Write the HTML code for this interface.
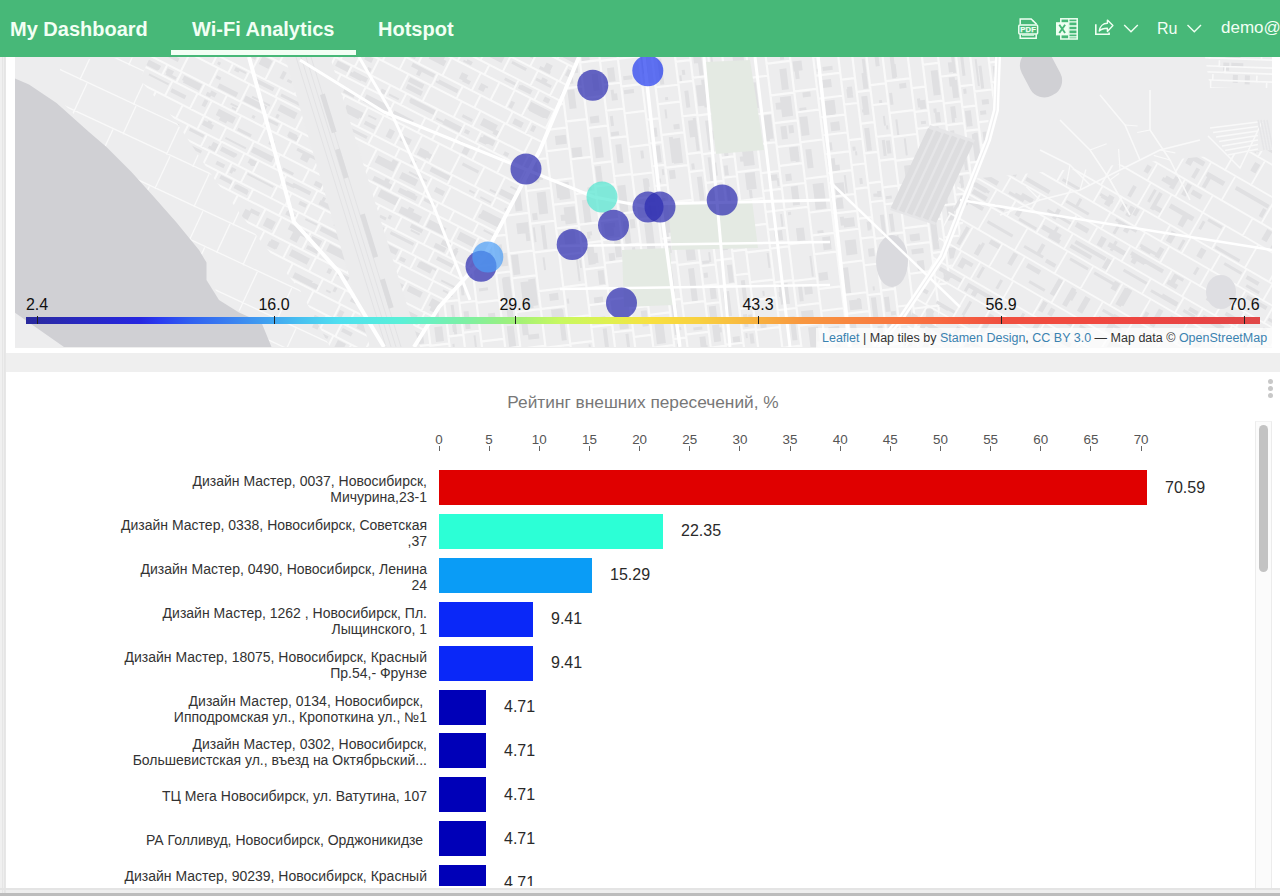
<!DOCTYPE html>
<html><head><meta charset="utf-8">
<style>
*{margin:0;padding:0;box-sizing:border-box}
html,body{width:1280px;height:896px;overflow:hidden;background:#efefef;font-family:"Liberation Sans",sans-serif}
#hdr{position:absolute;left:0;top:0;width:1280px;height:57px;background:#47b878;color:#f2fff4;z-index:5}
.nav{position:absolute;top:15px;font-size:20px;font-weight:bold;white-space:nowrap;line-height:24px}
#uline{position:absolute;left:171px;top:50px;width:185px;height:5px;background:#f2fff4}
.hico{position:absolute}
#mapcard{position:absolute;left:6px;top:50px;width:1274px;height:303px;background:#fff}
#map{position:absolute;left:15px;top:57px;width:1257px;height:290.5px;overflow:hidden;background:#eeeeee}
#chartcard{position:absolute;left:6px;top:372px;width:1274px;height:517px;background:#fff}
#clip{position:absolute;left:0;top:0;width:1280px;height:886px;overflow:hidden}
.title{position:absolute;left:0;width:1286px;text-align:center;top:392.2px;font-size:17.3px;line-height:20px;color:#777}
.lbl{position:absolute;right:853px;font-size:14px;line-height:16px;color:#333;text-align:right;white-space:nowrap}
.bar{position:absolute;left:439px;height:35px}
.val{position:absolute;font-size:16px;color:#2a2a2a;line-height:18px;white-space:nowrap}
.tk{position:absolute;top:432px;font-size:13.4px;line-height:15px;color:#555;width:30px;text-align:center;margin-left:-15px}
.tkl{position:absolute;top:446px;width:1px;height:5px;background:#666}
#scroll{position:absolute;left:1255px;top:421px;width:17px;height:468px;background:#fbfbfb;border-left:1px solid #ececec;border-right:1px solid #ececec;border-top:1px solid #f2f2f2}
#thumb{position:absolute;left:1259px;top:425px;width:9px;height:147px;background:#c3c3c3;border-radius:5px}
.dot{position:absolute;left:1268px;width:5px;height:5px;border-radius:50%;background:#c8c8c8}
#botline{position:absolute;left:0;top:888px;width:1280px;height:2px;background:#e4e4e4}
#botbar{position:absolute;left:0;top:893px;width:1280px;height:3px;background:#bdbdbd}
#cbar{position:absolute;left:26px;top:317px;width:1234px;height:7px;background:linear-gradient(to right,#2a2a9c 0%,#2828c0 4.4%,#2626e0 9.2%,#2a3cf0 10.9%,#3060f0 13.3%,#3a80f0 16.5%,#40a0f0 19.4%,#48c0f0 22.2%,#50e0f0 25.4%,#5af0d8 30.3%,#80f0a0 36%,#a0f078 39.6%,#c8f860 43.3%,#e0f050 47.3%,#f8e040 50.6%,#f8d040 54.6%,#f8b040 59.5%,#f89840 62.7%,#f88040 68.4%,#f86840 74%,#f05040 78.9%,#f04840 87%,#e84444 95.1%,#e04848 100%)}
.cbt{position:absolute;top:316px;width:1px;height:8px;background:#222;margin-left:-0.5px}
.cbl{position:absolute;top:295.7px;width:60px;margin-left:-30px;text-align:center;font-size:16px;line-height:18px;color:#111}
#attr{position:absolute;left:816px;top:327.7px;width:456px;height:20px;background:rgba(255,255,255,0.7);font-size:12.5px;line-height:20px;color:#333;padding-left:6px;white-space:nowrap}
.lk{color:#3a82b0}
#lm{position:absolute;left:0;top:57px;width:6px;height:836px;background:linear-gradient(to right,#f0f0f0 0,#f0f0f0 2px,#e6e6e6 2.5px,#eeeeee 3.5px,#e5e5e5 4.5px,#e8e8e8 6px)}

</style></head><body>
<div id="hdr">
  <div class="nav" style="left:10px;top:17.4px">My Dashboard</div>
  <div class="nav" style="left:192px;top:17.4px">Wi-Fi Analytics</div>
  <div class="nav" style="left:378px;top:17.4px">Hotspot</div>
  <div id="uline"></div>
  <svg class="hico" style="left:1010px;top:10px" width="200" height="40" viewBox="0 0 200 40" fill="none" stroke="#effff2" stroke-width="1.5">
    <!-- PDF -->
    <path d="M10.2 14.5V8.9H21.2L26.2 13.9V14.5M10.2 24.3V28.3H26.2V24.3"/>
    <circle cx="23.4" cy="11.3" r="0.8" fill="#effff2" stroke="none"/>
    <rect x="8.8" y="14.9" width="18.8" height="9" rx="1"/>
    <path d="M12 25.2h12" stroke-width="1"/>
    <text x="18.2" y="22.4" font-family="Liberation Sans" font-size="7.6" font-weight="bold" fill="#effff2" stroke="#effff2" stroke-width="0.25" text-anchor="middle" letter-spacing="0.2">PDF</text>
    <!-- Excel -->
    <rect x="50.8" y="8.8" width="16.4" height="20.2"/>
    <path d="M58.8 8.8V29M58.8 11.8H67M58.8 16H67M58.8 19.8H67M58.8 23.8H67M58.8 26.8H67" stroke-width="1.3"/>
    <rect x="46" y="12.2" width="12.5" height="13.2" fill="#effff2" stroke="none"/>
    <path d="M49.3 14.8l5.8 8.2M55.1 14.8l-5.8 8.2" stroke="#47b878" stroke-width="1.9"/>
    <!-- share -->
    <path d="M85.8 14.2V24.3H99.1V22.4" stroke-width="1.6"/>
    <path d="M89.3 21.1C89.8 16.5 93 13.3 97.4 13.3V10.1L102.9 15.6L97.4 21.4V18.2C93.5 18.2 91 19 89.3 21.1Z" stroke-width="1.4" stroke-linejoin="round"/>
    <!-- chevrons -->
    <path d="M114.2 15L121 21.8L127.8 15" stroke-width="1.4"/>
    <path d="M177.5 15L184.3 21.8L191 15" stroke-width="1.4"/>
  </svg>
  <div class="nav" style="left:1157px;top:18.7px;font-weight:normal;font-size:16px;line-height:20px">Ru</div>
  <div class="nav" style="left:1221px;top:18.4px;font-weight:normal;font-size:17px;line-height:20px">demo@</div>
</div>

<div id="mapcard"></div><div id="map"><svg width="1258" height="290" viewBox="0 0 1258 290" style="position:absolute;left:0;top:0;filter:blur(0.45px)"><rect width="1258" height="290" fill="#ededee"/><defs><clipPath id="u0"><polygon points="135.0,0.0 565.0,0.0 525.0,93.0 469.0,200.0 424.0,250.0 399.0,290.0 315.0,290.0 285.0,233.0 245.0,183.0 200.0,123.0 160.0,63.0 125.0,23.0"/></clipPath><clipPath id="u1"><polygon points="565.0,0.0 985.0,0.0 970.0,83.0 915.0,290.0 399.0,290.0 424.0,250.0 469.0,200.0 525.0,93.0"/></clipPath><clipPath id="u2"><polygon points="945.0,123.0 1257.0,93.0 1257.0,290.0 885.0,290.0"/></clipPath><clipPath id="u3"><polygon points="1190.0,0.0 1257.0,0.0 1257.0,31.0 1195.0,31.0"/></clipPath><clipPath id="u4"><polygon points="45.0,3.0 135.0,0.0 125.0,23.0 160.0,63.0 200.0,123.0 245.0,183.0 285.0,233.0 315.0,290.0 256.0,290.0 246.0,265.0 204.0,243.0 191.0,205.0 184.0,193.0 139.0,140.0 91.0,90.0 45.0,43.0"/></clipPath></defs><g clip-path="url(#u0)"><g transform="rotate(27 345 145)"><path d="M10 -236h8v8h-8zM33 -237h6v5h-6zM63 -230h12v5h-12zM78 -239h29v6h-29zM115 -234h12v2h-12zM135 -232h19v3h-19zM165 -238h7v5h-7zM167 -236h7v4h-7zM178 -236h21v8h-21zM219 -239h4v2h-4zM209 -232h6v3h-6zM257 -235h11v4h-11zM291 -228h6v3h-6zM285 -232h6v2h-6zM313 -237h17v6h-17zM344 -239h15v5h-15zM406 -230h9v3h-9zM442 -235h7v3h-7zM464 -238h7v5h-7zM473 -229h4v3h-4zM483 -237h14v6h-14zM482 -238h18v8h-18zM516 -230h12v3h-12zM537 -232h9v7h-9zM555 -231h6v2h-6zM598 -232h11v5h-11zM591 -238h12v6h-12zM616 -228h7v3h-7zM633 -239h10v3h-10zM638 -231h5v4h-5zM685 -239h8v7h-8zM688 -235h3v5h-3zM703 -234h10v2h-10zM-38 -219h25v3h-25zM-3 -218h9v2h-9zM11 -221h15v2h-15zM17 -218h5v2h-5zM49 -221h17v5h-17zM45 -217h19v2h-19zM78 -218h4v5h-4zM113 -216h19v3h-19zM148 -219h13v5h-13zM169 -220h17v3h-17zM235 -221h8v2h-8zM225 -218h7v3h-7zM256 -218h16v5h-16zM277 -219h13v2h-13zM295 -219h4v4h-4zM317 -220h7v5h-7zM328 -216h6v3h-6zM329 -219h4v5h-4zM345 -221h10v4h-10zM370 -219h8v3h-8zM395 -218h15v3h-15zM438 -217h9v2h-9zM429 -219h21v4h-21zM496 -221h6v3h-6zM514 -217h11v2h-11zM523 -219h5v2h-5zM537 -215h18v2h-18zM559 -221h5v5h-5zM575 -216h10v3h-10zM591 -218h18v2h-18zM596 -220h19v4h-19zM626 -219h12v5h-12zM638 -218h7v4h-7zM658 -221h11v2h-11zM-39 -201h25v4h-25zM10 -202h11v5h-11zM8 -202h7v7h-7zM29 -207h16v2h-16zM61 -204h6v2h-6zM91 -209h6v9h-6zM78 -206h19v6h-19zM134 -206h11v4h-11zM134 -206h11v5h-11zM153 -204h10v7h-10zM184 -207h9v5h-9zM217 -203h11v8h-11zM239 -208h9v8h-9zM268 -201h17v7h-17zM272 -206h13v7h-13zM292 -208h3v9h-3zM309 -199h16v4h-16zM329 -203h13v9h-13zM354 -206h9v7h-9zM348 -209h12v7h-12zM373 -206h8v7h-8zM368 -201h12v4h-12zM393 -200h9v5h-9zM416 -198h11v3h-11zM409 -204h8v8h-8zM434 -206h27v4h-27zM431 -204h26v4h-26zM467 -205h14v2h-14zM495 -201h8v3h-8zM489 -203h18v5h-18zM516 -202h26v5h-26zM548 -208h23v8h-23zM578 -208h19v8h-19zM580 -200h17v3h-17zM601 -203h9v9h-9zM623 -207h16v9h-16zM663 -205h14v6h-14zM652 -209h20v6h-20zM686 -209h5v8h-5zM696 -206h21v7h-21zM738 -208h10v2h-10zM725 -200h17v4h-17zM-38 -189h10v3h-10zM-37 -189h8v10h-8zM-14 -185h17v6h-17zM-18 -179h19v4h-19zM13 -182h11v6h-11zM47 -186h11v5h-11zM28 -187h27v5h-27zM122 -190h7v6h-7zM134 -178h20v6h-20zM191 -187h10v9h-10zM193 -179h8v7h-8zM208 -184h15v3h-15zM232 -188h15v4h-15zM229 -182h23v7h-23zM260 -180h12v3h-12zM258 -184h4v10h-4zM280 -181h12v2h-12zM300 -181h9v3h-9zM319 -185h12v4h-12zM314 -189h24v7h-24zM349 -186h17v10h-17zM344 -184h17v7h-17zM380 -178h14v2h-14zM372 -181h21v8h-21zM402 -189h21v4h-21zM459 -181h19v2h-19zM487 -182h4v10h-4zM484 -186h4v7h-4zM521 -187h4v8h-4zM541 -185h17v8h-17zM551 -183h13v4h-13zM570 -179h25v2h-25zM600 -182h10v10h-10zM618 -187h16v8h-16zM677 -182h9v8h-9zM664 -183h12v6h-12zM693 -178h7v4h-7zM696 -175h17v2h-17zM720 -181h5v7h-5zM-31 -162h17v3h-17zM23 -166h11v5h-11zM18 -165h20v2h-20zM50 -166h15v6h-15zM75 -165h3v5h-3zM89 -166h16v3h-16zM134 -167h19v6h-19zM134 -165h21v3h-21zM175 -163h8v4h-8zM186 -163h25v5h-25zM194 -166h21v6h-21zM225 -165h6v2h-6zM224 -164h3v6h-3zM246 -168h13v4h-13zM241 -163h20v4h-20zM275 -165h4v5h-4zM286 -166h9v5h-9zM303 -164h28v3h-28zM353 -163h13v5h-13zM342 -167h5v4h-5zM381 -165h12v4h-12zM373 -162h23v4h-23zM401 -166h22v2h-22zM430 -163h16v5h-16zM455 -162h5v2h-5zM468 -166h11v3h-11zM469 -165h9v5h-9zM488 -163h22v4h-22zM485 -166h22v6h-22zM524 -162h17v2h-17zM525 -166h9v6h-9zM550 -164h7v6h-7zM576 -167h9v6h-9zM637 -162h7v3h-7zM659 -165h11v5h-11zM660 -164h7v3h-7zM716 -167h3v4h-3zM-38 -154h22v3h-22zM-3 -154h12v8h-12zM28 -153h3v4h-3zM17 -149h12v8h-12zM37 -154h21v7h-21zM72 -149h12v3h-12zM73 -147h9v8h-9zM98 -153h16v3h-16zM97 -146h19v7h-19zM123 -143h13v2h-13zM184 -153h21v3h-21zM191 -148h17v5h-17zM213 -144h11v5h-11zM304 -153h10v8h-10zM330 -150h4v9h-4zM350 -147h13v4h-13zM390 -151h7v7h-7zM372 -147h4v6h-4zM408 -151h7v9h-7zM405 -149h12v2h-12zM455 -154h11v5h-11zM472 -152h31v6h-31zM484 -153h13v9h-13zM511 -152h4v5h-4zM511 -144h14v5h-14zM529 -150h19v3h-19zM532 -152h8v5h-8zM569 -153h5v9h-5zM553 -145h19v2h-19zM594 -150h16v3h-16zM590 -152h27v5h-27zM623 -145h8v4h-8zM679 -146h4v4h-4zM679 -147h27v7h-27zM711 -145h12v4h-12zM734 -151h20v6h-20zM735 -147h11v9h-11zM-39 -132h12v5h-12zM-20 -131h15v5h-15zM-22 -133h14v4h-14zM17 -130h22v3h-22zM55 -132h22v7h-22zM51 -129h21v5h-21zM95 -127h10v3h-10zM93 -127h4v4h-4zM116 -133h7v5h-7zM152 -126h3v3h-3zM170 -134h10v5h-10zM173 -133h13v7h-13zM189 -133h16v5h-16zM226 -134h4v3h-4zM247 -133h17v5h-17zM278 -133h9v5h-9zM301 -131h10v3h-10zM323 -129h18v5h-18zM323 -131h24v3h-24zM359 -132h4v7h-4zM390 -130h11v6h-11zM409 -132h6v4h-6zM410 -131h26v4h-26zM445 -128h9v5h-9zM448 -134h9v4h-9zM464 -132h18v2h-18zM501 -128h9v4h-9zM528 -132h19v7h-19zM559 -126h7v3h-7zM552 -131h17v5h-17zM610 -133h14v6h-14zM624 -125h4v2h-4zM640 -129h4v3h-4zM635 -130h4v4h-4zM648 -131h9v5h-9zM700 -131h10v3h-10zM696 -131h18v3h-18zM726 -130h16v3h-16zM721 -129h25v6h-25zM-39 -116h15v4h-15zM-7 -119h18v4h-18zM0 -117h3v2h-3zM32 -117h8v5h-8zM20 -118h13v4h-13zM47 -118h12v5h-12zM54 -118h4v5h-4zM67 -116h19v4h-19zM101 -118h7v3h-7zM122 -116h19v2h-19zM146 -115h11v2h-11zM146 -119h8v4h-8zM161 -118h9v3h-9zM178 -116h15v4h-15zM187 -116h7v4h-7zM199 -119h13v3h-13zM206 -119h5v2h-5zM239 -116h4v3h-4zM225 -117h18v2h-18zM255 -117h11v4h-11zM256 -118h8v4h-8zM313 -118h28v3h-28zM319 -118h15v4h-15zM351 -117h7v4h-7zM364 -118h24v3h-24zM364 -118h25v2h-25zM400 -116h15v4h-15zM428 -116h10v4h-10zM426 -117h14v5h-14zM447 -116h20v4h-20zM475 -119h10v5h-10zM478 -115h8v2h-8zM502 -119h11v4h-11zM500 -115h18v3h-18zM538 -114h5v2h-5zM554 -116h10v3h-10zM556 -117h10v2h-10zM579 -118h9v4h-9zM634 -115h8v2h-8zM667 -117h8v2h-8zM659 -119h4v5h-4zM702 -118h6v5h-6zM697 -116h11v2h-11zM719 -117h3v3h-3zM-29 -105h14v7h-14zM-35 -107h14v4h-14zM-6 -106h11v4h-11zM27 -106h11v4h-11zM48 -102h14v4h-14zM75 -100h9v2h-9zM98 -107h8v2h-8zM147 -104h18v5h-18zM179 -104h5v8h-5zM185 -98h3v3h-3zM223 -104h10v8h-10zM220 -97h12v2h-12zM243 -104h16v8h-16zM254 -108h10v5h-10zM300 -108h12v6h-12zM313 -103h13v3h-13zM338 -104h9v7h-9zM337 -106h15v2h-15zM356 -108h23v8h-23zM386 -103h4v3h-4zM391 -101h7v6h-7zM409 -105h6v5h-6zM419 -101h4v2h-4zM429 -107h4v8h-4zM427 -103h14v3h-14zM471 -102h16v3h-16zM490 -98h10v2h-10zM495 -105h6v6h-6zM516 -97h15v2h-15zM514 -103h13v8h-13zM543 -107h8v8h-8zM582 -103h11v2h-11zM610 -97h9v2h-9zM630 -106h9v7h-9zM651 -102h7v2h-7zM670 -100h11v5h-11zM679 -100h6v2h-6zM708 -104h12v2h-12zM730 -105h6v5h-6zM725 -101h9v6h-9zM-35 -87h7v9h-7zM-37 -84h13v2h-13zM-18 -87h7v8h-7zM-2 -77h20v3h-20zM21 -82h3v7h-3zM27 -91h13v7h-13zM57 -83h14v4h-14zM91 -79h10v2h-10zM119 -81h4v3h-4zM137 -86h19v5h-19zM162 -89h14v3h-14zM183 -85h24v9h-24zM182 -86h17v4h-17zM247 -90h11v10h-11zM253 -82h4v6h-4zM269 -83h5v3h-5zM287 -91h10v8h-10zM312 -89h11v3h-11zM329 -85h5v10h-5zM353 -87h16v2h-16zM389 -82h5v6h-5zM382 -84h3v8h-3zM434 -90h15v8h-15zM460 -84h13v8h-13zM481 -85h12v10h-12zM504 -85h10v7h-10zM505 -86h28v9h-28zM547 -90h6v2h-6zM550 -86h8v10h-8zM579 -80h14v2h-14zM635 -78h26v2h-26zM633 -80h21v3h-21zM674 -88h14v7h-14zM714 -90h13v4h-13zM-31 -64h9v6h-9zM31 -66h5v8h-5zM61 -70h7v6h-7zM83 -60h20v4h-20zM111 -63h11v2h-11zM139 -60h8v3h-8zM154 -63h13v8h-13zM155 -65h8v3h-8zM177 -67h15v6h-15zM211 -63h4v4h-4zM236 -63h15v5h-15zM232 -63h18v8h-18zM256 -70h12v7h-12zM281 -63h15v8h-15zM281 -59h14v4h-14zM312 -64h10v6h-10zM303 -69h21v2h-21zM333 -68h16v3h-16zM385 -60h10v4h-10zM430 -68h4v7h-4zM448 -64h7v9h-7zM444 -58h12v3h-12zM470 -68h11v7h-11zM492 -69h14v7h-14zM494 -66h15v6h-15zM522 -66h5v6h-5zM532 -68h11v9h-11zM557 -68h11v4h-11zM558 -69h11v4h-11zM576 -70h20v6h-20zM639 -68h18v9h-18zM662 -69h21v7h-21zM665 -60h20v3h-20zM691 -65h4v3h-4zM710 -70h4v3h-4zM-34 -50h16v6h-16zM-2 -48h9v7h-9zM1 -50h7v5h-7zM35 -46h7v4h-7zM64 -51h7v8h-7zM105 -43h8v2h-8zM84 -50h8v2h-8zM149 -45h5v7h-5zM159 -48h3v4h-3zM194 -46h14v4h-14zM194 -47h15v2h-15zM221 -48h11v7h-11zM221 -48h6v5h-6zM241 -49h10v3h-10zM246 -47h6v7h-6zM265 -48h3v3h-3zM272 -46h5v4h-5zM281 -41h11v2h-11zM319 -49h4v5h-4zM346 -50h5v8h-5zM364 -48h13v8h-13zM390 -51h18v8h-18zM417 -50h16v3h-16zM451 -49h6v4h-6zM446 -46h17v3h-17zM475 -49h6v8h-6zM487 -50h7v8h-7zM485 -51h14v7h-14zM520 -44h11v6h-11zM544 -51h5v7h-5zM587 -47h23v6h-23zM596 -48h18v8h-18zM622 -49h17v2h-17zM619 -48h18v7h-18zM647 -49h12v3h-12zM687 -45h3v2h-3zM710 -46h17v2h-17zM-30 -32h8v4h-8zM-14 -31h8v4h-8zM-14 -33h16v5h-16zM15 -32h17v4h-17zM48 -34h8v4h-8zM59 -34h3v4h-3zM70 -31h24v2h-24zM81 -34h11v5h-11zM98 -32h3v3h-3zM98 -34h11v5h-11zM118 -33h15v2h-15zM142 -31h14v2h-14zM141 -33h30v5h-30zM187 -31h9v3h-9zM186 -33h12v3h-12zM211 -32h6v5h-6zM232 -32h13v5h-13zM268 -33h16v5h-16zM278 -33h5v4h-5zM292 -32h9v2h-9zM289 -33h10v5h-10zM306 -30h18v3h-18zM336 -32h8v5h-8zM342 -32h5v2h-5zM359 -32h3v4h-3zM376 -31h6v4h-6zM373 -29h5v2h-5zM418 -32h12v3h-12zM434 -32h5v4h-5zM436 -33h12v5h-12zM462 -33h6v5h-6zM479 -32h21v5h-21zM484 -34h5v3h-5zM510 -34h28v4h-28zM515 -34h25v2h-25zM572 -32h4v2h-4zM574 -33h17v5h-17zM613 -30h15v3h-15zM649 -31h10v2h-10zM664 -33h10v2h-10zM663 -32h10v4h-10zM683 -34h15v3h-15zM693 -33h5v4h-5zM709 -34h17v5h-17zM-32 -16h4v9h-4zM-39 -20h9v8h-9zM-18 -19h16v5h-16zM-15 -14h10v3h-10zM13 -17h3v8h-3zM11 -17h11v3h-11zM77 -20h3v9h-3zM76 -18h16v8h-16zM106 -21h11v8h-11zM116 -18h3v4h-3zM158 -21h19v9h-19zM159 -17h18v9h-18zM188 -23h10v9h-10zM210 -15h5v2h-5zM228 -18h9v6h-9zM253 -17h20v7h-20zM281 -22h6v4h-6zM301 -16h6v6h-6zM322 -14h7v7h-7zM346 -23h9v9h-9zM341 -20h17v6h-17zM377 -17h7v7h-7zM381 -13h8v4h-8zM399 -16h6v7h-6zM399 -16h8v2h-8zM434 -14h4v7h-4zM452 -22h22v8h-22zM454 -15h16v2h-16zM486 -11h13v2h-13zM508 -23h14v5h-14zM557 -14h14v6h-14zM583 -13h5v3h-5zM600 -17h25v5h-25zM611 -16h14v6h-14zM638 -19h12v2h-12zM663 -20h22v9h-22zM716 -17h26v9h-26zM725 -13h19v5h-19zM-35 1h11v5h-11zM-35 5h7v2h-7zM18 3h3v3h-3zM33 1h20v5h-20zM33 -1h21v2h-21zM60 0h13v5h-13zM78 -3h21v6h-21zM97 -2h10v3h-10zM122 -3h8v6h-8zM117 3h8v4h-8zM142 -1h14v2h-14zM162 -1h17v5h-17zM211 -3h12v2h-12zM240 4h15v3h-15zM230 1h23v2h-23zM289 2h6v5h-6zM329 -3h25v4h-25zM337 1h4v5h-4zM358 2h4v2h-4zM360 0h22v4h-22zM445 0h10v6h-10zM464 -2h4v6h-4zM488 2h16v5h-16zM509 1h8v2h-8zM530 -3h6v5h-6zM551 -2h12v2h-12zM551 -2h6v4h-6zM571 -3h5v6h-5zM602 -2h9v3h-9zM603 1h9v2h-9zM643 0h3v5h-3zM636 -2h7v6h-7zM650 1h14v2h-14zM654 -2h7v4h-7zM673 -1h13v5h-13zM692 -1h14v5h-14zM729 -1h10v5h-10zM713 3h21v3h-21zM-31 14h16v7h-16zM26 16h3v4h-3zM25 14h19v7h-19zM59 11h15v6h-15zM84 18h13v4h-13zM104 18h16v7h-16zM135 16h13v5h-13zM136 16h11v5h-11zM155 20h23v3h-23zM189 19h16v5h-16zM221 12h13v2h-13zM219 18h17v2h-17zM241 21h14v2h-14zM248 12h3v5h-3zM270 13h5v6h-5zM291 21h4v4h-4zM284 11h8v5h-8zM333 11h16v5h-16zM334 18h17v5h-17zM397 20h11v3h-11zM432 19h5v5h-5zM417 14h16v8h-16zM522 20h5v5h-5zM546 15h7v5h-7zM571 18h3v2h-3zM604 12h4v7h-4zM618 20h13v5h-13zM648 17h8v7h-8zM665 17h13v4h-13zM686 15h10v5h-10zM711 20h16v3h-16zM-32 30h4v6h-4zM-37 30h20v6h-20zM-11 34h16v3h-16zM-8 34h7v3h-7zM39 30h6v3h-6zM65 29h14v3h-14zM67 30h8v3h-8zM94 31h9v3h-9zM89 34h9v4h-9zM111 32h11v3h-11zM119 31h4v4h-4zM143 29h12v6h-12zM218 34h6v2h-6zM219 32h10v3h-10zM253 35h3v3h-3zM238 29h13v5h-13zM261 29h14v6h-14zM278 33h13v4h-13zM280 31h16v5h-16zM313 34h5v4h-5zM322 35h11v2h-11zM343 29h21v4h-21zM344 29h27v5h-27zM375 35h24v2h-24zM383 32h19v6h-19zM406 32h5v4h-5zM425 29h13v6h-13zM423 32h8v5h-8zM451 34h5v4h-5zM482 32h16v4h-16zM510 33h24v5h-24zM553 34h3v3h-3zM547 35h9v3h-9zM565 29h21v3h-21zM566 30h14v3h-14zM617 34h5v3h-5zM609 32h26v6h-26zM649 31h17v6h-17zM640 29h21v3h-21zM671 32h4v6h-4zM671 29h24v3h-24zM703 29h4v4h-4zM704 31h12v6h-12zM726 30h3v5h-3zM720 32h14v2h-14zM-32 49h12v2h-12zM-12 44h11v8h-11zM24 43h8v8h-8zM51 45h17v2h-17zM50 42h5v5h-5zM72 48h16v5h-16zM79 48h5v5h-5zM109 42h18v2h-18zM136 47h15v6h-15zM133 47h3v5h-3zM176 42h5v4h-5zM181 46h3v4h-3zM191 42h15v5h-15zM215 48h3v5h-3zM247 50h14v5h-14zM280 50h12v5h-12zM302 46h27v8h-27zM334 48h22v5h-22zM413 48h6v7h-6zM406 45h16v2h-16zM484 42h21v7h-21zM509 51h8v3h-8zM562 43h7v6h-7zM579 44h11v5h-11zM573 50h12v4h-12zM597 46h17v7h-17zM617 43h12v7h-12zM618 52h5v3h-5zM652 46h5v8h-5zM668 44h14v6h-14zM669 46h14v4h-14zM687 43h26v7h-26zM691 45h11v3h-11zM-34 60h21v3h-21zM-38 67h4v8h-4zM-8 70h24v5h-24zM-10 69h16v7h-16zM22 61h9v9h-9zM26 67h10v9h-10zM41 62h6v5h-6zM39 69h9v4h-9zM63 60h22v4h-22zM69 60h13v3h-13zM126 68h17v9h-17zM157 59h30v7h-30zM192 59h10v9h-10zM197 59h6v9h-6zM217 63h4v8h-4zM225 68h5v3h-5zM243 64h22v10h-22zM269 62h12v10h-12zM290 66h16v6h-16zM289 64h19v6h-19zM313 70h12v4h-12zM313 63h9v2h-9zM338 66h6v9h-6zM352 66h11v6h-11zM352 67h9v3h-9zM374 69h10v8h-10zM377 70h11v5h-11zM419 63h18v3h-18zM455 74h7v2h-7zM465 69h25v6h-25zM472 62h19v2h-19zM501 67h13v4h-13zM497 70h19v6h-19zM524 59h14v5h-14zM536 60h6v3h-6zM549 63h25v7h-25zM577 61h3v4h-3zM615 64h14v10h-14zM614 60h12v5h-12zM639 64h10v4h-10zM663 62h11v9h-11zM689 68h9v3h-9zM684 70h24v2h-24zM-9 83h6v4h-6zM7 81h7v5h-7zM40 81h3v5h-3zM24 83h25v5h-25zM66 81h6v5h-6zM122 86h4v2h-4zM124 81h17v5h-17zM155 84h3v3h-3zM176 81h9v2h-9zM173 81h5v4h-5zM196 82h21v4h-21zM226 84h23v3h-23zM255 81h8v4h-8zM277 83h17v3h-17zM276 83h16v4h-16zM303 83h19v3h-19zM372 83h5v5h-5zM393 81h21v5h-21zM437 84h6v2h-6zM450 85h12v2h-12zM477 84h3v3h-3zM489 82h12v2h-12zM509 82h9v3h-9zM512 81h6v2h-6zM528 85h5v2h-5zM525 85h8v3h-8zM571 82h11v3h-11zM565 81h20v4h-20zM595 85h12v2h-12zM643 82h6v3h-6zM673 85h3v3h-3zM664 81h10v3h-10zM689 83h10v5h-10zM691 83h10v2h-10zM717 82h11v2h-11zM714 81h11v3h-11zM-27 100h12v2h-12zM-7 96h25v5h-25zM30 102h5v4h-5zM47 100h18v4h-18zM51 103h17v5h-17zM82 95h12v6h-12zM83 98h7v6h-7zM105 99h14v4h-14zM160 97h5v3h-5zM166 103h21v5h-21zM195 102h24v6h-24zM201 99h20v2h-20zM230 94h19v7h-19zM231 104h3v4h-3zM267 105h7v3h-7zM288 104h17v3h-17zM355 92h6v9h-6zM340 95h21v8h-21zM375 95h20v2h-20zM369 99h18v7h-18zM406 97h10v5h-10zM457 101h23v4h-23zM458 96h24v7h-24zM490 98h18v6h-18zM492 98h17v8h-17zM517 103h20v5h-20zM526 93h9v3h-9zM556 93h3v4h-3zM550 97h10v2h-10zM568 95h8v9h-8zM574 95h4v2h-4zM582 98h26v3h-26zM584 94h18v5h-18zM613 93h11v5h-11zM612 94h22v5h-22zM654 106h10v2h-10zM684 99h13v5h-13zM714 102h7v3h-7zM-30 115h6v4h-6zM-16 115h17v3h-17zM21 113h7v2h-7zM42 115h7v2h-7zM38 112h16v5h-16zM89 116h16v4h-16zM92 114h14v5h-14zM114 117h11v3h-11zM113 113h7v5h-7zM131 112h20v5h-20zM133 114h18v5h-18zM159 116h5v4h-5zM162 113h6v5h-6zM185 115h8v2h-8zM188 118h5v2h-5zM210 116h3v3h-3zM226 112h11v3h-11zM251 115h10v5h-10zM250 114h9v5h-9zM293 116h5v4h-5zM321 114h9v3h-9zM320 114h14v2h-14zM357 112h5v5h-5zM346 115h20v5h-20zM382 113h9v4h-9zM374 114h20v5h-20zM401 112h11v3h-11zM406 113h7v2h-7zM468 113h19v2h-19zM497 114h24v3h-24zM509 115h4v5h-4zM529 112h11v4h-11zM581 113h13v5h-13zM612 115h11v5h-11zM622 116h4v4h-4zM649 112h9v2h-9zM640 113h23v5h-23zM673 113h12v4h-12zM671 112h16v5h-16zM704 114h8v5h-8zM704 113h7v4h-7zM724 113h7v4h-7zM-15 131h17v5h-17zM-6 133h5v2h-5zM29 124h3v8h-3zM21 135h16v2h-16zM45 133h8v3h-8zM65 128h6v4h-6zM62 127h8v4h-8zM82 130h8v7h-8zM99 126h22v2h-22zM126 129h16v4h-16zM160 124h4v7h-4zM182 132h8v4h-8zM177 126h19v7h-19zM203 134h15v3h-15zM237 130h5v5h-5zM265 125h22v3h-22zM272 127h8v7h-8zM297 131h21v2h-21zM298 129h13v4h-13zM324 129h15v5h-15zM325 127h4v7h-4zM358 124h20v8h-20zM391 127h6v7h-6zM384 130h23v7h-23zM415 129h19v8h-19zM448 126h18v8h-18zM481 131h15v5h-15zM483 125h3v7h-3zM546 130h5v7h-5zM552 126h22v8h-22zM592 132h13v3h-13zM610 126h5v5h-5zM612 127h11v3h-11zM628 126h5v8h-5zM627 129h3v7h-3zM647 125h17v5h-17zM650 128h13v6h-13zM669 125h13v6h-13zM692 129h3v8h-3zM729 127h15v5h-15zM-32 141h6v5h-6zM-39 143h5v4h-5zM-20 148h11v3h-11zM-18 142h5v4h-5zM7 144h19v5h-19zM12 146h16v5h-16zM48 147h11v5h-11zM69 146h22v5h-22zM71 142h20v7h-20zM173 141h4v7h-4zM169 143h11v5h-11zM196 148h23v2h-23zM225 144h23v6h-23zM261 149h12v3h-12zM296 146h8v5h-8zM296 147h7v3h-7zM308 145h19v7h-19zM377 143h3v4h-3zM369 147h7v3h-7zM401 141h13v4h-13zM403 146h10v2h-10zM431 147h12v5h-12zM436 141h9v5h-9zM451 142h3v4h-3zM450 144h5v7h-5zM496 142h27v2h-27zM509 145h9v7h-9zM532 143h9v5h-9zM550 148h6v2h-6zM587 143h15v3h-15zM626 146h3v6h-3zM624 146h5v2h-5zM661 149h17v3h-17zM671 143h14v2h-14zM700 144h18v6h-18zM730 145h5v3h-5zM734 147h3v2h-3zM-2 158h18v3h-18zM26 160h10v6h-10zM86 159h11v3h-11zM84 156h10v2h-10zM106 159h7v4h-7zM133 158h16v5h-16zM160 156h16v3h-16zM185 163h8v3h-8zM187 158h6v5h-6zM207 158h7v3h-7zM197 158h16v5h-16zM230 156h3v6h-3zM227 156h8v5h-8zM277 158h20v4h-20zM270 160h10v3h-10zM310 157h3v4h-3zM309 161h15v5h-15zM341 158h13v2h-13zM331 159h19v6h-19zM359 159h5v3h-5zM364 157h15v6h-15zM386 157h26v3h-26zM439 158h18v4h-18zM508 161h14v4h-14zM507 157h7v4h-7zM525 157h14v3h-14zM528 156h15v5h-15zM552 156h14v2h-14zM552 157h26v6h-26zM617 159h23v3h-23zM650 160h21v4h-21zM677 161h12v4h-12zM711 160h8v6h-8zM720 157h4v2h-4zM738 158h19v6h-19zM19 170h4v6h-4zM36 174h21v3h-21zM43 170h10v6h-10zM64 170h12v5h-12zM98 174h12v5h-12zM122 171h13v4h-13zM115 171h10v4h-10zM145 173h10v5h-10zM148 173h6v6h-6zM164 171h17v3h-17zM199 173h9v4h-9zM215 172h5v3h-5zM215 175h3v3h-3zM232 170h29v2h-29zM291 171h8v4h-8zM332 172h5v6h-5zM342 172h6v3h-6zM343 176h14v4h-14zM363 178h19v2h-19zM388 170h13v6h-13zM406 175h6v4h-6zM426 170h18v2h-18zM425 171h15v6h-15zM453 177h15v2h-15zM474 173h15v4h-15zM476 174h9v6h-9zM498 175h16v5h-16zM500 174h19v2h-19zM566 173h7v5h-7zM583 176h25v4h-25zM595 171h14v3h-14zM612 171h9v3h-9zM622 174h12v4h-12zM682 172h9v5h-9zM677 173h13v2h-13zM698 174h13v5h-13zM705 173h6v4h-6zM715 175h10v2h-10zM-11 185h8v2h-8zM-13 184h9v3h-9zM7 186h5v3h-5zM2 187h12v2h-12zM20 186h16v4h-16zM47 189h24v3h-24zM48 186h22v2h-22zM81 188h13v2h-13zM78 188h16v4h-16zM143 187h7v4h-7zM143 186h4v5h-4zM209 184h13v4h-13zM215 184h4v3h-4zM227 185h13v3h-13zM226 186h15v4h-15zM285 184h3v5h-3zM284 186h10v4h-10zM304 184h13v2h-13zM322 184h26v5h-26zM354 184h4v5h-4zM369 184h9v2h-9zM459 185h6v2h-6zM469 188h5v4h-5zM471 190h23v2h-23zM541 187h10v5h-10zM596 184h17v2h-17zM617 185h13v4h-13zM616 189h13v3h-13zM635 187h11v5h-11zM636 185h14v2h-14zM680 186h8v3h-8zM673 187h8v5h-8zM739 187h4v5h-4zM734 188h6v2h-6zM-28 206h3v6h-3zM-15 201h4v9h-4zM-20 197h3v9h-3zM-5 203h3v7h-3zM29 202h10v5h-10zM65 202h6v9h-6zM76 204h25v7h-25zM81 199h18v2h-18zM120 203h9v8h-9zM105 202h25v7h-25zM141 204h21v5h-21zM167 200h28v7h-28zM251 200h10v4h-10zM246 203h7v9h-7zM269 201h10v9h-10zM299 202h8v8h-8zM293 196h19v6h-19zM318 207h12v4h-12zM318 197h11v7h-11zM337 196h25v8h-25zM375 201h12v9h-12zM392 201h27v9h-27zM402 199h20v6h-20zM427 197h15v6h-15zM456 205h20v5h-20zM453 198h21v8h-21zM492 204h16v8h-16zM485 200h20v8h-20zM512 204h25v3h-25zM544 204h23v3h-23zM547 200h12v6h-12zM579 208h23v2h-23zM587 202h8v8h-8zM610 197h27v2h-27zM678 197h14v6h-14zM686 203h11v4h-11zM701 203h12v6h-12zM714 196h5v3h-5zM731 199h11v9h-11zM732 204h5v7h-5zM-38 218h16v7h-16zM4 220h6v7h-6zM-1 219h5v2h-5zM31 222h3v3h-3zM16 221h14v3h-14zM42 223h9v4h-9zM43 221h18v2h-18zM69 217h26v2h-26zM104 222h9v4h-9zM122 217h11v2h-11zM122 224h9v3h-9zM151 220h17v2h-17zM181 222h18v4h-18zM187 222h5v6h-5zM203 222h15v4h-15zM213 220h5v7h-5zM227 224h3v3h-3zM231 220h3v4h-3zM283 218h9v7h-9zM282 221h9v5h-9zM306 218h20v7h-20zM347 218h4v5h-4zM358 217h12v4h-12zM388 217h8v6h-8zM405 223h13v4h-13zM404 219h12v7h-12zM425 220h23v4h-23zM479 216h31v2h-31zM562 219h7v6h-7zM557 218h12v7h-12zM574 217h12v7h-12zM643 219h4v4h-4zM640 221h7v5h-7zM656 218h21v7h-21zM682 220h17v4h-17zM681 221h14v7h-14zM722 224h13v4h-13zM723 216h12v4h-12zM-3 233h6v4h-6zM13 240h10v2h-10zM16 232h5v6h-5zM53 236h6v5h-6zM39 236h21v6h-21zM66 232h3v7h-3zM65 238h8v3h-8zM85 233h3v6h-3zM84 239h15v4h-15zM127 240h4v2h-4zM135 237h7v6h-7zM161 234h15v4h-15zM186 237h19v3h-19zM181 235h29v5h-29zM225 240h8v2h-8zM272 233h7v7h-7zM253 235h13v7h-13zM287 238h9v3h-9zM319 237h20v6h-20zM327 238h19v5h-19zM355 238h5v2h-5zM361 232h3v5h-3zM400 232h6v7h-6zM381 234h14v4h-14zM418 233h24v3h-24zM449 235h13v6h-13zM451 236h11v3h-11zM472 235h16v7h-16zM471 238h8v5h-8zM510 232h18v5h-18zM500 235h28v7h-28zM539 239h19v2h-19zM564 233h21v3h-21zM581 237h3v4h-3zM589 237h7v5h-7zM593 235h6v7h-6zM618 238h16v2h-16zM638 239h19v2h-19zM681 232h10v6h-10zM687 236h3v4h-3zM712 235h14v5h-14zM-34 252h6v5h-6zM-7 254h6v4h-6zM-12 247h24v5h-24zM25 250h11v2h-11zM70 248h27v6h-27zM108 248h25v4h-25zM106 250h24v7h-24zM181 251h12v7h-12zM200 250h18v6h-18zM224 255h29v3h-29zM224 248h20v5h-20zM259 247h8v5h-8zM260 253h9v4h-9zM293 249h4v7h-4zM302 249h13v5h-13zM312 255h10v3h-10zM326 253h8v6h-8zM376 250h5v7h-5zM399 256h12v3h-12zM398 249h14v7h-14zM428 249h5v2h-5zM456 254h14v3h-14zM463 248h8v4h-8zM478 251h14v5h-14zM500 256h23v3h-23zM505 251h15v7h-15zM533 255h8v2h-8zM578 251h9v2h-9zM570 252h13v5h-13zM601 248h9v7h-9zM627 247h5v7h-5zM623 249h9v6h-9zM666 248h22v4h-22zM694 249h3v3h-3zM729 255h13v4h-13zM735 251h7v3h-7zM-18 268h20v3h-20zM-8 266h14v2h-14zM9 264h11v6h-11zM92 263h13v5h-13zM114 263h7v7h-7zM120 268h4v2h-4zM129 269h18v3h-18zM155 266h4v6h-4zM161 268h4v6h-4zM178 267h5v6h-5zM173 267h14v3h-14zM222 268h10v5h-10zM223 263h9v3h-9zM243 269h11v3h-11zM265 263h18v5h-18zM263 270h16v3h-16zM291 263h4v7h-4zM356 266h8v4h-8zM387 265h11v4h-11zM422 264h3v6h-3zM422 264h4v4h-4zM465 267h10v6h-10zM470 268h21v2h-21zM499 268h17v4h-17zM527 270h10v4h-10zM544 267h10v6h-10zM577 272h10v2h-10zM592 265h11v4h-11zM594 268h6v6h-6zM607 265h10v7h-10zM613 268h3v5h-3zM649 267h3v7h-3zM652 268h8v6h-8zM683 264h13v5h-13zM701 263h29v3h-29zM-38 285h12v4h-12zM-15 282h8v2h-8zM6 285h7v3h-7zM35 279h3v8h-3zM33 278h10v8h-10zM48 283h8v7h-8zM70 283h17v2h-17zM104 287h7v5h-7zM94 284h16v3h-16zM122 280h4v8h-4zM136 282h14v3h-14zM143 283h4v3h-4zM165 278h8v8h-8zM186 284h23v5h-23zM189 280h20v5h-20zM213 278h10v8h-10zM214 280h3v8h-3zM242 278h9v3h-9zM264 285h20v6h-20zM328 279h10v8h-10zM350 289h11v2h-11zM346 282h11v8h-11zM368 279h10v3h-10zM388 278h9v8h-9zM405 286h13v5h-13zM405 282h12v7h-12zM429 285h6v5h-6zM436 278h5v2h-5zM468 285h9v7h-9zM458 285h18v4h-18zM488 288h17v2h-17zM486 279h21v5h-21zM522 282h14v2h-14zM545 279h27v5h-27zM580 280h12v8h-12zM601 278h7v5h-7zM644 279h14v7h-14zM680 280h7v8h-7zM674 280h8v6h-8zM701 279h13v3h-13zM694 278h22v7h-22zM722 282h13v8h-13zM719 281h19v6h-19zM-34 298h11v4h-11zM-37 296h17v4h-17zM-13 300h12v5h-12zM-16 301h3v5h-3zM11 297h4v4h-4zM29 300h20v5h-20zM64 300h7v6h-7zM60 297h9v4h-9zM102 298h16v2h-16zM131 299h10v6h-10zM158 297h4v3h-4zM160 298h7v6h-7zM175 300h15v4h-15zM181 296h5v6h-5zM206 303h13v3h-13zM203 301h16v3h-16zM272 296h18v5h-18zM264 299h24v6h-24zM294 301h18v3h-18zM319 298h15v6h-15zM318 299h21v4h-21zM347 299h16v4h-16zM345 303h16v2h-16zM417 296h16v5h-16zM405 301h27v5h-27zM442 301h3v5h-3zM454 303h20v3h-20zM493 296h20v6h-20zM484 299h30v5h-30zM530 303h13v3h-13zM559 301h19v4h-19zM570 297h3v6h-3zM585 296h5v6h-5zM603 301h17v3h-17zM646 296h7v6h-7zM637 301h7v4h-7zM678 299h16v6h-16zM679 301h13v4h-13zM728 302h6v2h-6zM723 296h7v5h-7zM-18 311h6v7h-6zM13 312h4v2h-4zM-3 313h25v6h-25zM34 312h27v8h-27zM69 318h21v4h-21zM68 317h18v6h-18zM103 310h6v3h-6zM117 314h9v8h-9zM146 321h9v2h-9zM151 318h3v3h-3zM159 313h8v3h-8zM162 310h7v2h-7zM175 312h13v4h-13zM177 310h6v5h-6zM198 314h7v7h-7zM197 314h9v6h-9zM217 318h20v2h-20zM245 316h11v6h-11zM273 313h16v3h-16zM267 318h25v2h-25zM295 310h10v4h-10zM295 314h14v3h-14zM318 314h20v7h-20zM347 316h5v7h-5zM343 311h11v4h-11zM357 312h16v2h-16zM417 315h15v2h-15zM415 312h9v8h-9zM439 313h10v6h-10zM464 318h16v5h-16zM466 314h24v5h-24zM516 310h5v2h-5zM538 312h22v8h-22zM534 313h21v4h-21zM574 313h15v7h-15zM601 310h5v6h-5zM620 317h27v2h-27zM634 315h10v8h-10zM659 316h17v7h-17zM657 311h6v7h-6zM684 316h11v7h-11zM705 314h5v5h-5zM725 317h19v4h-19zM726 317h17v6h-17zM-35 327h15v5h-15zM0 330h8v5h-8zM3 331h7v4h-7zM19 327h20v4h-20zM25 329h24v2h-24zM66 327h12v3h-12zM84 331h31v3h-31zM97 329h4v3h-4zM124 329h21v5h-21zM156 328h6v4h-6zM178 330h3v4h-3zM172 330h4v4h-4zM196 332h11v3h-11zM220 329h4v2h-4zM245 327h4v5h-4zM235 333h6v2h-6zM267 327h7v4h-7zM254 333h10v2h-10zM284 328h24v4h-24zM314 329h17v2h-17zM317 331h9v2h-9zM351 328h11v4h-11zM347 328h7v5h-7zM373 331h7v3h-7zM369 331h3v4h-3zM408 331h22v2h-22zM508 328h17v4h-17zM514 329h13v5h-13zM541 327h4v3h-4zM604 333h3v2h-3zM616 333h10v2h-10zM616 328h5v4h-5zM638 327h6v5h-6zM654 327h24v3h-24zM664 330h13v4h-13zM683 328h23v2h-23zM723 331h10v3h-10zM726 330h5v5h-5zM-38 343h15v5h-15zM-39 346h17v2h-17zM-10 344h14v4h-14zM21 339h6v6h-6zM37 341h21v7h-21zM40 345h21v5h-21zM71 343h7v2h-7zM73 343h10v5h-10zM95 342h18v4h-18zM119 339h18v6h-18zM149 341h7v4h-7zM155 340h4v6h-4zM171 344h13v6h-13zM213 339h3v7h-3zM231 344h9v5h-9zM260 340h12v4h-12zM280 345h22v3h-22zM279 341h14v7h-14zM312 339h10v3h-10zM306 339h12v4h-12zM330 346h13v4h-13zM336 343h5v2h-5zM376 343h11v5h-11zM395 341h11v7h-11zM406 341h14v4h-14zM499 339h16v6h-16zM528 344h19v3h-19zM588 340h28v3h-28zM589 342h3v4h-3zM638 347h7v2h-7zM671 344h3v2h-3zM655 340h8v7h-8zM710 339h10v7h-10zM719 343h12v6h-12zM-37 359h13v3h-13zM-38 364h15v2h-15zM-10 360h11v7h-11zM-12 356h15v8h-15zM31 354h13v5h-13zM31 364h14v3h-14zM56 363h5v4h-5zM71 358h6v3h-6zM82 356h20v8h-20zM97 361h7v2h-7zM108 356h3v4h-3zM132 356h20v5h-20zM159 355h20v8h-20zM194 354h3v8h-3zM209 355h4v8h-4zM232 356h8v3h-8zM249 359h17v2h-17zM312 356h9v6h-9zM309 358h4v3h-4zM334 362h14v5h-14zM328 362h16v5h-16zM355 357h19v8h-19zM365 356h6v7h-6zM380 359h12v6h-12zM388 356h7v7h-7zM402 361h11v6h-11zM404 359h10v6h-10zM425 357h6v6h-6zM488 365h12v2h-12zM494 356h3v4h-3zM511 356h13v5h-13zM523 359h6v4h-6zM535 359h12v3h-12zM561 359h18v5h-18zM649 358h8v8h-8zM658 354h3v2h-3zM676 359h9v5h-9zM698 354h4v5h-4zM705 363h7v4h-7zM720 357h19v3h-19zM719 355h4v7h-4zM-31 373h17v3h-17zM-29 374h7v6h-7zM-7 371h26v4h-26zM63 371h11v6h-11zM84 372h20v6h-20zM112 371h11v3h-11zM116 374h11v6h-11zM134 375h15v4h-15zM158 373h7v3h-7zM157 372h8v3h-8zM202 377h9v3h-9zM239 371h7v5h-7zM235 377h15v3h-15zM278 372h6v5h-6zM277 371h7v5h-7zM331 373h9v5h-9zM457 374h4v4h-4zM445 371h20v6h-20zM474 371h15v2h-15zM476 374h14v5h-14zM508 375h11v3h-11zM499 374h8v2h-8zM533 371h15v4h-15zM524 371h16v3h-16zM564 375h9v3h-9zM566 374h10v5h-10zM585 371h23v3h-23zM587 373h28v6h-28zM635 375h4v3h-4zM654 374h5v2h-5zM676 378h27v2h-27zM676 374h27v3h-27zM710 372h22v6h-22zM713 378h11v2h-11zM-32 394h7v2h-7zM-17 391h19v7h-19zM-16 385h16v3h-16zM13 386h17v7h-17zM14 393h25v4h-25zM54 392h3v3h-3zM69 388h16v7h-16zM75 390h8v3h-8zM95 385h26v3h-26zM139 388h8v4h-8zM161 385h6v3h-6zM180 386h14v8h-14zM184 390h5v8h-5zM204 392h3v6h-3zM262 389h22v9h-22zM273 384h19v6h-19zM297 386h12v8h-12zM300 394h8v3h-8zM323 393h14v4h-14zM340 397h4v2h-4zM352 385h6v9h-6zM367 396h22v3h-22zM392 389h25v7h-25zM393 394h10v2h-10zM422 390h23v5h-23zM434 394h12v5h-12zM451 384h12v6h-12zM455 394h7v2h-7zM477 384h16v6h-16zM505 388h26v9h-26zM576 384h4v2h-4zM571 385h9v9h-9zM587 391h27v5h-27zM602 386h7v3h-7zM626 392h12v3h-12zM628 395h10v3h-10zM645 385h13v7h-13zM642 394h12v3h-12zM668 385h23v7h-23zM-31 404h11v4h-11zM-36 406h23v7h-23zM-1 411h9v4h-9zM-6 409h3v3h-3zM15 403h8v5h-8zM20 405h6v5h-6zM42 403h16v6h-16zM49 404h8v5h-8zM64 404h7v3h-7zM63 404h18v6h-18zM103 406h7v7h-7zM90 406h19v7h-19zM129 405h7v7h-7zM123 413h17v2h-17zM143 409h10v2h-10zM144 408h13v4h-13zM167 403h8v5h-8zM165 405h9v6h-9zM182 404h11v7h-11zM188 404h23v7h-23zM218 408h13v5h-13zM234 403h23v6h-23zM241 412h19v2h-19zM271 403h8v7h-8zM294 410h5v2h-5zM285 410h9v3h-9zM315 405h15v5h-15zM342 413h21v2h-21zM373 408h15v4h-15zM383 410h14v3h-14zM414 408h11v7h-11zM411 408h7v4h-7zM432 409h9v5h-9zM430 404h9v7h-9zM446 408h12v2h-12zM450 407h4v3h-4zM485 405h21v3h-21zM493 404h10v2h-10zM511 412h29v3h-29zM522 406h18v4h-18zM544 403h13v3h-13zM569 405h7v7h-7zM568 405h17v2h-17zM619 406h13v5h-13zM628 405h5v6h-5zM648 407h18v3h-18zM670 408h15v4h-15zM674 406h10v3h-10zM693 408h20v5h-20zM701 406h23v6h-23zM733 406h14v6h-14zM-39 423h12v4h-12zM-14 421h7v3h-7zM11 421h18v4h-18zM39 420h4v6h-4zM48 420h4v5h-4zM64 427h16v2h-16zM59 420h10v2h-10zM85 422h21v3h-21zM95 419h6v5h-6zM126 419h15v3h-15zM181 424h9v4h-9zM194 421h24v6h-24zM204 426h9v3h-9zM233 425h9v3h-9zM257 425h10v4h-10zM251 423h15v6h-15zM281 423h8v3h-8zM317 423h3v6h-3zM303 425h12v3h-12zM337 420h23v6h-23zM389 424h12v5h-12zM385 422h16v4h-16zM432 421h8v4h-8zM450 421h14v4h-14zM450 423h12v6h-12zM473 420h27v4h-27zM510 423h3v6h-3zM515 420h4v6h-4zM558 423h10v2h-10zM558 424h9v2h-9zM578 419h4v4h-4zM592 426h19v3h-19zM627 423h8v4h-8zM620 425h15v4h-15zM646 421h8v5h-8zM643 421h16v5h-16zM687 423h6v6h-6zM703 426h4v3h-4zM715 422h16v5h-16zM-39 438h25v6h-25zM-4 435h11v6h-11zM45 444h19v3h-19zM45 438h25v8h-25zM78 433h9v6h-9zM94 442h19v4h-19zM118 433h17v5h-17zM122 442h4v2h-4zM140 436h25v6h-25zM147 433h15v4h-15zM181 436h10v7h-10zM174 442h22v4h-22zM207 440h25v7h-25zM210 435h7v4h-7zM274 434h3v5h-3zM270 441h23v2h-23zM303 434h5v7h-5zM301 433h12v3h-12zM320 437h6v2h-6zM336 440h15v2h-15zM336 433h14v4h-14zM437 434h19v8h-19zM465 438h12v8h-12zM466 444h3v2h-3zM483 437h6v4h-6zM484 436h5v5h-5zM507 438h16v5h-16zM530 433h26v4h-26zM572 434h22v8h-22zM604 438h21v7h-21zM635 441h19v2h-19zM639 437h15v7h-15zM662 439h19v7h-19zM678 433h3v7h-3zM687 434h9v4h-9zM703 433h11v5h-11zM725 435h17v3h-17zM722 437h17v8h-17zM-36 451h7v2h-7zM-14 452h5v5h-5zM-17 453h10v4h-10zM1 453h10v3h-10zM37 454h10v4h-10zM56 451h3v4h-3zM83 453h13v2h-13zM89 451h13v3h-13zM109 455h15v2h-15zM112 453h12v3h-12zM132 455h8v2h-8zM131 453h4v4h-4zM171 455h4v2h-4zM160 451h13v3h-13zM181 452h6v2h-6zM205 453h8v3h-8zM243 452h3v4h-3zM233 452h8v4h-8zM250 454h16v4h-16zM291 451h14v3h-14zM310 451h16v3h-16zM313 451h12v5h-12zM360 451h19v5h-19zM387 453h12v5h-12zM398 454h12v2h-12zM434 451h4v4h-4zM430 451h9v4h-9zM452 455h6v3h-6zM492 453h10v2h-10zM521 454h7v2h-7zM533 454h7v2h-7zM547 454h19v2h-19zM549 451h17v5h-17zM606 451h10v5h-10zM634 452h13v4h-13zM661 453h22v5h-22zM654 454h4v4h-4zM691 453h15v3h-15zM693 451h3v5h-3zM713 451h3v3h-3zM711 453h7v5h-7zM744 456h9v2h-9zM-39 469h17v4h-17zM-39 465h20v7h-20zM-10 468h4v5h-4zM-6 467h17v6h-17zM20 468h8v4h-8zM24 469h4v5h-4zM34 463h17v4h-17zM64 465h10v5h-10zM89 467h14v6h-14zM119 469h6v2h-6zM115 465h6v4h-6zM133 470h4v3h-4zM140 471h4v2h-4zM153 466h8v7h-8zM149 462h17v6h-17zM181 465h13v7h-13zM195 466h10v5h-10zM264 464h3v5h-3zM278 466h13v6h-13zM305 463h27v7h-27zM341 462h17v6h-17zM339 463h17v2h-17zM365 462h23v2h-23zM369 466h4v2h-4zM413 462h6v3h-6zM427 467h15v7h-15zM459 463h6v4h-6zM477 466h15v7h-15zM478 464h21v4h-21zM520 469h5v2h-5zM575 469h19v3h-19zM584 465h3v4h-3zM599 469h27v5h-27zM617 466h9v2h-9zM636 462h10v6h-10zM633 469h10v2h-10zM664 464h16v3h-16zM688 465h14v7h-14zM691 470h6v2h-6zM710 464h23v4h-23zM706 467h22v4h-22zM-39 481h5v5h-5zM0 480h20v2h-20zM56 481h13v2h-13zM56 478h13v2h-13zM95 481h29v4h-29zM132 483h18v3h-18zM133 482h18v3h-18zM167 478h13v5h-13zM158 482h25v4h-25zM191 479h25v5h-25zM225 480h20v3h-20zM249 481h19v2h-19zM280 479h25v3h-25zM275 481h17v3h-17zM309 478h7v5h-7zM320 480h4v5h-4zM340 481h17v5h-17zM338 481h7v5h-7zM366 480h19v5h-19zM398 483h5v2h-5zM412 479h19v2h-19zM438 479h15v3h-15zM437 482h17v3h-17zM461 478h25v5h-25zM509 479h5v2h-5zM523 483h11v3h-11zM545 483h14v3h-14zM545 480h10v5h-10zM590 478h11v3h-11zM593 483h10v2h-10zM611 480h16v2h-16zM643 479h4v5h-4zM662 482h28v2h-28zM671 483h16v3h-16zM702 480h9v4h-9zM724 482h13v3h-13zM733 478h3v4h-3zM-15 491h9v2h-9zM-17 490h8v4h-8zM-3 490h3v3h-3zM14 491h7v5h-7zM32 491h13v4h-13zM37 490h5v3h-5zM61 496h16v2h-16zM64 491h10v3h-10zM92 490h17v5h-17zM105 495h4v3h-4zM129 492h3v4h-3zM142 492h4v4h-4zM144 494h8v4h-8zM156 491h27v2h-27zM195 492h12v3h-12zM220 491h20v3h-20zM233 491h3v3h-3zM251 492h3v4h-3zM271 491h12v5h-12zM331 492h14v4h-14zM356 492h22v5h-22zM357 490h8v3h-8zM388 490h10v4h-10zM446 492h4v4h-4zM444 494h5v4h-5zM461 492h8v3h-8zM460 490h7v4h-7zM474 493h6v4h-6zM527 492h18v4h-18zM529 492h7v2h-7zM550 490h7v5h-7zM564 493h20v5h-20zM566 490h12v2h-12zM596 492h21v5h-21zM596 490h15v5h-15zM627 494h4v3h-4zM620 493h8v3h-8zM638 492h7v5h-7zM637 490h3v5h-3zM659 490h10v4h-10zM681 494h13v3h-13zM682 492h13v3h-13zM-34 508h9v2h-9zM-36 514h3v3h-3zM-7 514h5v6h-5zM-13 506h9v9h-9zM51 505h5v3h-5zM32 503h20v3h-20zM61 511h18v3h-18zM89 516h12v2h-12zM88 503h11v3h-11zM106 506h12v7h-12zM130 503h4v7h-4zM169 504h10v7h-10zM188 503h7v10h-7zM216 510h17v6h-17zM238 506h11v5h-11zM237 506h8v10h-8zM278 513h26v3h-26zM330 510h4v10h-4zM353 513h6v5h-6zM365 509h7v10h-7zM369 504h12v8h-12zM387 510h11v10h-11zM388 509h11v3h-11zM414 516h5v3h-5zM426 507h11v5h-11zM443 508h7v3h-7zM452 507h5v10h-5zM462 507h27v7h-27zM496 509h12v2h-12zM496 514h13v6h-13zM521 507h11v2h-11zM550 504h19v8h-19zM580 516h11v4h-11zM616 515h4v2h-4zM641 504h19v8h-19zM678 508h4v6h-4zM676 502h9v6h-9zM698 502h5v9h-5zM697 509h6v7h-6zM730 509h8v2h-8zM723 516h14v4h-14zM-30 529h5v5h-5zM-13 527h26v8h-26zM-9 532h10v4h-10zM18 527h7v7h-7zM37 527h13v6h-13zM40 532h10v4h-10zM58 525h15v8h-15zM60 527h14v8h-14zM79 528h22v4h-22zM112 526h8v4h-8zM108 526h11v3h-11zM136 533h20v3h-20zM202 527h9v8h-9zM215 533h13v2h-13zM241 528h8v5h-8zM238 524h20v3h-20zM268 531h22v5h-22zM302 525h7v2h-7zM322 525h19v5h-19zM353 530h9v4h-9zM347 527h8v6h-8zM378 533h6v2h-6zM402 529h11v8h-11zM516 526h3v8h-3zM531 527h23v7h-23zM538 527h14v5h-14zM567 525h24v5h-24zM628 525h18v8h-18zM658 524h11v3h-11zM656 528h10v4h-10zM693 530h12v5h-12zM719 528h7v5h-7z" fill="#e0e0e2"/><path d="M-8 -240v18M22 -240v18M58 -240v18M76 -240v18M112 -240v18M129 -240v18M159 -240v18M175 -240v18M207 -240v18M226 -240v18M254 -240v18M282 -240v18M308 -240v18M339 -240v18M368 -240v18M392 -240v18M426 -240v18M462 -240v18M478 -240v18M501 -240v18M529 -240v18M552 -240v18M587 -240v18M611 -240v18M631 -240v18M647 -240v18M681 -240v18M699 -240v18M716 -240v18M736 -240v18M-40 -223h770M-11 -222v12M7 -222v12M41 -222v12M67 -222v12M85 -222v12M109 -222v12M136 -222v12M166 -222v12M188 -222v12M222 -222v12M244 -222v12M275 -222v12M301 -222v12M326 -222v12M342 -222v12M360 -222v12M391 -222v12M424 -222v12M452 -222v12M488 -222v12M507 -222v12M532 -222v12M565 -222v12M586 -222v12M618 -222v12M650 -222v12M672 -222v12M705 -222v12M737 -222v12M-40 -211h770M-7 -210v19M23 -210v19M55 -210v19M71 -210v19M98 -210v19M130 -210v19M146 -210v19M179 -210v19M214 -210v19M237 -210v19M266 -210v19M288 -210v19M306 -210v19M327 -210v19M346 -210v19M365 -210v19M387 -210v19M403 -210v19M429 -210v19M462 -210v19M487 -210v19M512 -210v19M546 -210v19M574 -210v19M598 -210v19M615 -210v19M646 -210v19M678 -210v19M694 -210v19M720 -210v19M749 -210v19M-40 -192h770M-22 -191v22M5 -191v22M25 -191v22M60 -191v22M92 -191v22M114 -191v22M131 -191v22M166 -191v22M184 -191v22M205 -191v22M225 -191v22M255 -191v22M276 -191v22M310 -191v22M341 -191v22M367 -191v22M399 -191v22M426 -191v22M456 -191v22M481 -191v22M497 -191v22M516 -191v22M534 -191v22M565 -191v22M598 -191v22M614 -191v22M641 -191v22M662 -191v22M690 -191v22M715 -191v22M732 -191v22M-40 -170h770M-6 -169v14M15 -169v14M40 -169v14M68 -169v14M85 -169v14M108 -169v14M132 -169v14M164 -169v14M184 -169v14M216 -169v14M232 -169v14M263 -169v14M281 -169v14M300 -169v14M334 -169v14M370 -169v14M398 -169v14M426 -169v14M447 -169v14M465 -169v14M483 -169v14M518 -169v14M544 -169v14M563 -169v14M586 -169v14M620 -169v14M656 -169v14M682 -169v14M703 -169v14M729 -169v14M-40 -156h770M-14 -155v20M14 -155v20M35 -155v20M67 -155v20M87 -155v20M117 -155v20M146 -155v20M181 -155v20M209 -155v20M226 -155v20M254 -155v20M272 -155v20M299 -155v20M328 -155v20M347 -155v20M370 -155v20M400 -155v20M426 -155v20M453 -155v20M469 -155v20M505 -155v20M526 -155v20M551 -155v20M587 -155v20M621 -155v20M645 -155v20M675 -155v20M709 -155v20M726 -155v20M755 -155v20M-40 -136h770M-24 -135v15M-4 -135v15M15 -135v15M49 -135v15M78 -135v15M110 -135v15M137 -135v15M167 -135v15M187 -135v15M212 -135v15M239 -135v15M265 -135v15M293 -135v15M314 -135v15M349 -135v15M382 -135v15M406 -135v15M442 -135v15M461 -135v15M486 -135v15M518 -135v15M549 -135v15M575 -135v15M607 -135v15M630 -135v15M646 -135v15M664 -135v15M692 -135v15M717 -135v15M749 -135v15M-40 -121h770M-13 -120v11M18 -120v11M45 -120v11M63 -120v11M91 -120v11M118 -120v11M142 -120v11M158 -120v11M174 -120v11M195 -120v11M218 -120v11M248 -120v11M276 -120v11M310 -120v11M346 -120v11M362 -120v11M398 -120v11M423 -120v11M444 -120v11M472 -120v11M493 -120v11M527 -120v11M551 -120v11M569 -120v11M602 -120v11M627 -120v11M657 -120v11M676 -120v11M694 -120v11M710 -120v11M739 -120v11M-40 -110h770M-14 -109v17M22 -109v17M44 -109v17M71 -109v17M87 -109v17M109 -109v17M143 -109v17M172 -109v17M190 -109v17M218 -109v17M235 -109v17M265 -109v17M297 -109v17M329 -109v17M353 -109v17M384 -109v17M403 -109v17M425 -109v17M448 -109v17M465 -109v17M488 -109v17M504 -109v17M537 -109v17M572 -109v17M606 -109v17M641 -109v17M666 -109v17M693 -109v17M722 -109v17M740 -109v17M-40 -93h770M-23 -92v21M-7 -92v21M19 -92v21M41 -92v21M77 -92v21M103 -92v21M132 -92v21M160 -92v21M180 -92v21M216 -92v21M243 -92v21M259 -92v21M278 -92v21M303 -92v21M325 -92v21M344 -92v21M379 -92v21M398 -92v21M423 -92v21M456 -92v21M478 -92v21M500 -92v21M536 -92v21M572 -92v21M600 -92v21M631 -92v21M663 -92v21M697 -92v21M732 -92v21M-40 -72h770M-14 -71v19M22 -71v19M50 -71v19M76 -71v19M107 -71v19M123 -71v19M152 -71v19M172 -71v19M205 -71v19M224 -71v19M253 -71v19M272 -71v19M299 -71v19M327 -71v19M351 -71v19M380 -71v19M410 -71v19M435 -71v19M468 -71v19M488 -71v19M510 -71v19M529 -71v19M554 -71v19M570 -71v19M603 -71v19M632 -71v19M659 -71v19M686 -71v19M704 -71v19M729 -71v19M-40 -53h770M-7 -52v17M25 -52v17M56 -52v17M79 -52v17M114 -52v17M139 -52v17M155 -52v17M189 -52v17M217 -52v17M234 -52v17M254 -52v17M278 -52v17M300 -52v17M332 -52v17M359 -52v17M388 -52v17M413 -52v17M444 -52v17M466 -52v17M483 -52v17M510 -52v17M535 -52v17M567 -52v17M585 -52v17M617 -52v17M644 -52v17M678 -52v17M706 -52v17M737 -52v17M-40 -36h770M-20 -35v11M11 -35v11M42 -35v11M65 -35v11M96 -35v11M114 -35v11M138 -35v11M174 -35v11M200 -35v11M224 -35v11M247 -35v11M265 -35v11M286 -35v11M303 -35v11M330 -35v11M349 -35v11M368 -35v11M398 -35v11M431 -35v11M454 -35v11M477 -35v11M506 -35v11M541 -35v11M570 -35v11M601 -35v11M632 -35v11M661 -35v11M677 -35v11M702 -35v11M729 -35v11M-40 -25h770M-25 -24v20M0 -24v20M26 -24v20M49 -24v20M74 -24v20M96 -24v20M123 -24v20M155 -24v20M179 -24v20M199 -24v20M224 -24v20M245 -24v20M279 -24v20M299 -24v20M317 -24v20M334 -24v20M361 -24v20M394 -24v20M415 -24v20M432 -24v20M450 -24v20M477 -24v20M501 -24v20M526 -24v20M549 -24v20M574 -24v20M595 -24v20M627 -24v20M659 -24v20M687 -24v20M714 -24v20M747 -24v20M-40 -5h770M-23 -4v14M4 -4v14M22 -4v14M58 -4v14M76 -4v14M112 -4v14M135 -4v14M158 -4v14M180 -4v14M204 -4v14M225 -4v14M259 -4v14M283 -4v14M301 -4v14M320 -4v14M356 -4v14M384 -4v14M404 -4v14M440 -4v14M461 -4v14M483 -4v14M505 -4v14M526 -4v14M547 -4v14M564 -4v14M594 -4v14M615 -4v14M632 -4v14M648 -4v14M669 -4v14M688 -4v14M707 -4v14M741 -4v14M-40 9h770M-7 10v18M19 10v18M47 10v18M80 10v18M99 10v18M131 10v18M152 10v18M182 10v18M217 10v18M239 10v18M263 10v18M279 10v18M297 10v18M330 10v18M355 10v18M390 10v18M411 10v18M438 10v18M469 10v18M500 10v18M518 10v18M535 10v18M564 10v18M591 10v18M611 10v18M645 10v18M662 10v18M680 10v18M702 10v18M731 10v18M-40 27h770M-15 28v13M6 28v13M35 28v13M58 28v13M87 28v13M105 28v13M129 28v13M163 28v13M183 28v13M215 28v13M233 28v13M257 28v13M276 28v13M299 28v13M319 28v13M337 28v13M372 28v13M403 28v13M421 28v13M441 28v13M474 28v13M508 28v13M538 28v13M558 28v13M588 28v13M606 28v13M637 28v13M667 28v13M699 28v13M717 28v13M738 28v13M-40 40h770M-15 41v17M12 41v17M47 41v17M70 41v17M95 41v17M130 41v17M155 41v17M189 41v17M210 41v17M237 41v17M270 41v17M298 41v17M330 41v17M365 41v17M381 41v17M402 41v17M426 41v17M454 41v17M478 41v17M507 41v17M524 41v17M552 41v17M571 41v17M592 41v17M615 41v17M642 41v17M665 41v17M684 41v17M716 41v17M735 41v17M-40 57h770M-12 58v22M19 58v22M37 58v22M56 58v22M91 58v22M124 58v22M154 58v22M189 58v22M205 58v22M238 58v22M266 58v22M283 58v22M309 58v22M327 58v22M350 58v22M370 58v22M389 58v22M413 58v22M440 58v22M463 58v22M493 58v22M519 58v22M544 58v22M575 58v22M599 58v22M630 58v22M660 58v22M682 58v22M715 58v22M733 58v22M-40 79h770M-19 80v11M4 80v11M21 80v11M55 80v11M86 80v11M119 80v11M151 80v11M169 80v11M187 80v11M222 80v11M250 80v11M271 80v11M301 80v11M326 80v11M356 80v11M385 80v11M415 80v11M445 80v11M464 80v11M485 80v11M504 80v11M521 80v11M539 80v11M561 80v11M593 80v11M617 80v11M652 80v11M682 80v11M710 80v11M729 80v11M-40 90h770M-11 91v20M19 91v20M41 91v20M76 91v20M95 91v20M126 91v20M158 91v20M193 91v20M224 91v20M255 91v20M276 91v20M306 91v20M336 91v20M363 91v20M398 91v20M419 91v20M454 91v20M484 91v20M513 91v20M547 91v20M563 91v20M579 91v20M610 91v20M641 91v20M667 91v20M701 91v20M723 91v20M742 91v20M-40 110h770M-23 111v12M3 111v12M35 111v12M56 111v12M87 111v12M111 111v12M127 111v12M153 111v12M178 111v12M194 111v12M224 111v12M240 111v12M262 111v12M284 111v12M317 111v12M337 111v12M367 111v12M399 111v12M415 111v12M433 111v12M460 111v12M492 111v12M523 111v12M541 111v12M576 111v12M603 111v12M635 111v12M664 111v12M699 111v12M718 111v12M739 111v12M-40 122h770M-19 123v17M12 123v17M38 123v17M55 123v17M75 123v17M92 123v17M123 123v17M151 123v17M167 123v17M200 123v17M227 123v17M256 123v17M289 123v17M322 123v17M354 123v17M379 123v17M413 123v17M444 123v17M467 123v17M499 123v17M523 123v17M543 123v17M575 123v17M607 123v17M624 123v17M645 123v17M667 123v17M685 123v17M706 123v17M724 123v17M758 123v17M-40 139h770M-23 140v15M5 140v15M39 140v15M65 140v15M92 140v15M113 140v15M143 140v15M167 140v15M192 140v15M223 140v15M252 140v15M285 140v15M305 140v15M329 140v15M364 140v15M389 140v15M421 140v15M446 140v15M471 140v15M492 140v15M524 140v15M545 140v15M580 140v15M609 140v15M642 140v15M659 140v15M694 140v15M722 140v15M739 140v15M-40 154h770M-12 155v14M24 155v14M58 155v14M78 155v14M100 155v14M125 155v14M157 155v14M178 155v14M194 155v14M220 155v14M236 155v14M267 155v14M302 155v14M325 155v14M356 155v14M380 155v14M415 155v14M433 155v14M458 155v14M483 155v14M504 155v14M523 155v14M548 155v14M580 155v14M611 155v14M643 155v14M673 155v14M690 155v14M708 155v14M725 155v14M761 155v14M-40 168h770M-6 169v14M14 169v14M34 169v14M61 169v14M80 169v14M112 169v14M142 169v14M158 169v14M188 169v14M213 169v14M230 169v14M264 169v14M280 169v14M301 169v14M317 169v14M339 169v14M358 169v14M385 169v14M404 169v14M420 169v14M445 169v14M472 169v14M492 169v14M520 169v14M553 169v14M580 169v14M610 169v14M644 169v14M674 169v14M692 169v14M712 169v14M730 169v14M-40 182h770M-18 183v12M-1 183v12M17 183v12M43 183v12M76 183v12M97 183v12M132 183v12M151 183v12M187 183v12M205 183v12M223 183v12M244 183v12M279 183v12M295 183v12M319 183v12M351 183v12M367 183v12M394 183v12M410 183v12M446 183v12M466 183v12M496 183v12M530 183v12M560 183v12M591 183v12M614 183v12M633 183v12M652 183v12M668 183v12M691 183v12M727 183v12M746 183v12M-40 194h770M-24 195v20M-7 195v20M16 195v20M44 195v20M73 195v20M103 195v20M133 195v20M165 195v20M199 195v20M233 195v20M264 195v20M282 195v20M315 195v20M332 195v20M366 195v20M390 195v20M423 195v20M449 195v20M479 195v20M510 195v20M541 195v20M573 195v20M603 195v20M639 195v20M675 195v20M698 195v20M726 195v20M744 195v20M-40 214h770M-20 215v16M14 215v16M40 215v16M64 215v16M96 215v16M118 215v16M139 215v16M173 215v16M200 215v16M222 215v16M241 215v16M273 215v16M302 215v16M331 215v16M356 215v16M384 215v16M401 215v16M419 215v16M453 215v16M477 215v16M513 215v16M548 215v16M570 215v16M602 215v16M634 215v16M650 215v16M679 215v16M710 215v16M738 215v16M-40 230h770M-10 231v15M7 231v15M31 231v15M62 231v15M80 231v15M100 231v15M116 231v15M132 231v15M156 231v15M179 231v15M213 231v15M246 231v15M281 231v15M313 231v15M347 231v15M372 231v15M408 231v15M443 231v15M467 231v15M497 231v15M532 231v15M561 231v15M587 231v15M614 231v15M635 231v15M671 231v15M707 231v15M735 231v15M-40 245h770M-14 246v16M21 246v16M46 246v16M68 246v16M103 246v16M136 246v16M171 246v16M195 246v16M221 246v16M256 246v16M274 246v16M300 246v16M323 246v16M344 246v16M374 246v16M390 246v16M422 246v16M454 246v16M473 246v16M493 246v16M525 246v16M547 246v16M563 246v16M588 246v16M619 246v16M639 246v16M661 246v16M691 246v16M721 246v16M746 246v16M-40 261h770M-20 262v15M7 262v15M23 262v15M57 262v15M90 262v15M109 262v15M127 262v15M152 262v15M169 262v15M190 262v15M220 262v15M236 262v15M261 262v15M289 262v15M311 262v15M343 262v15M367 262v15M384 262v15M417 262v15M436 262v15M462 262v15M495 262v15M518 262v15M538 262v15M565 262v15M589 262v15M605 262v15M626 262v15M642 262v15M661 262v15M697 262v15M733 262v15M-40 276h770M-22 277v18M1 277v18M28 277v18M44 277v18M63 277v18M91 277v18M113 277v18M130 277v18M153 277v18M182 277v18M210 277v18M228 277v18M255 277v18M286 277v18M319 277v18M340 277v18M363 277v18M382 277v18M402 277v18M426 277v18M447 277v18M483 277v18M512 277v18M543 277v18M575 277v18M594 277v18M619 277v18M638 277v18M659 277v18M689 277v18M717 277v18M744 277v18M-40 294h770M-19 295v14M8 295v14M26 295v14M55 295v14M75 295v14M100 295v14M123 295v14M156 295v14M173 295v14M193 295v14M227 295v14M261 295v14M291 295v14M316 295v14M342 295v14M370 295v14M402 295v14M435 295v14M452 295v14M480 295v14M516 295v14M546 295v14M579 295v14M595 295v14M626 295v14M657 295v14M676 295v14M698 295v14M719 295v14M735 295v14M-40 308h770M-5 309v17M31 309v17M65 309v17M91 309v17M115 309v17M132 309v17M156 309v17M173 309v17M191 309v17M207 309v17M240 309v17M257 309v17M293 309v17M312 309v17M339 309v17M355 309v17M376 309v17M394 309v17M412 309v17M433 309v17M462 309v17M496 309v17M531 309v17M563 309v17M597 309v17M618 309v17M654 309v17M679 309v17M698 309v17M718 309v17M746 309v17M-40 325h770M-14 326v12M14 326v12M50 326v12M81 326v12M117 326v12M150 326v12M167 326v12M189 326v12M213 326v12M231 326v12M250 326v12M281 326v12M310 326v12M333 326v12M367 326v12M383 326v12M405 326v12M435 326v12M469 326v12M505 326v12M530 326v12M555 326v12M579 326v12M614 326v12M630 326v12M648 326v12M681 326v12M717 326v12M746 326v12M-40 337h770M-14 338v15M9 338v15M35 338v15M65 338v15M92 338v15M117 338v15M145 338v15M161 338v15M194 338v15M222 338v15M254 338v15M277 338v15M304 338v15M325 338v15M345 338v15M367 338v15M389 338v15M422 338v15M446 338v15M469 338v15M493 338v15M524 338v15M552 338v15M584 338v15M619 338v15M649 338v15M675 338v15M703 338v15M733 338v15M-40 352h770M-17 353v17M5 353v17M27 353v17M49 353v17M79 353v17M105 353v17M128 353v17M156 353v17M182 353v17M198 353v17M230 353v17M247 353v17M269 353v17M301 353v17M326 353v17M351 353v17M375 353v17M397 353v17M418 353v17M438 353v17M461 353v17M483 353v17M505 353v17M531 353v17M551 353v17M585 353v17M603 353v17M638 353v17M665 353v17M695 353v17M715 353v17M741 353v17M-40 369h770M-12 370v13M24 370v13M60 370v13M80 370v13M108 370v13M128 370v13M150 370v13M166 370v13M197 370v13M232 370v13M261 370v13M286 370v13M308 370v13M324 370v13M342 370v13M378 370v13M408 370v13M443 370v13M472 370v13M492 370v13M521 370v13M554 370v13M583 370v13M616 370v13M652 370v13M674 370v13M706 370v13M735 370v13M-40 382h770M-21 383v19M7 383v19M43 383v19M63 383v19M89 383v19M122 383v19M149 383v19M169 383v19M195 383v19M231 383v19M260 383v19M294 383v19M312 383v19M347 383v19M363 383v19M390 383v19M420 383v19M448 383v19M471 383v19M496 383v19M532 383v19M567 383v19M585 383v19M617 383v19M640 383v19M659 383v19M692 383v19M712 383v19M735 383v19M-40 401h770M-10 402v16M9 402v16M31 402v16M60 402v16M87 402v16M118 402v16M141 402v16M160 402v16M177 402v16M212 402v16M232 402v16M264 402v16M281 402v16M311 402v16M335 402v16M368 402v16M403 402v16M426 402v16M442 402v16M459 402v16M482 402v16M508 402v16M542 402v16M561 402v16M589 402v16M614 402v16M636 402v16M668 402v16M691 402v16M725 402v16M760 402v16M-40 417h770M-22 418v14M6 418v14M32 418v14M55 418v14M82 418v14M118 418v14M145 418v14M163 418v14M192 418v14M225 418v14M249 418v14M273 418v14M296 418v14M330 418v14M362 418v14M379 418v14M403 418v14M424 418v14M447 418v14M470 418v14M506 418v14M523 418v14M553 418v14M572 418v14M588 418v14M617 418v14M637 418v14M672 418v14M694 418v14M710 418v14M732 418v14M-40 431h770M-9 432v18M18 432v18M42 432v18M74 432v18M90 432v18M114 432v18M136 432v18M168 432v18M202 432v18M236 432v18M264 432v18M298 432v18M315 432v18M333 432v18M353 432v18M382 432v18M405 432v18M431 432v18M459 432v18M481 432v18M502 432v18M525 432v18M561 432v18M597 432v18M631 432v18M656 432v18M682 432v18M700 432v18M719 432v18M747 432v18M-40 449h770M-25 450v11M-6 450v11M29 450v11M50 450v11M79 450v11M105 450v11M128 450v11M158 450v11M179 450v11M200 450v11M228 450v11M248 450v11M279 450v11M306 450v11M329 450v11M357 450v11M383 450v11M414 450v11M441 450v11M460 450v11M490 450v11M517 450v11M542 450v11M567 450v11M596 450v11M622 450v11M652 450v11M687 450v11M707 450v11M723 450v11M758 450v11M-40 460h770M-16 461v16M14 461v16M31 461v16M59 461v16M84 461v16M104 461v16M128 461v16M146 461v16M172 461v16M207 461v16M240 461v16M269 461v16M301 461v16M336 461v16M362 461v16M391 461v16M423 461v16M447 461v16M467 461v16M502 461v16M538 461v16M566 461v16M595 461v16M630 461v16M649 461v16M685 461v16M704 461v16M735 461v16M-40 476h770M-5 477v12M21 477v12M50 477v12M75 477v12M91 477v12M125 477v12M153 477v12M184 477v12M219 477v12M247 477v12M273 477v12M306 477v12M325 477v12M359 477v12M391 477v12M407 477v12M433 477v12M458 477v12M490 477v12M519 477v12M536 477v12M566 477v12M584 477v12M607 477v12M632 477v12M660 477v12M693 477v12M715 477v12M739 477v12M-40 488h770M-21 489v12M-5 489v12M12 489v12M29 489v12M58 489v12M81 489v12M113 489v12M135 489v12M154 489v12M186 489v12M214 489v12M246 489v12M262 489v12M290 489v12M322 489v12M354 489v12M382 489v12M399 489v12M435 489v12M451 489v12M470 489v12M497 489v12M520 489v12M546 489v12M562 489v12M591 489v12M618 489v12M634 489v12M656 489v12M678 489v12M700 489v12M729 489v12M-40 500h770M-23 501v22M-1 501v22M28 501v22M59 501v22M85 501v22M103 501v22M127 501v22M157 501v22M183 501v22M206 501v22M234 501v22M250 501v22M274 501v22M305 501v22M339 501v22M363 501v22M384 501v22M404 501v22M424 501v22M441 501v22M458 501v22M492 501v22M512 501v22M535 501v22M571 501v22M605 501v22M635 501v22M664 501v22M694 501v22M712 501v22M740 501v22M-40 522h770M-19 523v17M14 523v17M35 523v17M55 523v17M75 523v17M105 523v17M132 523v17M157 523v17M179 523v17M212 523v17M231 523v17M261 523v17M295 523v17M311 523v17M343 523v17M363 523v17M398 523v17M425 523v17M457 523v17M483 523v17M512 523v17M528 523v17M559 523v17M595 523v17M620 523v17M649 523v17M670 523v17M691 523v17M709 523v17M743 523v17M-40 539h770" stroke="#f9f9f9" stroke-width="2.0" fill="none"/></g></g><g clip-path="url(#u1)"><g transform="rotate(83 692 145)"><path d="M235 -309h8v6h-8zM290 -312h4v4h-4zM300 -309h25v6h-25zM317 -309h5v5h-5zM334 -308h9v2h-9zM330 -311h11v2h-11zM350 -306h9v2h-9zM371 -311h23v2h-23zM416 -309h3v3h-3zM428 -310h15v6h-15zM457 -309h7v2h-7zM449 -312h6v6h-6zM501 -309h9v4h-9zM492 -310h7v2h-7zM522 -310h7v6h-7zM544 -312h21v6h-21zM605 -312h15v5h-15zM607 -312h5v5h-5zM641 -309h6v4h-6zM637 -307h22v4h-22zM672 -309h5v5h-5zM667 -307h17v4h-17zM741 -310h6v4h-6zM784 -310h3v5h-3zM833 -312h9v2h-9zM855 -312h15v5h-15zM921 -309h4v3h-4zM939 -312h16v3h-16zM983 -311h4v4h-4zM999 -309h4v6h-4zM1020 -311h20v5h-20zM1023 -311h11v6h-11zM1060 -306h3v2h-3zM1050 -312h19v5h-19zM1116 -307h6v2h-6zM1135 -309h5v5h-5zM249 -299h5v2h-5zM288 -296h19v4h-19zM323 -298h11v5h-11zM408 -293h7v2h-7zM408 -298h4v3h-4zM429 -298h12v5h-12zM457 -297h4v3h-4zM486 -299h18v3h-18zM488 -297h13v2h-13zM521 -294h13v4h-13zM546 -296h21v4h-21zM567 -295h5v6h-5zM623 -296h22v6h-22zM661 -299h27v6h-27zM658 -299h21v3h-21zM696 -296h18v2h-18zM736 -299h6v4h-6zM790 -291h32v2h-32zM827 -298h11v4h-11zM886 -294h9v4h-9zM883 -299h16v5h-16zM908 -295h6v4h-6zM947 -291h9v2h-9zM981 -296h14v4h-14zM1019 -297h13v3h-13zM1046 -298h9v6h-9zM1062 -296h10v4h-10zM1061 -293h8v2h-8zM1088 -299h15v6h-15zM1090 -294h10v4h-10zM1118 -299h8v2h-8zM1138 -299h29v4h-29zM241 -284h4v6h-4zM256 -284h25v3h-25zM297 -281h20v5h-20zM337 -284h18v5h-18zM339 -281h9v2h-9zM362 -280h14v4h-14zM457 -278h16v2h-16zM480 -280h14v3h-14zM481 -279h6v4h-6zM526 -285h10v4h-10zM525 -284h12v6h-12zM549 -279h9v4h-9zM553 -285h5v4h-5zM591 -285h4v3h-4zM641 -282h5v5h-5zM628 -285h19v2h-19zM657 -283h11v3h-11zM655 -277h13v2h-13zM671 -280h18v4h-18zM678 -280h12v3h-12zM744 -283h19v4h-19zM733 -279h28v2h-28zM771 -281h33v6h-33zM772 -285h33v2h-33zM851 -278h8v3h-8zM861 -283h15v5h-15zM891 -284h9v2h-9zM918 -281h31v5h-31zM934 -282h10v3h-10zM957 -285h5v3h-5zM972 -281h30v6h-30zM993 -282h3v2h-3zM1008 -283h22v3h-22zM1040 -283h10v5h-10zM1060 -284h3v5h-3zM1091 -280h8v5h-8zM1094 -281h15v6h-15zM1117 -285h4v6h-4zM1126 -278h4v3h-4zM241 -271h14v5h-14zM236 -265h17v4h-17zM273 -268h6v6h-6zM275 -268h6v5h-6zM294 -266h11v4h-11zM314 -269h14v6h-14zM338 -270h21v4h-21zM344 -271h8v6h-8zM371 -271h22v4h-22zM415 -271h9v6h-9zM407 -269h15v4h-15zM436 -270h14v5h-14zM453 -269h29v6h-29zM506 -268h5v6h-5zM507 -271h7v6h-7zM522 -270h12v4h-12zM518 -268h5v5h-5zM544 -269h7v2h-7zM544 -267h22v3h-22zM572 -268h14v6h-14zM574 -270h12v5h-12zM599 -271h14v5h-14zM619 -271h3v5h-3zM652 -271h14v4h-14zM636 -268h21v4h-21zM679 -270h10v3h-10zM700 -266h14v2h-14zM705 -271h8v6h-8zM731 -267h8v6h-8zM724 -266h6v5h-6zM764 -270h5v5h-5zM760 -271h24v5h-24zM790 -266h31v3h-31zM787 -269h27v6h-27zM826 -271h14v3h-14zM827 -267h19v5h-19zM887 -270h12v4h-12zM879 -265h14v4h-14zM913 -270h15v3h-15zM947 -264h6v2h-6zM961 -263h16v2h-16zM982 -266h24v2h-24zM1023 -265h26v2h-26zM1018 -268h28v6h-28zM1052 -265h19v4h-19zM1092 -271h10v2h-10zM1114 -269h9v5h-9zM1113 -267h7v2h-7zM1136 -270h22v5h-22zM237 -253h10v7h-10zM237 -250h12v2h-12zM253 -252h6v6h-6zM273 -251h4v3h-4zM277 -250h12v3h-12zM296 -252h7v3h-7zM298 -252h8v3h-8zM332 -254h10v6h-10zM327 -248h17v2h-17zM354 -256h8v6h-8zM350 -257h8v4h-8zM380 -250h12v4h-12zM373 -248h16v3h-16zM422 -253h4v7h-4zM442 -253h7v2h-7zM443 -257h17v6h-17zM509 -257h31v2h-31zM552 -256h8v7h-8zM549 -251h7v4h-7zM567 -254h27v6h-27zM603 -257h4v5h-4zM603 -250h6v2h-6zM620 -254h19v4h-19zM697 -254h10v4h-10zM692 -253h21v5h-21zM734 -255h17v6h-17zM722 -255h14v4h-14zM758 -252h15v3h-15zM785 -250h24v3h-24zM818 -252h17v7h-17zM825 -256h4v7h-4zM890 -253h5v6h-5zM890 -255h6v6h-6zM911 -255h6v5h-6zM963 -251h3v4h-3zM1005 -249h16v2h-16zM1028 -248h10v3h-10zM1043 -254h28v5h-28zM1045 -249h13v3h-13zM1075 -248h19v3h-19zM1110 -254h20v6h-20zM235 -237h5v3h-5zM236 -241h4v7h-4zM264 -239h12v2h-12zM299 -239h14v5h-14zM331 -237h20v6h-20zM369 -234h10v2h-10zM384 -236h3v5h-3zM388 -238h7v7h-7zM409 -236h15v2h-15zM410 -235h13v4h-13zM435 -238h13v7h-13zM469 -241h6v4h-6zM497 -235h6v6h-6zM481 -233h18v2h-18zM507 -233h30v4h-30zM549 -237h13v4h-13zM547 -241h7v7h-7zM585 -240h21v5h-21zM611 -236h11v7h-11zM642 -236h20v7h-20zM644 -232h12v3h-12zM680 -236h11v7h-11zM668 -238h21v5h-21zM702 -232h23v2h-23zM697 -239h21v3h-21zM743 -240h14v7h-14zM735 -238h21v6h-21zM791 -240h3v6h-3zM792 -241h11v2h-11zM822 -241h12v5h-12zM854 -235h3v4h-3zM845 -240h11v7h-11zM865 -240h20v4h-20zM862 -240h20v5h-20zM909 -241h3v7h-3zM893 -237h16v4h-16zM916 -240h26v4h-26zM958 -238h4v2h-4zM1006 -238h8v7h-8zM992 -240h16v4h-16zM1026 -239h24v4h-24zM1025 -238h28v7h-28zM1073 -237h4v5h-4zM1097 -240h4v7h-4zM1100 -232h3v2h-3zM1129 -241h8v4h-8zM1148 -239h21v6h-21zM1141 -234h29v3h-29zM254 -223h22v4h-22zM284 -216h23v6h-23zM331 -225h6v6h-6zM317 -215h18v6h-18zM340 -211h8v2h-8zM349 -224h11v11h-11zM365 -224h10v9h-10zM372 -219h20v5h-20zM395 -219h20v5h-20zM409 -225h5v10h-5zM437 -220h4v6h-4zM431 -219h24v5h-24zM503 -219h17v4h-17zM506 -221h9v11h-9zM526 -218h20v11h-20zM529 -221h7v4h-7zM552 -217h10v9h-10zM613 -215h7v8h-7zM645 -221h5v11h-5zM658 -222h24v8h-24zM734 -219h10v8h-10zM730 -222h14v6h-14zM758 -218h22v3h-22zM764 -224h12v5h-12zM784 -217h4v10h-4zM813 -215h4v9h-4zM808 -224h12v7h-12zM827 -220h14v2h-14zM870 -209h11v4h-11zM870 -224h10v3h-10zM895 -218h3v3h-3zM937 -217h14v8h-14zM931 -222h24v10h-24zM962 -217h7v4h-7zM983 -216h19v7h-19zM1015 -215h11v5h-11zM1035 -223h6v7h-6zM1033 -225h10v11h-10zM1052 -213h26v8h-26zM1056 -216h16v10h-16zM1088 -224h27v10h-27zM1123 -213h12v8h-12zM1125 -214h4v7h-4zM1143 -219h12v4h-12zM1155 -222h5v9h-5zM257 -195h21v2h-21zM301 -198h21v5h-21zM332 -198h19v2h-19zM328 -201h29v6h-29zM365 -201h10v6h-10zM362 -194h33v2h-33zM411 -197h5v3h-5zM422 -199h14v6h-14zM465 -195h17v2h-17zM490 -199h19v2h-19zM486 -198h20v2h-20zM520 -197h17v3h-17zM550 -201h13v4h-13zM596 -196h22v2h-22zM597 -199h13v4h-13zM622 -195h5v2h-5zM653 -195h12v2h-12zM657 -200h12v3h-12zM674 -199h16v5h-16zM672 -199h15v6h-15zM697 -199h7v6h-7zM780 -200h20v4h-20zM808 -195h13v3h-13zM812 -195h12v3h-12zM838 -200h15v4h-15zM854 -196h5v3h-5zM880 -199h18v2h-18zM866 -196h29v4h-29zM916 -198h15v4h-15zM942 -195h6v3h-6zM946 -194h11v2h-11zM981 -200h13v6h-13zM1002 -198h24v3h-24zM1002 -201h26v5h-26zM1088 -199h12v3h-12zM1088 -197h11v2h-11zM1105 -200h12v5h-12zM1126 -200h16v5h-16zM1124 -200h26v4h-26zM269 -183h16v9h-16zM302 -176h14v3h-14zM302 -188h27v5h-27zM343 -184h25v3h-25zM352 -184h10v8h-10zM375 -179h20v7h-20zM374 -186h4v6h-4zM408 -182h16v7h-16zM405 -181h19v3h-19zM446 -182h18v9h-18zM453 -183h10v7h-10zM469 -184h16v2h-16zM502 -175h28v2h-28zM505 -176h27v3h-27zM555 -180h18v8h-18zM544 -177h28v3h-28zM588 -187h14v3h-14zM643 -182h5v3h-5zM678 -183h22v7h-22zM712 -186h9v9h-9zM716 -185h10v4h-10zM751 -182h12v7h-12zM748 -187h19v5h-19zM779 -186h13v4h-13zM779 -180h12v5h-12zM817 -185h16v7h-16zM811 -180h14v7h-14zM845 -177h14v5h-14zM851 -185h8v8h-8zM874 -174h3v2h-3zM933 -182h22v8h-22zM985 -188h18v8h-18zM985 -179h23v4h-23zM1021 -181h7v3h-7zM1042 -178h24v4h-24zM1039 -188h24v4h-24zM1073 -188h17v8h-17zM1140 -179h13v2h-13zM240 -165h12v7h-12zM290 -159h11v5h-11zM288 -161h19v7h-19zM322 -168h19v5h-19zM314 -166h29v6h-29zM351 -163h14v6h-14zM352 -164h7v7h-7zM375 -168h11v8h-11zM383 -166h3v7h-3zM391 -166h16v8h-16zM425 -168h12v8h-12zM445 -165h26v7h-26zM478 -164h22v7h-22zM518 -161h7v6h-7zM504 -163h16v8h-16zM534 -164h31v4h-31zM537 -168h4v7h-4zM583 -160h3v2h-3zM592 -162h11v7h-11zM617 -166h8v7h-8zM644 -162h13v3h-13zM638 -164h12v5h-12zM666 -158h15v2h-15zM691 -167h20v4h-20zM750 -167h5v5h-5zM722 -168h22v4h-22zM780 -166h9v8h-9zM808 -166h4v6h-4zM798 -162h13v5h-13zM819 -161h19v2h-19zM852 -161h11v2h-11zM868 -161h3v2h-3zM868 -161h4v4h-4zM896 -166h12v5h-12zM928 -167h4v8h-4zM936 -158h16v4h-16zM959 -163h8v3h-8zM996 -167h4v7h-4zM976 -165h8v4h-8zM1015 -165h10v6h-10zM1005 -163h8v5h-8zM1060 -161h9v3h-9zM1084 -167h6v3h-6zM1106 -161h13v6h-13zM242 -144h3v8h-3zM253 -142h9v6h-9zM254 -145h12v5h-12zM277 -143h12v6h-12zM301 -144h22v7h-22zM328 -146h14v6h-14zM335 -150h13v6h-13zM369 -146h10v3h-10zM359 -138h25v2h-25zM389 -144h10v6h-10zM424 -149h13v7h-13zM416 -145h33v2h-33zM458 -148h20v4h-20zM495 -145h16v2h-16zM502 -145h10v6h-10zM522 -142h17v3h-17zM555 -149h19v4h-19zM551 -148h9v8h-9zM590 -144h23v3h-23zM583 -140h27v2h-27zM635 -143h4v6h-4zM624 -147h5v7h-5zM656 -141h11v4h-11zM694 -148h6v7h-6zM677 -147h9v5h-9zM711 -149h4v6h-4zM787 -145h9v4h-9zM817 -145h16v4h-16zM826 -149h14v7h-14zM909 -145h4v8h-4zM922 -148h7v3h-7zM963 -150h6v5h-6zM965 -146h17v8h-17zM990 -150h9v8h-9zM1060 -145h3v3h-3zM1074 -144h12v8h-12zM1096 -143h24v4h-24zM1096 -143h18v7h-18zM1128 -141h18v4h-18zM243 -128h14v2h-14zM245 -131h9v3h-9zM274 -128h10v3h-10zM265 -131h21v4h-21zM294 -125h29v3h-29zM333 -126h28v2h-28zM369 -130h27v4h-27zM387 -132h5v2h-5zM402 -129h14v6h-14zM421 -131h3v4h-3zM423 -128h12v5h-12zM441 -130h14v6h-14zM439 -131h17v5h-17zM478 -129h6v5h-6zM465 -129h6v2h-6zM501 -130h14v4h-14zM529 -131h17v6h-17zM552 -126h15v3h-15zM553 -131h13v5h-13zM577 -127h21v3h-21zM611 -126h5v3h-5zM635 -128h10v3h-10zM633 -128h16v6h-16zM657 -130h27v4h-27zM656 -132h27v4h-27zM745 -131h12v6h-12zM775 -130h15v6h-15zM769 -131h10v3h-10zM800 -129h24v6h-24zM841 -130h6v2h-6zM878 -125h4v2h-4zM890 -131h25v6h-25zM933 -128h9v6h-9zM950 -128h23v5h-23zM955 -132h7v3h-7zM984 -131h25v5h-25zM988 -127h20v5h-20zM1017 -129h8v6h-8zM1019 -132h3v6h-3zM1036 -129h3v4h-3zM1032 -129h16v6h-16zM1056 -130h10v6h-10zM1066 -126h6v3h-6zM1095 -126h3v2h-3zM1102 -127h19v5h-19zM1136 -128h6v5h-6zM1145 -130h3v4h-3zM243 -109h15v2h-15zM273 -110h13v3h-13zM318 -112h8v3h-8zM337 -113h12v5h-12zM336 -112h10v6h-10zM360 -113h13v4h-13zM357 -113h9v5h-9zM385 -117h27v6h-27zM422 -115h6v6h-6zM445 -118h17v8h-17zM468 -116h6v6h-6zM471 -117h12v4h-12zM490 -112h6v4h-6zM511 -113h7v7h-7zM511 -111h10v4h-10zM549 -106h3v2h-3zM556 -113h3v3h-3zM574 -118h20v3h-20zM583 -117h10v6h-10zM598 -116h9v6h-9zM601 -118h18v6h-18zM627 -113h12v5h-12zM629 -111h14v3h-14zM651 -109h3v4h-3zM659 -111h3v6h-3zM675 -118h17v3h-17zM679 -113h3v2h-3zM697 -112h12v3h-12zM720 -115h7v3h-7zM746 -113h33v5h-33zM788 -113h14v2h-14zM813 -111h6v3h-6zM813 -113h17v5h-17zM836 -112h4v4h-4zM836 -116h15v6h-15zM857 -117h18v8h-18zM884 -112h28v3h-28zM888 -114h18v8h-18zM928 -118h14v6h-14zM948 -113h16v7h-16zM979 -108h10v4h-10zM996 -117h7v4h-7zM994 -113h4v2h-4zM1015 -114h20v8h-20zM1044 -115h6v4h-6zM1043 -108h10v3h-10zM1063 -114h17v4h-17zM1062 -110h3v5h-3zM1086 -114h14v8h-14zM1087 -114h29v6h-29zM1123 -112h8v6h-8zM1125 -115h18v8h-18zM1154 -113h3v4h-3zM240 -96h4v6h-4zM242 -95h9v5h-9zM263 -95h10v5h-10zM267 -98h9v6h-9zM298 -90h5v2h-5zM286 -99h23v2h-23zM317 -92h23v3h-23zM325 -90h12v2h-12zM354 -96h4v4h-4zM377 -100h14v3h-14zM380 -99h7v7h-7zM396 -95h14v7h-14zM399 -99h21v5h-21zM470 -91h14v3h-14zM463 -100h18v2h-18zM489 -99h4v6h-4zM508 -94h13v5h-13zM560 -99h15v2h-15zM549 -97h24v5h-24zM589 -100h25v7h-25zM627 -94h4v3h-4zM631 -97h10v5h-10zM645 -94h3v6h-3zM645 -93h8v2h-8zM712 -94h11v6h-11zM726 -99h14v7h-14zM767 -96h11v7h-11zM769 -98h13v3h-13zM790 -96h7v7h-7zM790 -97h3v7h-3zM806 -99h23v5h-23zM842 -95h5v7h-5zM887 -93h22v2h-22zM928 -95h4v2h-4zM961 -98h10v6h-10zM983 -100h19v6h-19zM978 -100h11v5h-11zM1015 -93h5v3h-5zM1027 -96h13v6h-13zM1064 -99h14v3h-14zM1079 -99h4v3h-4zM1089 -100h6v3h-6zM1143 -97h11v2h-11zM1150 -98h6v2h-6zM236 -78h26v4h-26zM289 -78h14v2h-14zM269 -84h21v6h-21zM307 -83h16v6h-16zM347 -82h4v5h-4zM347 -84h5v6h-5zM362 -83h11v6h-11zM398 -83h9v3h-9zM400 -77h15v2h-15zM420 -83h15v2h-15zM425 -81h13v5h-13zM442 -77h3v2h-3zM444 -81h25v6h-25zM477 -78h31v3h-31zM476 -80h4v5h-4zM538 -81h31v2h-31zM541 -80h20v5h-20zM617 -84h9v6h-9zM615 -79h9v3h-9zM638 -82h3v5h-3zM689 -81h12v4h-12zM740 -80h27v6h-27zM788 -83h13v2h-13zM839 -80h11v4h-11zM861 -84h16v4h-16zM859 -84h3v4h-3zM887 -83h3v6h-3zM903 -78h17v2h-17zM926 -77h22v2h-22zM928 -81h9v5h-9zM958 -83h3v4h-3zM953 -80h8v5h-8zM986 -79h3v4h-3zM1004 -84h11v2h-11zM1002 -82h13v2h-13zM1041 -80h11v3h-11zM1071 -82h6v6h-6zM1084 -83h13v6h-13zM1081 -77h28v2h-28zM1141 -81h11v6h-11zM1149 -84h5v2h-5zM239 -59h12v6h-12zM257 -68h23v6h-23zM333 -63h13v8h-13zM359 -64h15v3h-15zM359 -61h8v2h-8zM386 -57h24v6h-24zM383 -65h28v7h-28zM415 -69h15v5h-15zM444 -60h5v7h-5zM489 -68h8v9h-8zM477 -57h22v4h-22zM518 -66h9v6h-9zM535 -61h23v11h-23zM566 -58h26v4h-26zM578 -59h13v4h-13zM606 -52h12v3h-12zM598 -67h5v7h-5zM633 -54h16v2h-16zM653 -60h17v2h-17zM680 -63h16v8h-16zM704 -62h18v9h-18zM749 -62h7v9h-7zM749 -59h6v7h-6zM764 -64h5v12h-5zM776 -63h10v7h-10zM825 -66h9v7h-9zM833 -64h7v12h-7zM844 -61h13v5h-13zM879 -66h4v5h-4zM905 -66h11v12h-11zM932 -65h4v6h-4zM928 -69h22v4h-22zM976 -68h4v2h-4zM1012 -67h4v10h-4zM1003 -67h9v6h-9zM1055 -66h7v6h-7zM1078 -69h8v6h-8zM1100 -70h26v2h-26zM1098 -68h27v9h-27zM272 -40h5v5h-5zM300 -42h8v2h-8zM330 -43h29v3h-29zM330 -45h15v6h-15zM388 -37h13v4h-13zM389 -38h4v3h-4zM404 -44h17v2h-17zM438 -44h19v7h-19zM438 -41h4v3h-4zM465 -45h13v6h-13zM488 -43h19v7h-19zM510 -43h21v7h-21zM546 -41h10v6h-10zM548 -40h8v6h-8zM568 -43h10v4h-10zM612 -41h3v3h-3zM628 -42h10v2h-10zM638 -44h4v2h-4zM653 -44h13v4h-13zM652 -39h16v3h-16zM708 -39h3v6h-3zM726 -38h18v4h-18zM748 -41h30v2h-30zM762 -44h6v5h-6zM823 -44h12v7h-12zM857 -41h3v7h-3zM875 -38h31v2h-31zM880 -44h19v6h-19zM949 -41h19v3h-19zM947 -41h8v5h-8zM1023 -44h9v6h-9zM1046 -44h8v7h-8zM1064 -45h21v6h-21zM1071 -39h13v4h-13zM1088 -37h12v2h-12zM1111 -40h18v2h-18zM1114 -45h3v2h-3zM1141 -42h16v3h-16zM1145 -41h10v2h-10zM237 -24h9v2h-9zM263 -24h17v5h-17zM255 -26h29v3h-29zM293 -25h5v3h-5zM292 -25h13v6h-13zM311 -27h12v2h-12zM309 -24h25v5h-25zM349 -28h3v5h-3zM342 -29h13v6h-13zM382 -29h9v6h-9zM379 -27h3v6h-3zM396 -27h3v6h-3zM424 -21h8v2h-8zM435 -29h3v5h-3zM460 -29h3v4h-3zM474 -28h3v2h-3zM512 -25h23v5h-23zM512 -27h26v2h-26zM583 -29h16v5h-16zM569 -29h17v3h-17zM606 -27h19v6h-19zM619 -24h3v4h-3zM638 -25h23v5h-23zM643 -25h14v4h-14zM702 -29h6v4h-6zM704 -27h3v6h-3zM726 -29h21v4h-21zM755 -23h5v2h-5zM777 -28h17v5h-17zM808 -24h15v5h-15zM823 -29h4v5h-4zM833 -24h7v5h-7zM864 -28h22v5h-22zM863 -26h7v2h-7zM921 -26h24v5h-24zM940 -22h5v2h-5zM969 -25h15v5h-15zM973 -27h25v2h-25zM1004 -27h15v4h-15zM1005 -28h14v6h-14zM1036 -29h8v5h-8zM1034 -23h6v4h-6zM1061 -25h11v6h-11zM1138 -26h13v2h-13zM242 -13h17v6h-17zM245 -9h14v3h-14zM268 -15h20v2h-20zM324 -11h13v2h-13zM359 -12h5v5h-5zM387 -11h19v5h-19zM424 -11h11v6h-11zM418 -14h17v4h-17zM446 -12h8v6h-8zM473 -12h20v2h-20zM475 -14h13v2h-13zM501 -11h7v5h-7zM529 -11h14v3h-14zM548 -15h7v6h-7zM597 -13h9v6h-9zM595 -13h8v5h-8zM660 -10h4v2h-4zM655 -9h4v3h-4zM687 -12h6v3h-6zM731 -14h9v3h-9zM731 -15h8v3h-8zM758 -15h8v6h-8zM796 -11h4v2h-4zM807 -11h22v5h-22zM836 -14h8v5h-8zM874 -15h6v6h-6zM879 -13h3v6h-3zM896 -15h5v6h-5zM925 -8h13v3h-13zM926 -15h28v3h-28zM964 -9h21v2h-21zM997 -15h18v3h-18zM994 -15h14v6h-14zM1023 -15h5v3h-5zM1020 -12h31v4h-31zM1066 -11h10v4h-10zM1060 -13h20v4h-20zM1090 -13h18v5h-18zM1115 -15h5v3h-5zM261 10h6v8h-6zM261 4h9v8h-9zM277 2h12v6h-12zM287 2h13v11h-13zM310 11h13v7h-13zM311 0h11v8h-11zM329 0h6v12h-6zM328 0h18v7h-18zM365 11h14v4h-14zM392 11h15v6h-15zM396 1h10v3h-10zM412 6h4v9h-4zM435 9h10v9h-10zM436 2h19v2h-19zM472 6h5v3h-5zM524 12h7v6h-7zM525 3h8v9h-8zM573 18h3v2h-3zM572 4h4v10h-4zM585 7h8v9h-8zM606 6h14v12h-14zM609 7h12v9h-12zM628 4h9v9h-9zM648 14h8v6h-8zM671 9h6v9h-6zM664 13h9v7h-9zM682 4h18v2h-18zM689 7h12v9h-12zM705 12h10v6h-10zM704 10h11v6h-11zM723 11h9v4h-9zM725 1h9v11h-9zM747 2h15v11h-15zM774 13h26v6h-26zM806 5h7v3h-7zM807 4h10v12h-10zM826 7h5v5h-5zM830 12h22v6h-22zM875 14h5v2h-5zM864 3h31v4h-31zM906 10h7v4h-7zM898 8h26v9h-26zM943 7h6v9h-6zM938 4h7v11h-7zM959 13h16v7h-16zM973 -1h14v11h-14zM1003 7h14v5h-14zM1047 1h12v11h-12zM1053 9h7v10h-7zM1134 -1h11v11h-11zM1119 0h26v9h-26zM235 24h23v6h-23zM267 31h33v6h-33zM307 35h21v2h-21zM308 31h5v4h-5zM337 36h16v2h-16zM371 29h10v11h-10zM374 35h3v7h-3zM424 31h23v4h-23zM451 31h7v5h-7zM501 29h6v3h-6zM513 30h20v8h-20zM541 28h13v7h-13zM541 29h8v9h-8zM570 38h11v4h-11zM563 34h10v9h-10zM595 29h5v8h-5zM610 35h3v7h-3zM619 35h19v8h-19zM652 35h19v6h-19zM687 27h26v11h-26zM734 33h3v6h-3zM741 27h13v8h-13zM776 34h8v9h-8zM831 29h6v11h-6zM849 30h12v5h-12zM869 31h15v8h-15zM869 26h15v4h-15zM893 40h28v2h-28zM949 27h9v7h-9zM942 29h15v6h-15zM966 24h14v2h-14zM1002 30h8v7h-8zM1021 29h8v8h-8zM1059 27h21v8h-21zM1053 27h7v9h-7zM1087 37h11v5h-11zM1105 35h16v6h-16zM1133 30h17v10h-17zM244 60h12v6h-12zM242 48h3v4h-3zM261 50h4v5h-4zM267 50h4v8h-4zM282 64h17v3h-17zM312 55h11v7h-11zM312 55h11v9h-11zM331 55h19v11h-19zM338 49h16v9h-16zM363 49h29v8h-29zM408 47h6v3h-6zM418 48h14v8h-14zM417 49h3v6h-3zM454 49h11v7h-11zM476 59h11v6h-11zM530 55h10v3h-10zM534 51h26v4h-26zM569 50h21v7h-21zM597 49h20v11h-20zM602 59h7v6h-7zM626 50h8v5h-8zM626 57h13v6h-13zM654 48h9v4h-9zM648 48h14v9h-14zM674 58h7v6h-7zM696 54h5v2h-5zM687 53h19v7h-19zM712 63h3v3h-3zM729 52h13v8h-13zM758 48h21v2h-21zM788 51h8v8h-8zM787 61h15v4h-15zM812 58h10v7h-10zM812 53h9v5h-9zM829 50h15v7h-15zM829 53h22v7h-22zM867 49h18v9h-18zM896 56h4v5h-4zM892 64h20v3h-20zM953 48h8v3h-8zM981 54h9v5h-9zM1005 52h8v6h-8zM1038 49h11v5h-11zM1053 56h12v9h-12zM1053 49h26v7h-26zM1106 51h17v10h-17zM1108 52h7v5h-7zM235 81h9v5h-9zM241 78h17v4h-17zM264 73h20v4h-20zM290 78h12v8h-12zM329 76h11v2h-11zM346 73h9v7h-9zM404 80h5v2h-5zM425 72h8v4h-8zM421 76h29v9h-29zM464 76h4v9h-4zM487 74h14v3h-14zM487 78h10v6h-10zM522 77h18v9h-18zM519 74h20v3h-20zM579 82h26v4h-26zM613 71h24v9h-24zM627 75h12v6h-12zM673 72h6v7h-6zM677 71h8v2h-8zM713 72h13v2h-13zM729 74h10v8h-10zM782 75h21v9h-21zM790 77h5v8h-5zM816 72h24v5h-24zM853 72h12v7h-12zM853 80h15v6h-15zM877 72h16v8h-16zM887 71h13v8h-13zM992 76h20v6h-20zM1022 76h10v7h-10zM1056 80h26v4h-26zM1052 81h33v3h-33zM1105 77h7v2h-7zM1133 76h16v7h-16zM236 91h8v8h-8zM263 91h8v2h-8zM262 92h19v5h-19zM297 96h4v6h-4zM289 92h13v8h-13zM326 106h17v3h-17zM405 101h7v6h-7zM428 99h12v7h-12zM424 106h19v2h-19zM452 96h5v3h-5zM470 96h31v2h-31zM476 101h23v3h-23zM507 95h7v11h-7zM534 94h16v2h-16zM542 91h17v11h-17zM568 94h15v7h-15zM568 99h14v11h-14zM603 97h4v7h-4zM620 99h11v2h-11zM624 90h3v3h-3zM644 93h17v11h-17zM651 97h5v10h-5zM674 99h20v3h-20zM668 94h17v10h-17zM707 106h6v3h-6zM729 104h12v6h-12zM750 90h15v2h-15zM787 99h5v2h-5zM814 101h10v6h-10zM852 92h8v11h-8zM855 92h5v9h-5zM881 92h10v11h-10zM910 96h5v5h-5zM902 97h8v5h-8zM927 101h27v6h-27zM964 100h14v9h-14zM965 99h8v11h-8zM991 102h6v6h-6zM998 90h3v3h-3zM1006 102h24v5h-24zM1008 93h10v6h-10zM1050 94h6v11h-6zM1039 93h11v10h-11zM1061 94h13v4h-13zM1101 99h20v8h-20zM1094 107h17v2h-17zM245 114h25v2h-25zM310 115h12v4h-12zM363 119h3v4h-3zM368 120h5v2h-5zM386 118h24v5h-24zM384 119h24v2h-24zM420 117h20v6h-20zM424 114h7v6h-7zM451 120h7v3h-7zM451 116h17v5h-17zM476 116h15v6h-15zM515 117h18v2h-18zM545 122h17v2h-17zM578 116h16v4h-16zM589 115h4v2h-4zM607 119h7v5h-7zM604 117h6v3h-6zM627 118h22v4h-22zM658 120h10v4h-10zM677 121h24v3h-24zM713 117h4v5h-4zM710 120h27v4h-27zM774 117h21v4h-21zM808 119h13v4h-13zM809 114h3v4h-3zM827 121h5v2h-5zM828 115h10v4h-10zM850 117h9v5h-9zM848 121h15v3h-15zM873 120h13v2h-13zM903 118h20v2h-20zM939 114h16v5h-16zM980 118h11v2h-11zM975 117h12v6h-12zM1029 119h4v5h-4zM1028 120h5v4h-5zM1061 119h3v3h-3zM1057 116h7v2h-7zM1079 115h8v6h-8zM1102 119h3v2h-3zM1091 119h9v3h-9zM1128 114h6v5h-6zM1111 117h30v4h-30zM1148 118h18v3h-18zM1150 118h12v5h-12zM237 135h12v6h-12zM271 128h13v4h-13zM282 130h4v3h-4zM300 132h11v5h-11zM322 132h10v7h-10zM352 132h5v3h-5zM343 135h13v3h-13zM395 131h5v4h-5zM427 129h27v6h-27zM427 129h22v3h-22zM459 134h20v8h-20zM458 129h14v8h-14zM500 129h20v2h-20zM542 137h11v4h-11zM546 133h20v4h-20zM570 133h28v3h-28zM575 134h21v8h-21zM611 133h30v4h-30zM622 129h9v2h-9zM648 136h24v3h-24zM654 131h13v4h-13zM681 136h12v6h-12zM734 130h8v6h-8zM736 129h5v4h-5zM757 128h18v5h-18zM783 134h25v6h-25zM829 129h6v7h-6zM843 135h16v4h-16zM881 128h20v2h-20zM911 128h19v8h-19zM912 132h24v8h-24zM951 130h24v5h-24zM984 134h26v8h-26zM1018 130h17v3h-17zM1042 134h3v6h-3zM1112 132h5v4h-5zM1110 128h7v8h-7zM1155 133h3v6h-3zM244 149h7v6h-7zM236 147h10v6h-10zM256 155h8v2h-8zM261 148h14v6h-14zM304 152h6v4h-6zM297 148h11v3h-11zM329 147h4v7h-4zM320 148h10v2h-10zM349 150h12v3h-12zM397 151h3v4h-3zM409 146h9v7h-9zM407 151h12v5h-12zM431 148h8v2h-8zM465 149h14v4h-14zM487 154h21v3h-21zM527 155h17v2h-17zM558 151h5v3h-5zM563 155h6v2h-6zM579 150h17v3h-17zM579 150h17v4h-17zM609 148h17v6h-17zM607 146h33v3h-33zM652 153h6v3h-6zM666 147h24v5h-24zM670 147h19v4h-19zM750 150h3v7h-3zM742 148h10v2h-10zM762 153h5v4h-5zM778 147h11v6h-11zM796 149h14v7h-14zM818 146h5v5h-5zM815 148h17v7h-17zM842 153h10v3h-10zM864 149h9v7h-9zM910 147h4v6h-4zM928 152h6v5h-6zM948 148h6v3h-6zM985 150h30v5h-30zM1032 151h5v6h-5zM1048 147h5v6h-5zM1042 148h10v3h-10zM1062 148h16v3h-16zM1073 148h4v3h-4zM1084 150h15v5h-15zM1108 150h6v4h-6zM1123 148h21v6h-21zM1127 148h12v2h-12zM1156 149h17v7h-17zM1160 149h7v6h-7zM239 172h11v8h-11zM243 168h8v7h-8zM254 171h7v8h-7zM290 173h16v5h-16zM288 167h20v10h-20zM321 173h10v5h-10zM325 162h10v10h-10zM347 162h15v8h-15zM356 171h9v4h-9zM384 161h5v3h-5zM383 167h11v2h-11zM411 166h4v11h-4zM466 163h15v9h-15zM494 176h14v2h-14zM500 167h12v6h-12zM544 173h26v4h-26zM583 171h3v3h-3zM611 163h5v6h-5zM595 174h9v2h-9zM625 164h25v9h-25zM623 171h26v4h-26zM656 173h9v6h-9zM716 165h7v10h-7zM724 163h4v5h-4zM731 163h17v9h-17zM756 166h33v6h-33zM815 165h3v9h-3zM825 163h29v6h-29zM834 162h9v3h-9zM871 171h22v8h-22zM905 165h5v10h-5zM899 168h13v9h-13zM919 169h14v8h-14zM919 165h19v5h-19zM968 170h5v9h-5zM1003 163h15v5h-15zM1042 165h9v10h-9zM1039 162h18v8h-18zM1065 172h10v8h-10zM1067 170h7v7h-7zM1086 168h15v8h-15zM1121 163h5v5h-5zM1147 165h7v8h-7zM1146 169h5v4h-5zM235 187h7v2h-7zM252 185h3v5h-3zM284 187h11v3h-11zM308 186h3v3h-3zM298 185h5v6h-5zM357 189h8v4h-8zM366 184h3v5h-3zM415 185h15v4h-15zM439 186h5v4h-5zM436 189h5v2h-5zM467 188h14v4h-14zM537 188h14v4h-14zM540 188h17v5h-17zM612 186h9v5h-9zM616 186h3v3h-3zM630 185h17v6h-17zM663 188h4v3h-4zM654 184h6v2h-6zM672 191h8v2h-8zM683 186h3v4h-3zM689 184h29v6h-29zM692 187h30v5h-30zM726 186h12v5h-12zM754 188h23v2h-23zM790 188h30v5h-30zM813 186h3v5h-3zM829 188h9v4h-9zM842 187h10v6h-10zM857 189h16v2h-16zM873 184h5v4h-5zM895 184h8v2h-8zM925 184h5v3h-5zM949 184h3v3h-3zM958 186h4v5h-4zM970 186h18v4h-18zM997 186h5v6h-5zM994 185h11v4h-11zM1010 186h26v6h-26zM1046 187h3v5h-3zM1081 185h24v2h-24zM1076 186h8v6h-8zM1117 184h7v4h-7zM1113 187h6v3h-6zM1129 184h20v6h-20zM246 197h5v4h-5zM256 203h11v5h-11zM261 201h13v7h-13zM326 197h15v3h-15zM318 198h19v9h-19zM347 201h16v10h-16zM348 205h16v2h-16zM381 202h7v7h-7zM383 204h13v7h-13zM405 200h10v2h-10zM446 199h18v10h-18zM473 205h3v5h-3zM487 204h18v10h-18zM526 206h12v6h-12zM517 204h14v9h-14zM557 204h4v9h-4zM571 204h4v10h-4zM633 202h8v3h-8zM661 201h14v5h-14zM662 200h8v6h-8zM684 201h14v2h-14zM709 206h17v4h-17zM706 202h29v8h-29zM778 200h4v7h-4zM807 203h20v9h-20zM834 199h19v3h-19zM865 207h25v5h-25zM871 202h20v2h-20zM907 205h16v4h-16zM944 199h13v6h-13zM933 210h17v2h-17zM971 206h6v2h-6zM969 205h8v9h-8zM1011 197h7v4h-7zM1100 201h14v6h-14zM1099 206h24v8h-24zM1129 206h25v5h-25zM1149 204h4v6h-4zM266 223h22v3h-22zM296 225h26v3h-26zM335 219h10v7h-10zM332 218h13v8h-13zM352 228h15v2h-15zM356 224h15v4h-15zM469 226h12v6h-12zM502 222h7v6h-7zM527 221h5v8h-5zM547 221h14v7h-14zM573 221h7v6h-7zM569 224h7v3h-7zM595 228h10v3h-10zM611 224h4v8h-4zM624 223h19v6h-19zM665 224h27v8h-27zM700 219h9v5h-9zM701 225h23v6h-23zM728 222h30v3h-30zM764 220h22v5h-22zM774 220h12v7h-12zM792 218h16v6h-16zM846 222h15v7h-15zM846 223h23v8h-23zM874 218h18v8h-18zM877 229h14v2h-14zM905 222h4v7h-4zM946 230h29v2h-29zM986 224h12v8h-12zM1023 225h4v3h-4zM1010 226h16v2h-16zM1032 219h11v4h-11zM1036 218h5v4h-5zM1054 219h21v7h-21zM1078 218h12v8h-12zM1107 220h5v6h-5zM1121 226h13v5h-13zM1137 218h6v7h-6zM1152 225h12v7h-12zM1150 218h5v5h-5zM245 242h10v4h-10zM263 248h25v2h-25zM303 238h15v6h-15zM299 240h20v2h-20zM329 243h8v2h-8zM327 239h9v3h-9zM349 246h15v5h-15zM348 238h18v7h-18zM372 241h10v5h-10zM393 237h15v6h-15zM390 237h12v5h-12zM416 244h14v4h-14zM413 240h15v3h-15zM437 237h13v6h-13zM437 240h7v4h-7zM455 242h26v9h-26zM468 243h13v3h-13zM484 243h29v5h-29zM486 244h11v4h-11zM527 240h7v7h-7zM522 244h15v8h-15zM551 238h17v6h-17zM593 242h7v9h-7zM614 242h21v8h-21zM643 246h17v6h-17zM651 246h6v3h-6zM701 239h5v5h-5zM701 241h13v9h-13zM731 243h8v6h-8zM719 236h17v6h-17zM801 238h7v9h-7zM813 239h31v3h-31zM885 245h17v2h-17zM908 240h4v2h-4zM921 240h11v8h-11zM944 237h15v5h-15zM952 243h4v9h-4zM971 236h4v6h-4zM986 244h9v6h-9zM991 240h7v3h-7zM1008 248h16v3h-16zM1038 244h3v6h-3zM1040 241h9v3h-9zM1073 236h18v2h-18zM1096 248h24v3h-24zM1133 241h21v9h-21zM1132 244h13v8h-13zM237 261h16v10h-16zM238 259h8v10h-8zM268 264h3v7h-3zM298 265h8v7h-8zM295 258h11v5h-11zM315 261h6v7h-6zM315 264h11v4h-11zM342 263h4v8h-4zM363 266h19v7h-19zM406 257h3v7h-3zM434 261h16v7h-16zM488 266h6v3h-6zM501 266h27v7h-27zM505 259h25v3h-25zM533 263h25v5h-25zM537 257h11v8h-11zM564 263h19v7h-19zM622 263h10v10h-10zM663 258h3v4h-3zM675 262h23v7h-23zM709 265h5v3h-5zM707 263h4v5h-4zM720 263h20v7h-20zM729 260h10v3h-10zM747 256h14v6h-14zM773 260h6v9h-6zM793 260h7v6h-7zM805 260h25v4h-25zM836 260h6v2h-6zM835 261h11v9h-11zM869 268h3v2h-3zM892 258h18v9h-18zM925 266h11v6h-11zM915 262h12v6h-12zM949 262h13v10h-13zM1049 267h10v4h-10zM1077 267h25v4h-25zM1155 268h8v5h-8zM237 283h27v4h-27zM238 277h28v9h-28zM274 289h17v6h-17zM274 285h3v4h-3zM303 287h3v5h-3zM300 281h21v8h-21zM337 283h15v9h-15zM394 284h16v5h-16zM415 277h20v11h-20zM467 292h11v3h-11zM495 285h6v8h-6zM512 286h3v5h-3zM512 281h26v10h-26zM548 285h25v4h-25zM553 279h21v11h-21zM583 294h13v2h-13zM608 277h9v11h-9zM654 291h16v2h-16zM655 280h17v11h-17zM687 286h6v6h-6zM680 277h17v11h-17zM704 280h13v11h-13zM734 277h8v2h-8zM732 280h23v2h-23zM771 294h5v2h-5zM819 278h7v2h-7zM849 281h11v5h-11zM880 287h12v5h-12zM879 290h9v5h-9zM900 281h18v4h-18zM931 279h19v9h-19zM968 277h20v8h-20zM978 279h13v4h-13zM998 291h17v3h-17zM1025 284h6v6h-6zM1044 281h6v10h-6zM1038 279h5v9h-5zM1076 277h10v10h-10zM1096 279h32v5h-32zM1109 286h8v8h-8zM243 306h6v7h-6zM243 305h15v9h-15zM281 317h19v3h-19zM311 300h12v10h-12zM353 306h13v11h-13zM382 300h19v9h-19zM412 309h19v4h-19zM439 303h15v10h-15zM445 309h28v6h-28zM479 303h13v9h-13zM482 316h6v4h-6zM499 306h32v9h-32zM509 310h9v6h-9zM542 307h6v12h-6zM537 308h12v12h-12zM568 302h17v8h-17zM608 304h13v6h-13zM646 305h4v7h-4zM631 309h21v4h-21zM682 315h7v5h-7zM662 304h22v9h-22zM695 309h24v4h-24zM696 319h15v2h-15zM727 313h13v2h-13zM764 304h7v9h-7zM781 301h31v5h-31zM780 302h11v11h-11zM827 311h23v9h-23zM837 303h4v6h-4zM856 306h3v8h-3zM889 301h16v11h-16zM946 302h23v7h-23zM975 308h30v6h-30zM1021 305h10v5h-10zM1045 302h15v12h-15zM1099 318h12v3h-12zM1135 309h16v12h-16zM1131 308h24v7h-24zM238 343h9v3h-9zM296 328h21v9h-21zM289 334h14v6h-14zM332 332h19v2h-19zM343 331h3v8h-3zM364 331h19v12h-19zM374 333h15v12h-15zM399 326h17v9h-17zM393 332h26v10h-26zM440 343h13v3h-13zM464 330h13v5h-13zM465 334h11v11h-11zM482 326h22v7h-22zM491 334h10v9h-10zM594 335h17v8h-17zM599 328h13v7h-13zM624 328h22v2h-22zM651 329h27v7h-27zM653 330h21v3h-21zM693 325h16v4h-16zM690 325h11v12h-11zM721 339h20v7h-20zM728 342h12v2h-12zM749 330h27v10h-27zM747 325h27v7h-27zM784 338h18v6h-18zM802 328h5v11h-5zM841 325h9v12h-9zM847 330h6v9h-6zM866 325h6v10h-6zM866 334h9v2h-9zM903 329h3v3h-3zM891 332h6v8h-6zM915 329h5v4h-5zM948 340h4v5h-4zM995 325h12v7h-12zM1034 333h3v2h-3zM1024 332h9v8h-9zM1048 326h19v3h-19zM1048 325h19v10h-19zM1076 333h11v12h-11zM1077 332h12v9h-12zM1099 325h10v11h-10zM1107 332h8v8h-8zM1126 331h16v12h-16zM1130 333h5v12h-5zM1169 325h3v3h-3zM254 352h4v6h-4zM254 353h17v2h-17zM288 357h5v2h-5zM291 351h9v6h-9zM323 353h9v4h-9zM344 353h10v2h-10zM343 351h6v3h-6zM368 355h16v4h-16zM371 352h15v2h-15zM395 351h13v5h-13zM389 354h18v2h-18zM449 355h8v6h-8zM473 358h19v3h-19zM508 351h22v5h-22zM536 352h3v6h-3zM546 356h6v4h-6zM564 351h9v7h-9zM589 354h4v2h-4zM587 350h8v6h-8zM619 356h4v2h-4zM606 357h18v4h-18zM640 358h5v2h-5zM630 355h15v5h-15zM662 351h15v5h-15zM661 352h15v5h-15zM686 355h12v5h-12zM709 354h21v3h-21zM718 350h13v7h-13zM742 350h22v7h-22zM743 352h19v6h-19zM769 351h14v6h-14zM776 355h5v2h-5zM791 352h21v7h-21zM795 355h13v4h-13zM819 353h7v3h-7zM836 352h16v6h-16zM889 351h4v5h-4zM902 355h10v4h-10zM900 355h18v4h-18zM923 355h24v4h-24zM930 350h6v5h-6zM954 350h3v2h-3zM960 350h5v2h-5zM972 354h18v2h-18zM984 357h13v2h-13zM1032 351h6v5h-6zM1013 355h29v4h-29zM1076 354h32v2h-32zM1085 350h20v4h-20zM1115 353h13v5h-13zM1146 355h15v6h-15zM236 373h5v3h-5zM235 374h21v3h-21zM264 372h13v2h-13zM265 371h9v8h-9zM283 375h18v6h-18zM283 370h20v2h-20zM317 370h10v7h-10zM314 368h14v4h-14zM337 367h4v4h-4zM389 370h4v9h-4zM401 379h12v3h-12zM425 380h3v3h-3zM452 369h6v8h-6zM474 373h5v4h-5zM467 365h6v4h-6zM483 371h13v10h-13zM515 369h11v7h-11zM531 371h3v9h-3zM539 376h15v8h-15zM588 370h15v11h-15zM615 372h15v8h-15zM642 367h11v10h-11zM665 374h22v8h-22zM667 377h28v4h-28zM750 373h3v9h-3zM776 369h6v7h-6zM812 366h6v7h-6zM840 370h5v5h-5zM832 373h8v11h-8zM859 371h8v11h-8zM870 372h5v3h-5zM882 366h20v8h-20zM884 371h21v6h-21zM914 366h28v3h-28zM948 373h15v5h-15zM977 377h9v7h-9zM1021 378h5v4h-5zM1015 368h20v8h-20zM1042 365h19v9h-19zM1051 374h13v9h-13zM1075 374h16v2h-16zM1115 372h5v7h-5zM1147 374h8v5h-8zM1131 380h20v2h-20zM239 395h31v6h-31zM342 395h12v6h-12zM361 392h9v8h-9zM402 393h9v8h-9zM477 389h30v8h-30zM521 388h3v6h-3zM552 388h11v5h-11zM549 395h10v2h-10zM587 392h5v4h-5zM606 394h19v6h-19zM611 393h5v3h-5zM634 398h30v2h-30zM655 393h5v5h-5zM700 389h24v7h-24zM703 394h20v4h-20zM745 397h10v3h-10zM771 395h18v5h-18zM796 391h13v2h-13zM815 388h21v8h-21zM813 393h21v6h-21zM853 395h6v4h-6zM875 395h25v3h-25zM949 392h8v5h-8zM970 396h8v3h-8zM966 390h18v8h-18zM990 392h18v2h-18zM996 394h12v6h-12zM1053 389h12v2h-12zM1074 392h21v3h-21zM1073 393h14v4h-14zM1108 391h12v3h-12zM1113 393h13v8h-13zM1137 395h20v2h-20zM240 410h3v5h-3zM272 406h19v2h-19zM262 410h6v5h-6zM317 406h7v3h-7zM314 407h14v4h-14zM336 405h9v4h-9zM337 408h8v5h-8zM354 409h16v6h-16zM355 408h8v7h-8zM386 405h22v5h-22zM414 406h20v7h-20zM452 410h9v2h-9zM443 411h13v4h-13zM482 406h19v2h-19zM490 408h3v7h-3zM511 411h17v5h-17zM550 405h6v3h-6zM564 412h25v4h-25zM596 409h13v7h-13zM616 413h10v3h-10zM619 407h4v7h-4zM634 413h13v3h-13zM652 407h13v3h-13zM653 406h5v7h-5zM677 407h14v2h-14zM678 412h9v3h-9zM694 409h8v5h-8zM720 406h9v6h-9zM748 409h4v3h-4zM743 409h12v7h-12zM763 409h30v3h-30zM783 409h7v4h-7zM802 413h11v2h-11zM828 406h11v6h-11zM854 406h4v6h-4zM882 406h16v7h-16zM905 406h15v5h-15zM953 409h13v7h-13zM954 407h15v2h-15zM981 410h12v5h-12zM984 410h10v3h-10zM1014 405h5v5h-5zM1038 409h10v6h-10zM1056 407h5v7h-5zM1132 409h15v7h-15zM1126 406h20v5h-20zM235 423h15v9h-15zM236 420h10v3h-10zM308 423h11v6h-11zM325 428h28v7h-28zM341 425h6v2h-6zM358 427h17v3h-17zM380 423h15v5h-15zM406 430h3v5h-3zM426 427h29v8h-29zM464 422h5v3h-5zM489 427h11v5h-11zM488 426h4v5h-4zM517 431h3v4h-3zM518 423h8v6h-8zM537 426h25v6h-25zM531 427h7v3h-7zM609 422h31v7h-31zM644 427h4v5h-4zM671 420h4v2h-4zM666 428h10v4h-10zM683 425h7v7h-7zM759 425h17v5h-17zM783 423h15v8h-15zM830 425h22v7h-22zM856 422h14v9h-14zM858 428h9v5h-9zM937 422h9v7h-9zM973 424h10v5h-10zM974 425h18v7h-18zM1020 425h6v5h-6zM1018 428h14v2h-14zM1077 423h25v7h-25zM1088 427h16v8h-16zM1127 427h8v3h-8zM275 451h24v3h-24zM274 444h16v5h-16zM320 442h16v7h-16zM311 447h28v3h-28zM348 448h24v9h-24zM381 441h18v10h-18zM416 439h20v9h-20zM411 447h25v9h-25zM439 439h23v3h-23zM442 447h14v7h-14zM474 440h18v5h-18zM502 439h22v5h-22zM515 445h13v9h-13zM536 441h23v7h-23zM570 448h7v6h-7zM572 452h16v5h-16zM650 448h6v9h-6zM662 444h14v9h-14zM697 449h23v3h-23zM732 448h9v6h-9zM756 445h3v9h-3zM746 449h11v6h-11zM768 440h6v10h-6zM792 447h4v5h-4zM786 443h12v9h-12zM802 448h8v9h-8zM809 442h4v10h-4zM827 443h13v8h-13zM827 449h10v7h-10zM843 453h10v3h-10zM897 439h12v10h-12zM898 441h5v7h-5zM915 450h14v4h-14zM917 439h18v5h-18zM956 442h10v2h-10zM948 447h17v10h-17zM971 455h18v2h-18zM983 441h17v8h-17zM1014 450h8v2h-8zM1027 447h23v3h-23zM1031 443h16v10h-16zM1062 443h21v3h-21zM1123 451h10v6h-10zM1121 448h11v9h-11zM1143 447h7v6h-7zM239 472h3v2h-3zM277 468h7v8h-7zM301 469h10v4h-10zM301 463h6v7h-6zM325 464h3v5h-3zM315 469h13v6h-13zM355 463h6v8h-6zM343 465h12v7h-12zM377 462h9v2h-9zM402 465h17v7h-17zM430 465h11v5h-11zM452 464h31v9h-31zM459 465h14v8h-14zM498 468h18v7h-18zM533 466h14v4h-14zM542 463h4v4h-4zM562 464h5v9h-5zM564 466h9v8h-9zM576 468h20v5h-20zM645 464h21v4h-21zM672 466h13v9h-13zM691 465h25v8h-25zM694 467h18v9h-18zM729 467h26v9h-26zM764 464h12v5h-12zM766 462h12v6h-12zM789 473h25v2h-25zM826 468h22v8h-22zM861 469h19v7h-19zM859 463h13v9h-13zM889 463h17v2h-17zM918 462h14v9h-14zM917 465h7v5h-7zM955 463h8v5h-8zM936 472h30v4h-30zM982 466h17v7h-17zM975 466h25v5h-25zM1013 462h3v9h-3zM1047 461h9v5h-9zM1071 466h9v7h-9zM1084 464h25v9h-25zM1090 466h13v7h-13zM1119 465h16v3h-16zM1139 472h11v2h-11zM244 484h4v6h-4zM241 482h7v6h-7zM302 484h13v5h-13zM300 482h3v5h-3zM324 484h17v5h-17zM323 482h18v3h-18zM352 482h8v7h-8zM348 481h12v6h-12zM409 484h15v6h-15zM411 483h16v7h-16zM432 485h3v2h-3zM430 481h18v3h-18zM458 489h16v2h-16zM485 486h6v3h-6zM485 484h12v5h-12zM514 485h10v6h-10zM518 485h12v6h-12zM543 482h10v4h-10zM541 481h13v4h-13zM565 481h9v7h-9zM599 484h8v6h-8zM589 485h14v6h-14zM615 480h11v7h-11zM633 485h5v6h-5zM635 484h12v5h-12zM665 484h23v6h-23zM672 483h16v5h-16zM698 485h3v3h-3zM692 480h28v3h-28zM729 485h15v4h-15zM729 483h13v4h-13zM777 482h9v7h-9zM816 485h12v6h-12zM854 482h10v4h-10zM846 483h19v5h-19zM869 480h13v3h-13zM902 482h3v5h-3zM895 485h9v3h-9zM920 481h10v7h-10zM933 484h24v2h-24zM947 482h13v3h-13zM973 487h12v3h-12zM972 481h8v5h-8zM1030 481h13v6h-13zM1048 483h9v3h-9zM1091 484h29v3h-29zM1104 483h12v5h-12zM1125 488h14v2h-14zM1149 482h11v6h-11zM1156 484h12v6h-12zM237 509h12v4h-12zM238 501h20v4h-20zM269 510h9v3h-9zM268 509h13v4h-13zM286 497h9v9h-9zM293 503h11v11h-11zM313 499h7v11h-7zM311 505h3v4h-3zM351 508h4v4h-4zM337 501h19v5h-19zM362 504h22v10h-22zM365 497h19v7h-19zM393 496h9v7h-9zM395 496h8v11h-8zM421 506h8v4h-8zM422 506h6v5h-6zM449 503h7v10h-7zM445 495h3v5h-3zM477 510h14v4h-14zM474 502h23v6h-23zM501 502h22v5h-22zM576 505h7v6h-7zM569 513h9v2h-9zM591 503h18v9h-18zM625 507h7v4h-7zM643 499h16v9h-16zM647 502h6v9h-6zM665 497h15v5h-15zM690 500h11v4h-11zM728 501h29v10h-29zM779 508h5v3h-5zM802 513h7v2h-7zM827 498h24v9h-24zM864 500h9v5h-9zM861 505h7v10h-7zM891 503h8v4h-8zM884 501h17v8h-17zM915 502h5v6h-5zM914 503h3v8h-3zM937 496h6v3h-6zM935 508h8v6h-8zM956 502h4v11h-4zM961 501h15v5h-15zM983 498h15v10h-15zM1002 499h21v3h-21zM1037 499h12v8h-12zM1091 501h10v7h-10zM1162 496h4v11h-4zM260 523h4v3h-4zM280 525h26v3h-26zM318 521h22v6h-22zM343 519h3v8h-3zM363 521h4v4h-4zM390 521h5v2h-5zM377 521h7v7h-7zM453 519h11v7h-11zM515 521h5v3h-5zM511 522h17v4h-17zM542 522h10v8h-10zM560 519h9v3h-9zM560 522h14v7h-14zM586 519h9v5h-9zM581 523h12v7h-12zM607 521h11v2h-11zM607 527h27v2h-27zM656 519h4v3h-4zM644 528h6v4h-6zM705 524h30v5h-30zM707 519h28v4h-28zM752 529h6v3h-6zM746 526h19v5h-19zM784 520h10v5h-10zM800 523h13v7h-13zM826 529h34v3h-34zM868 526h29v2h-29zM865 523h26v6h-26zM902 524h14v8h-14zM908 525h13v6h-13zM955 519h5v4h-5zM946 520h19v4h-19zM971 522h15v4h-15zM981 520h8v4h-8zM1069 520h17v5h-17zM1106 523h3v7h-3zM1096 521h23v4h-23zM1139 520h3v2h-3zM1128 526h16v3h-16zM1156 524h6v8h-6zM241 539h7v9h-7zM243 542h10v4h-10zM264 540h7v6h-7zM266 539h10v4h-10zM371 537h9v8h-9zM394 539h3v3h-3zM437 538h21v8h-21zM507 543h3v8h-3zM535 544h3v5h-3zM525 545h16v6h-16zM555 540h15v6h-15zM605 543h7v5h-7zM608 540h5v4h-5zM619 536h14v6h-14zM619 536h3v2h-3zM656 543h4v8h-4zM640 540h5v3h-5zM699 541h8v4h-8zM712 539h8v8h-8zM745 541h11v4h-11zM756 542h3v3h-3zM768 542h25v9h-25zM775 538h24v5h-24zM812 542h4v9h-4zM808 537h20v9h-20zM839 542h15v7h-15zM861 541h28v7h-28zM863 541h28v6h-28zM900 546h7v5h-7zM940 542h11v4h-11zM943 541h5v9h-5zM977 539h19v7h-19zM1010 542h26v2h-26zM1012 538h18v6h-18zM1041 542h9v9h-9zM1040 541h4v8h-4zM1086 539h6v4h-6zM1110 540h22v9h-22zM1123 542h13v8h-13zM1158 537h5v8h-5zM1142 544h19v2h-19zM239 561h17v6h-17zM236 563h20v10h-20zM307 566h10v6h-10zM298 560h5v4h-5zM326 566h6v9h-6zM363 560h9v6h-9zM399 557h19v7h-19zM399 556h10v11h-10zM426 562h29v9h-29zM478 557h5v10h-5zM504 560h3v10h-3zM502 564h18v4h-18zM533 561h24v3h-24zM572 571h5v2h-5zM564 560h4v9h-4zM601 565h26v2h-26zM633 569h13v4h-13zM630 563h3v5h-3zM653 565h29v4h-29zM706 557h20v8h-20zM730 564h7v10h-7zM737 557h4v3h-4zM790 563h13v6h-13zM818 568h28v6h-28zM841 560h3v10h-3zM851 559h12v6h-12zM851 565h17v5h-17zM877 566h24v8h-24zM873 562h26v7h-26zM909 566h23v4h-23zM942 567h6v7h-6zM936 568h12v2h-12zM995 556h13v5h-13zM988 565h6v6h-6zM1020 564h14v5h-14zM1042 561h3v5h-3zM1093 556h9v11h-9zM1092 561h10v7h-10zM1119 564h4v10h-4zM1123 557h4v4h-4zM269 583h11v2h-11zM290 588h17v9h-17zM289 595h12v3h-12zM327 585h9v4h-9zM328 581h7v11h-7zM376 579h25v2h-25zM382 589h18v6h-18zM431 595h15v3h-15zM431 591h19v5h-19zM476 584h5v11h-5zM509 588h7v4h-7zM543 582h3v10h-3zM557 581h25v7h-25zM569 585h13v3h-13zM623 584h19v2h-19zM652 585h7v11h-7zM663 579h6v7h-6zM679 582h13v10h-13zM677 585h15v4h-15zM706 585h12v11h-12zM711 586h6v10h-6zM735 587h25v5h-25zM779 584h3v11h-3zM769 588h9v10h-9zM792 584h8v8h-8zM846 593h9v4h-9zM852 584h3v10h-3zM892 583h4v9h-4zM912 581h17v11h-17zM918 579h7v2h-7zM940 584h27v10h-27zM943 586h17v11h-17zM977 585h20v11h-20zM1020 580h3v5h-3zM1015 586h5v7h-5zM1042 589h6v6h-6zM1125 584h3v7h-3zM1141 582h24v3h-24zM1154 589h13v7h-13zM235 602h30v9h-30zM273 612h32v11h-32zM312 602h5v9h-5zM340 604h6v5h-6zM354 610h20v10h-20zM358 614h21v3h-21zM383 603h14v10h-14zM414 611h8v5h-8zM427 602h4v2h-4zM439 614h5v5h-5zM461 612h17v10h-17zM462 608h16v6h-16zM517 608h25v8h-25zM512 610h12v5h-12zM557 602h5v12h-5zM562 604h3v3h-3zM577 608h20v2h-20zM582 606h19v3h-19zM620 611h8v4h-8zM642 605h5v8h-5zM632 612h24v3h-24zM669 602h6v12h-6zM663 610h13v11h-13zM691 602h9v12h-9zM699 617h16v5h-16zM726 606h13v7h-13zM730 621h3v2h-3zM761 608h10v12h-10zM782 602h8v9h-8zM819 605h5v9h-5zM813 617h14v3h-14zM837 603h21v12h-21zM835 606h11v7h-11zM872 605h4v5h-4zM887 611h9v12h-9zM903 610h13v5h-13zM960 610h8v9h-8zM960 607h3v5h-3zM985 604h3v2h-3zM983 616h5v5h-5zM1011 611h11v6h-11zM1027 605h15v7h-15zM1063 603h5v9h-5zM1053 606h15v11h-15zM1091 617h13v2h-13zM1084 616h32v4h-32zM1141 617h5v5h-5z" fill="#e0e0e2"/><path d="M250 -313v13M279 -313v13M297 -313v13M328 -313v13M345 -313v13M367 -313v13M402 -313v13M421 -313v13M446 -313v13M466 -313v13M488 -313v13M518 -313v13M541 -313v13M571 -313v13M603 -313v13M632 -313v13M663 -313v13M687 -313v13M710 -313v13M734 -313v13M761 -313v13M782 -313v13M813 -313v13M847 -313v13M879 -313v13M904 -313v13M936 -313v13M970 -313v13M988 -313v13M1012 -313v13M1043 -313v13M1072 -313v13M1101 -313v13M1129 -313v13M1164 -313v13M234 -301h916M258 -300v14M282 -300v14M319 -300v14M340 -300v14M369 -300v14M405 -300v14M425 -300v14M452 -300v14M484 -300v14M507 -300v14M542 -300v14M578 -300v14M595 -300v14M619 -300v14M652 -300v14M691 -300v14M721 -300v14M756 -300v14M787 -300v14M824 -300v14M842 -300v14M880 -300v14M902 -300v14M921 -300v14M945 -300v14M962 -300v14M998 -300v14M1017 -300v14M1037 -300v14M1058 -300v14M1084 -300v14M1104 -300v14M1135 -300v14M1174 -300v14M234 -287h916M254 -286v14M290 -286v14M326 -286v14M357 -286v14M385 -286v14M421 -286v14M455 -286v14M478 -286v14M502 -286v14M523 -286v14M540 -286v14M560 -286v14M596 -286v14M624 -286v14M650 -286v14M669 -286v14M695 -286v14M729 -286v14M768 -286v14M806 -286v14M844 -286v14M877 -286v14M914 -286v14M950 -286v14M970 -286v14M1006 -286v14M1037 -286v14M1054 -286v14M1081 -286v14M1114 -286v14M1135 -286v14M1162 -286v14M234 -273h916M268 -272v14M288 -272v14M310 -272v14M334 -272v14M361 -272v14M399 -272v14M430 -272v14M451 -272v14M490 -272v14M516 -272v14M538 -272v14M570 -272v14M591 -272v14M617 -272v14M634 -272v14M669 -272v14M697 -272v14M716 -272v14M752 -272v14M785 -272v14M822 -272v14M847 -272v14M875 -272v14M911 -272v14M937 -272v14M959 -272v14M980 -272v14M1016 -272v14M1050 -272v14M1076 -272v14M1105 -272v14M1126 -272v14M1160 -272v14M234 -259h916M250 -258v16M270 -258v16M290 -258v16M315 -258v16M347 -258v16M366 -258v16M404 -258v16M440 -258v16M464 -258v16M502 -258v16M541 -258v16M563 -258v16M598 -258v16M616 -258v16M649 -258v16M679 -258v16M718 -258v16M756 -258v16M779 -258v16M812 -258v16M844 -258v16M881 -258v16M899 -258v16M924 -258v16M960 -258v16M993 -258v16M1023 -258v16M1040 -258v16M1073 -258v16M1107 -258v16M1141 -258v16M1160 -258v16M234 -243h916M255 -242v16M291 -242v16M329 -242v16M358 -242v16M382 -242v16M402 -242v16M425 -242v16M452 -242v16M478 -242v16M504 -242v16M542 -242v16M568 -242v16M607 -242v16M629 -242v16M666 -242v16M695 -242v16M732 -242v16M758 -242v16M787 -242v16M808 -242v16M839 -242v16M859 -242v16M888 -242v16M913 -242v16M950 -242v16M967 -242v16M988 -242v16M1022 -242v16M1059 -242v16M1082 -242v16M1119 -242v16M1139 -242v16M1173 -242v16M234 -227h916M250 -226v24M277 -226v24M312 -226v24M338 -226v24M361 -226v24M393 -226v24M429 -226v24M460 -226v24M497 -226v24M521 -226v24M547 -226v24M572 -226v24M598 -226v24M636 -226v24M654 -226v24M684 -226v24M722 -226v24M746 -226v24M782 -226v24M800 -226v24M821 -226v24M844 -226v24M868 -226v24M885 -226v24M921 -226v24M959 -226v24M978 -226v24M1011 -226v24M1029 -226v24M1049 -226v24M1084 -226v24M1118 -226v24M1140 -226v24M1167 -226v24M234 -203h916M253 -202v13M287 -202v13M323 -202v13M359 -202v13M398 -202v13M417 -202v13M446 -202v13M484 -202v13M512 -202v13M538 -202v13M575 -202v13M593 -202v13M620 -202v13M640 -202v13M670 -202v13M692 -202v13M709 -202v13M739 -202v13M777 -202v13M804 -202v13M830 -202v13M864 -202v13M902 -202v13M937 -202v13M967 -202v13M995 -202v13M1033 -202v13M1059 -202v13M1085 -202v13M1102 -202v13M1120 -202v13M1155 -202v13M234 -190h916M259 -189v20M298 -189v20M332 -189v20M369 -189v20M399 -189v20M432 -189v20M466 -189v20M498 -189v20M537 -189v20M575 -189v20M605 -189v20M632 -189v20M657 -189v20M674 -189v20M710 -189v20M727 -189v20M745 -189v20M777 -189v20M797 -189v20M836 -189v20M864 -189v20M889 -189v20M928 -189v20M961 -189v20M983 -189v20M1012 -189v20M1035 -189v20M1067 -189v20M1106 -189v20M1131 -189v20M1154 -189v20M234 -170h916M256 -169v18M286 -169v18M310 -169v18M349 -169v18M369 -169v18M389 -169v18M421 -169v18M440 -169v18M474 -169v18M502 -169v18M531 -169v18M567 -169v18M588 -169v18M608 -169v18M634 -169v18M662 -169v18M684 -169v18M720 -169v18M757 -169v18M792 -169v18M815 -169v18M848 -169v18M866 -169v18M886 -169v18M923 -169v18M957 -169v18M974 -169v18M1003 -169v18M1029 -169v18M1047 -169v18M1080 -169v18M1101 -169v18M1122 -169v18M1155 -169v18M234 -152h916M251 -151v18M271 -151v18M296 -151v18M326 -151v18M351 -151v18M387 -151v18M412 -151v18M451 -151v18M481 -151v18M519 -151v18M544 -151v18M576 -151v18M615 -151v18M646 -151v18M669 -151v18M705 -151v18M728 -151v18M749 -151v18M780 -151v18M815 -151v18M841 -151v18M861 -151v18M900 -151v18M918 -151v18M935 -151v18M957 -151v18M985 -151v18M1011 -151v18M1040 -151v18M1072 -151v18M1092 -151v18M1121 -151v18M1152 -151v18M234 -134h916M261 -133v14M291 -133v14M329 -133v14M362 -133v14M398 -133v14M417 -133v14M437 -133v14M463 -133v14M488 -133v14M521 -133v14M550 -133v14M570 -133v14M608 -133v14M629 -133v14M653 -133v14M685 -133v14M704 -133v14M743 -133v14M761 -133v14M796 -133v14M829 -133v14M856 -133v14M887 -133v14M919 -133v14M944 -133v14M975 -133v14M1010 -133v14M1029 -133v14M1051 -133v14M1074 -133v14M1099 -133v14M1123 -133v14M1153 -133v14M234 -120h916M265 -119v18M288 -119v18M316 -119v18M334 -119v18M353 -119v18M381 -119v18M413 -119v18M435 -119v18M466 -119v18M486 -119v18M505 -119v18M523 -119v18M547 -119v18M570 -119v18M596 -119v18M623 -119v18M645 -119v18M669 -119v18M695 -119v18M715 -119v18M744 -119v18M783 -119v18M807 -119v18M833 -119v18M854 -119v18M877 -119v18M916 -119v18M943 -119v18M974 -119v18M991 -119v18M1010 -119v18M1040 -119v18M1057 -119v18M1084 -119v18M1121 -119v18M1144 -119v18M1161 -119v18M234 -102h916M252 -101v16M279 -101v16M314 -101v16M347 -101v16M375 -101v16M394 -101v16M428 -101v16M459 -101v16M487 -101v16M504 -101v16M525 -101v16M547 -101v16M582 -101v16M620 -101v16M643 -101v16M663 -101v16M689 -101v16M724 -101v16M756 -101v16M785 -101v16M802 -101v16M830 -101v16M850 -101v16M882 -101v16M913 -101v16M936 -101v16M975 -101v16M1004 -101v16M1022 -101v16M1050 -101v16M1086 -101v16M1105 -101v16M1139 -101v16M1161 -101v16M234 -86h916M266 -85v14M305 -85v14M342 -85v14M359 -85v14M395 -85v14M418 -85v14M440 -85v14M472 -85v14M509 -85v14M535 -85v14M571 -85v14M604 -85v14M628 -85v14M645 -85v14M678 -85v14M713 -85v14M737 -85v14M770 -85v14M802 -85v14M836 -85v14M853 -85v14M878 -85v14M898 -85v14M921 -85v14M951 -85v14M974 -85v14M998 -85v14M1030 -85v14M1055 -85v14M1078 -85v14M1111 -85v14M1135 -85v14M1156 -85v14M234 -72h916M255 -71v25M286 -71v25M325 -71v25M351 -71v25M379 -71v25M412 -71v25M435 -71v25M474 -71v25M506 -71v25M529 -71v25M563 -71v25M594 -71v25M626 -71v25M650 -71v25M674 -71v25M699 -71v25M724 -71v25M742 -71v25M759 -71v25M788 -71v25M823 -71v25M842 -71v25M875 -71v25M902 -71v25M924 -71v25M955 -71v25M972 -71v25M993 -71v25M1020 -71v25M1048 -71v25M1075 -71v25M1092 -71v25M1128 -71v25M1155 -71v25M234 -47h916M269 -46v16M287 -46v16M325 -46v16M364 -46v16M384 -46v16M402 -46v16M429 -46v16M462 -46v16M480 -46v16M508 -46v16M543 -46v16M561 -46v16M596 -46v16M616 -46v16M648 -46v16M672 -46v16M699 -46v16M716 -46v16M746 -46v16M781 -46v16M819 -46v16M837 -46v16M873 -46v16M912 -46v16M937 -46v16M973 -46v16M990 -46v16M1020 -46v16M1057 -46v16M1086 -46v16M1104 -46v16M1138 -46v16M1162 -46v16M234 -31h916M251 -30v14M285 -30v14M306 -30v14M336 -30v14M357 -30v14M393 -30v14M419 -30v14M457 -30v14M480 -30v14M509 -30v14M545 -30v14M562 -30v14M601 -30v14M633 -30v14M663 -30v14M693 -30v14M712 -30v14M749 -30v14M775 -30v14M801 -30v14M830 -30v14M856 -30v14M889 -30v14M916 -30v14M946 -30v14M963 -30v14M1000 -30v14M1022 -30v14M1053 -30v14M1083 -30v14M1106 -30v14M1134 -30v14M1152 -30v14M234 -17h916M261 -16v14M292 -16v14M320 -16v14M338 -16v14M376 -16v14M407 -16v14M442 -16v14M470 -16v14M497 -16v14M526 -16v14M557 -16v14M587 -16v14M612 -16v14M648 -16v14M673 -16v14M697 -16v14M727 -16v14M747 -16v14M774 -16v14M804 -16v14M832 -16v14M855 -16v14M888 -16v14M918 -16v14M955 -16v14M992 -16v14M1017 -16v14M1056 -16v14M1084 -16v14M1109 -16v14M1128 -16v14M1153 -16v14M234 -3h916M256 -2v25M275 -2v25M303 -2v25M326 -2v25M358 -2v25M381 -2v25M409 -2v25M427 -2v25M456 -2v25M489 -2v25M519 -2v25M538 -2v25M561 -2v25M580 -2v25M603 -2v25M622 -2v25M640 -2v25M659 -2v25M678 -2v25M702 -2v25M719 -2v25M737 -2v25M769 -2v25M801 -2v25M820 -2v25M859 -2v25M896 -2v25M933 -2v25M951 -2v25M989 -2v25M1018 -2v25M1041 -2v25M1066 -2v25M1088 -2v25M1112 -2v25M1149 -2v25M234 22h916M263 23v23M301 23v23M334 23v23M367 23v23M388 23v23M421 23v23M449 23v23M480 23v23M511 23v23M538 23v23M556 23v23M593 23v23M614 23v23M644 23v23M681 23v23M715 23v23M738 23v23M757 23v23M792 23v23M814 23v23M846 23v23M864 23v23M891 23v23M926 23v23M962 23v23M990 23v23M1018 23v23M1048 23v23M1081 23v23M1102 23v23M1124 23v23M1153 23v23M234 45h916M259 46v24M277 46v24M304 46v24M329 46v24M358 46v24M397 46v24M415 46v24M443 46v24M466 46v24M490 46v24M508 46v24M527 46v24M562 46v24M594 46v24M622 46v24M646 46v24M665 46v24M685 46v24M709 46v24M744 46v24M781 46v24M806 46v24M826 46v24M854 46v24M889 46v24M915 46v24M946 46v24M971 46v24M998 46v24M1031 46v24M1050 46v24M1082 46v24M1104 46v24M1139 46v24M1162 46v24M234 69h916M259 70v19M285 70v19M310 70v19M344 70v19M364 70v19M394 70v19M413 70v19M451 70v19M474 70v19M510 70v19M544 70v19M574 70v19M611 70v19M641 70v19M670 70v19M688 70v19M709 70v19M727 70v19M746 70v19M780 70v19M808 70v19M846 70v19M875 70v19M912 70v19M951 70v19M985 70v19M1014 70v19M1033 70v19M1050 70v19M1089 70v19M1121 70v19M1156 70v19M234 88h916M250 89v24M282 89v24M321 89v24M354 89v24M391 89v24M421 89v24M447 89v24M467 89v24M505 89v24M527 89v24M566 89v24M588 89v24M614 89v24M636 89v24M666 89v24M695 89v24M721 89v24M747 89v24M777 89v24M795 89v24M825 89v24M849 89v24M873 89v24M899 89v24M924 89v24M959 89v24M982 89v24M1002 89v24M1034 89v24M1057 89v24M1092 89v24M1128 89v24M1149 89v24M234 112h916M272 113v14M308 113v14M328 113v14M352 113v14M376 113v14M413 113v14M447 113v14M473 113v14M502 113v14M541 113v14M576 113v14M600 113v14M621 113v14M650 113v14M670 113v14M708 113v14M744 113v14M768 113v14M802 113v14M824 113v14M843 113v14M864 113v14M898 113v14M936 113v14M958 113v14M995 113v14M1023 113v14M1040 113v14M1065 113v14M1089 113v14M1106 113v14M1145 113v14M1168 113v14M234 126h916M265 127v18M292 127v18M314 127v18M341 127v18M370 127v18M392 127v18M419 127v18M456 127v18M482 127v18M521 127v18M539 127v18M567 127v18M605 127v18M644 127v18M673 127v18M697 127v18M732 127v18M751 127v18M777 127v18M811 127v18M836 127v18M870 127v18M905 127v18M944 127v18M979 127v18M1012 127v18M1040 127v18M1071 127v18M1108 127v18M1126 127v18M1162 127v18M234 144h916M253 145v15M291 145v15M315 145v15M347 145v15M386 145v15M404 145v15M425 145v15M450 145v15M485 145v15M515 145v15M549 145v15M570 145v15M604 145v15M642 145v15M660 145v15M698 145v15M728 145v15M755 145v15M775 145v15M793 145v15M812 145v15M837 145v15M856 145v15M892 145v15M921 145v15M940 145v15M962 145v15M983 145v15M1018 145v15M1040 145v15M1058 145v15M1079 145v15M1104 145v15M1121 145v15M1147 145v15M1174 145v15M234 159h916M252 160v23M282 160v23M311 160v23M337 160v23M376 160v23M395 160v23M419 160v23M456 160v23M491 160v23M516 160v23M541 160v23M572 160v23M589 160v23M620 160v23M653 160v23M688 160v23M706 160v23M729 160v23M751 160v23M790 160v23M821 160v23M858 160v23M896 160v23M915 160v23M945 160v23M966 160v23M987 160v23M1022 160v23M1059 160v23M1078 160v23M1113 160v23M1144 160v23M1170 160v23M234 182h916M260 183v13M296 183v13M315 183v13M354 183v13M385 183v13M412 183v13M434 183v13M458 183v13M496 183v13M532 183v13M568 183v13M603 183v13M627 183v13M650 183v13M670 183v13M687 183v13M723 183v13M748 183v13M785 183v13M824 183v13M855 183v13M882 183v13M919 183v13M944 183v13M967 183v13M990 183v13M1007 183v13M1041 183v13M1067 183v13M1106 183v13M1127 183v13M1152 183v13M234 195h916M253 196v21M275 196v21M293 196v21M316 196v21M342 196v21M379 196v21M399 196v21M416 196v21M441 196v21M466 196v21M485 196v21M514 196v21M539 196v21M567 196v21M594 196v21M628 196v21M656 196v21M680 196v21M701 196v21M736 196v21M763 196v21M797 196v21M830 196v21M863 196v21M893 196v21M924 196v21M958 196v21M985 196v21M1024 196v21M1052 196v21M1089 196v21M1124 196v21M1159 196v21M234 216h916M264 217v18M291 217v18M327 217v18M350 217v18M376 217v18M415 217v18M434 217v18M463 217v18M482 217v18M516 217v18M539 217v18M563 217v18M589 217v18M617 217v18M655 217v18M693 217v18M725 217v18M761 217v18M788 217v18M817 217v18M843 217v18M872 217v18M895 217v18M914 217v18M944 217v18M979 217v18M1000 217v18M1028 217v18M1045 217v18M1076 217v18M1096 217v18M1117 217v18M1144 217v18M1165 217v18M234 234h916M260 235v20M293 235v20M321 235v20M345 235v20M368 235v20M386 235v20M411 235v20M432 235v20M451 235v20M482 235v20M516 235v20M538 235v20M574 235v20M604 235v20M640 235v20M663 235v20M698 235v20M717 235v20M740 235v20M777 235v20M810 235v20M846 235v20M871 235v20M906 235v20M935 235v20M960 235v20M981 235v20M1000 235v20M1028 235v20M1053 235v20M1092 235v20M1130 235v20M1159 235v20M234 254h916M257 255v21M292 255v21M310 255v21M327 255v21M357 255v21M395 255v21M431 255v21M452 255v21M470 255v21M498 255v21M531 255v21M562 255v21M595 255v21M633 255v21M668 255v21M699 255v21M718 255v21M744 255v21M763 255v21M780 255v21M802 255v21M832 255v21M859 255v21M876 255v21M912 255v21M945 255v21M971 255v21M998 255v21M1033 255v21M1069 255v21M1103 255v21M1140 255v21M1165 255v21M234 275h916M272 276v23M296 276v23M333 276v23M353 276v23M391 276v23M412 276v23M437 276v23M458 276v23M482 276v23M505 276v23M541 276v23M577 276v23M601 276v23M622 276v23M652 276v23M676 276v23M700 276v23M727 276v23M759 276v23M790 276v23M816 276v23M847 276v23M876 276v23M893 276v23M925 276v23M958 276v23M992 276v23M1017 276v23M1035 276v23M1056 276v23M1094 276v23M1131 276v23M1150 276v23M234 298h916M266 299v25M302 299v25M333 299v25M372 299v25M404 299v25M437 299v25M475 299v25M493 299v25M532 299v25M561 299v25M597 299v25M629 299v25M659 299v25M692 299v25M721 299v25M760 299v25M778 299v25M817 299v25M852 299v25M883 299v25M908 299v25M940 299v25M970 299v25M1007 299v25M1041 299v25M1064 299v25M1084 299v25M1122 299v25M1156 299v25M234 323h916M251 324v25M285 324v25M322 324v25M355 324v25M391 324v25M423 324v25M462 324v25M480 324v25M507 324v25M545 324v25M578 324v25M615 324v25M649 324v25M681 324v25M719 324v25M744 324v25M778 324v25M815 324v25M832 324v25M854 324v25M889 324v25M912 324v25M931 324v25M953 324v25M989 324v25M1010 324v25M1042 324v25M1074 324v25M1093 324v25M1120 324v25M1143 324v25M1179 324v25M234 348h916M251 349v15M275 349v15M311 349v15M334 349v15M356 349v15M387 349v15M410 349v15M446 349v15M471 349v15M495 349v15M531 349v15M556 349v15M584 349v15M602 349v15M627 349v15M647 349v15M678 349v15M700 349v15M737 349v15M767 349v15M787 349v15M813 349v15M834 349v15M873 349v15M896 349v15M920 349v15M949 349v15M970 349v15M1007 349v15M1045 349v15M1074 349v15M1112 349v15M1142 349v15M1165 349v15M234 363h916M260 364v23M281 364v23M306 364v23M335 364v23M357 364v23M383 364v23M414 364v23M442 364v23M463 364v23M481 364v23M499 364v23M528 364v23M563 364v23M584 364v23M609 364v23M633 364v23M663 364v23M698 364v23M728 364v23M764 364v23M803 364v23M825 364v23M853 364v23M878 364v23M908 364v23M946 364v23M968 364v23M1004 364v23M1040 364v23M1071 364v23M1096 364v23M1128 364v23M1159 364v23M234 386h916M271 387v17M308 387v17M339 387v17M357 387v17M380 387v17M417 387v17M449 387v17M473 387v17M508 387v17M537 387v17M573 387v17M604 387v17M630 387v17M666 387v17M697 387v17M729 387v17M762 387v17M792 387v17M811 387v17M839 387v17M866 387v17M901 387v17M936 387v17M958 387v17M986 387v17M1012 387v17M1051 387v17M1070 387v17M1097 387v17M1135 387v17M1172 387v17M234 403h916M259 404v15M293 404v15M310 404v15M333 404v15M350 404v15M372 404v15M411 404v15M438 404v15M475 404v15M503 404v15M538 404v15M559 404v15M592 404v15M611 404v15M629 404v15M650 404v15M668 404v15M692 404v15M717 404v15M739 404v15M759 404v15M794 404v15M822 404v15M846 404v15M867 404v15M900 404v15M931 404v15M948 404v15M977 404v15M995 404v15M1022 404v15M1049 404v15M1072 404v15M1096 404v15M1117 404v15M1149 404v15M234 418h916M253 419v19M276 419v19M294 419v19M321 419v19M355 419v19M378 419v19M404 419v19M421 419v19M456 419v19M482 419v19M510 419v19M528 419v19M565 419v19M604 419v19M642 419v19M660 419v19M677 419v19M695 419v19M727 419v19M757 419v19M779 419v19M801 419v19M825 419v19M854 419v19M873 419v19M900 419v19M933 419v19M959 419v19M997 419v19M1016 419v19M1036 419v19M1074 419v19M1106 419v19M1144 419v19M1164 419v19M234 437h916M268 438v22M304 438v22M343 438v22M374 438v22M404 438v22M437 438v22M466 438v22M497 438v22M531 438v22M562 438v22M589 438v22M626 438v22M660 438v22M694 438v22M723 438v22M743 438v22M762 438v22M780 438v22M800 438v22M818 438v22M841 438v22M863 438v22M893 438v22M910 438v22M937 438v22M968 438v22M1004 438v22M1023 438v22M1055 438v22M1094 438v22M1116 438v22M1135 438v22M1152 438v22M234 459h916M254 460v19M288 460v19M313 460v19M337 460v19M366 460v19M399 460v19M421 460v19M450 460v19M488 460v19M521 460v19M549 460v19M574 460v19M599 460v19M632 460v19M667 460v19M689 460v19M720 460v19M758 460v19M785 460v19M819 460v19M857 460v19M881 460v19M915 460v19M934 460v19M973 460v19M1003 460v19M1020 460v19M1038 460v19M1063 460v19M1081 460v19M1112 460v19M1137 460v19M1163 460v19M234 478h916M259 479v15M297 479v15M320 479v15M343 479v15M362 479v15M399 479v15M428 479v15M456 479v15M479 479v15M504 479v15M539 479v15M558 479v15M575 479v15M610 479v15M630 479v15M651 479v15M690 479v15M724 479v15M745 479v15M767 479v15M787 479v15M808 479v15M843 479v15M867 479v15M886 479v15M910 479v15M931 479v15M961 479v15M991 479v15M1028 479v15M1046 479v15M1064 479v15M1083 479v15M1121 479v15M1142 479v15M1170 479v15M234 493h916M263 494v24M284 494v24M307 494v24M332 494v24M357 494v24M386 494v24M405 494v24M441 494v24M467 494v24M499 494v24M527 494v24M560 494v24M586 494v24M614 494v24M640 494v24M662 494v24M683 494v24M722 494v24M759 494v24M797 494v24M822 494v24M859 494v24M877 494v24M902 494v24M931 494v24M950 494v24M977 494v24M1000 494v24M1026 494v24M1050 494v24M1084 494v24M1112 494v24M1145 494v24M1167 494v24M234 517h916M256 518v17M275 518v17M310 518v17M347 518v17M368 518v17M398 518v17M433 518v17M471 518v17M508 518v17M532 518v17M557 518v17M578 518v17M604 518v17M638 518v17M666 518v17M701 518v17M736 518v17M774 518v17M795 518v17M823 518v17M862 518v17M899 518v17M922 518v17M943 518v17M967 518v17M998 518v17M1031 518v17M1063 518v17M1094 518v17M1124 518v17M1147 518v17M1168 518v17M234 534h916M261 535v19M278 535v19M314 535v19M350 535v19M383 535v19M400 535v19M430 535v19M459 535v19M488 535v19M518 535v19M548 535v19M580 535v19M615 535v19M636 535v19M664 535v19M686 535v19M710 535v19M738 535v19M762 535v19M801 535v19M832 535v19M858 535v19M895 535v19M933 535v19M964 535v19M1002 535v19M1037 535v19M1056 535v19M1078 535v19M1105 535v19M1140 535v19M1168 535v19M234 553h916M262 554v24M294 554v24M321 554v24M345 554v24M376 554v24M395 554v24M424 554v24M462 554v24M493 554v24M529 554v24M559 554v24M596 554v24M628 554v24M648 554v24M684 554v24M702 554v24M727 554v24M744 554v24M781 554v24M814 554v24M847 554v24M871 554v24M902 554v24M934 554v24M953 554v24M986 554v24M1014 554v24M1047 554v24M1084 554v24M1104 554v24M1129 554v24M1163 554v24M234 577h916M264 578v23M285 578v23M320 578v23M340 578v23M373 578v23M405 578v23M423 578v23M461 578v23M499 578v23M517 578v23M534 578v23M551 578v23M584 578v23M611 578v23M648 578v23M670 578v23M693 578v23M730 578v23M763 578v23M785 578v23M811 578v23M837 578v23M866 578v23M904 578v23M938 578v23M970 578v23M1005 578v23M1026 578v23M1059 578v23M1096 578v23M1120 578v23M1139 578v23M1168 578v23M234 600h916M271 601v25M308 601v25M328 601v25M351 601v25M380 601v25M402 601v25M435 601v25M457 601v25M479 601v25M510 601v25M549 601v25M568 601v25M605 601v25M630 601v25M659 601v25M689 601v25M724 601v25M743 601v25M779 601v25M803 601v25M830 601v25M860 601v25M883 601v25M901 601v25M923 601v25M953 601v25M970 601v25M990 601v25M1025 601v25M1047 601v25M1078 601v25M1117 601v25M1149 601v25M234 625h916" stroke="#f9f9f9" stroke-width="2.2" fill="none"/></g></g><g clip-path="url(#u2)"><g transform="rotate(30 1071 192)"><path d="M788 -96h19v5h-19zM768 -105h37v4h-37zM792 -109h3v18h-3zM834 -102h4v9h-4zM818 -103h31v3h-31zM878 -111h5v18h-5zM890 -111h13v4h-13zM922 -97h15v5h-15zM982 -108h4v19h-4zM972 -102h4v8h-4zM998 -101h4v8h-4zM996 -101h15v3h-15zM996 -110h5v20h-5zM1024 -105h20v3h-20zM1028 -99h13v3h-13zM1052 -92h37v3h-37zM1094 -110h37v5h-37zM1130 -112h5v13h-5zM1104 -100h6v8h-6zM1138 -112h27v5h-27zM1148 -105h4v15h-4zM1142 -108h23v4h-23zM1198 -108h6v9h-6zM1186 -107h4v9h-4zM1220 -110h6v19h-6zM1238 -103h15v3h-15zM1244 -94h10v3h-10zM1272 -101h22v5h-22zM1266 -101h15v5h-15zM1312 -101h12v5h-12zM1340 -109h3v11h-3zM1356 -93h13v3h-13zM1340 -100h18v5h-18zM1386 -107h3v13h-3zM1384 -109h6v17h-6zM780 -82h5v18h-5zM784 -85h5v11h-5zM802 -71h17v3h-17zM804 -77h23v5h-23zM812 -71h13v3h-13zM852 -80h28v4h-28zM856 -79h6v10h-6zM922 -74h16v5h-16zM922 -82h20v5h-20zM926 -75h5v8h-5zM960 -77h16v3h-16zM1004 -65h22v3h-22zM1044 -75h5v13h-5zM1088 -67h15v5h-15zM1088 -77h15v3h-15zM1086 -74h5v10h-5zM1114 -80h14v3h-14zM1112 -80h13v3h-13zM1154 -78h20v3h-20zM1150 -76h27v3h-27zM1156 -85h5v13h-5zM1182 -78h13v4h-13zM1188 -70h3v8h-3zM1206 -83h16v5h-16zM1240 -85h4v20h-4zM1234 -82h30v3h-30zM1228 -82h6v19h-6zM1276 -82h27v4h-27zM1314 -81h18v3h-18zM1318 -84h26v3h-26zM1318 -81h21v5h-21zM788 -55h5v13h-5zM786 -53h3v11h-3zM806 -57h27v3h-27zM802 -45h21v4h-21zM834 -57h4v12h-4zM856 -53h13v5h-13zM868 -55h6v8h-6zM890 -58h5v14h-5zM876 -52h6v9h-6zM880 -58h6v11h-6zM906 -57h3v12h-3zM934 -50h4v8h-4zM906 -47h10v3h-10zM954 -56h5v12h-5zM1006 -54h3v9h-3zM1000 -58h6v13h-6zM1014 -55h6v14h-6zM1046 -56h4v12h-4zM1044 -57h3v9h-3zM1090 -54h6v13h-6zM1112 -58h4v14h-4zM1144 -56h6v11h-6zM1152 -51h4v8h-4zM1216 -52h10v3h-10zM1206 -52h6v9h-6zM1208 -53h21v4h-21zM1322 -58h6v14h-6zM1346 -55h4v11h-4zM1322 -52h13v5h-13zM1368 -46h10v3h-10zM776 -35h6v10h-6zM768 -31h17v4h-17zM774 -31h14v4h-14zM832 -31h6v8h-6zM812 -32h6v10h-6zM876 -36h3v12h-3zM856 -34h13v4h-13zM876 -34h3v10h-3zM904 -34h4v12h-4zM900 -37h6v9h-6zM894 -31h3v9h-3zM920 -27h18v5h-18zM962 -30h5v8h-5zM1002 -32h6v9h-6zM1012 -36h4v11h-4zM1026 -27h29v3h-29zM1024 -35h3v11h-3zM1026 -35h6v10h-6zM1068 -35h18v4h-18zM1116 -32h6v9h-6zM1148 -35h6v12h-6zM1150 -36h3v9h-3zM1148 -37h11v5h-11zM1190 -32h3v9h-3zM1192 -33h3v11h-3zM1230 -36h27v5h-27zM1284 -32h3v8h-3zM1266 -34h28v4h-28zM1278 -34h5v12h-5zM1298 -35h13v3h-13zM1302 -37h10v4h-10zM1300 -33h5v10h-5zM1324 -28h13v5h-13zM1340 -33h4v11h-4zM1324 -36h20v4h-20zM1354 -35h6v9h-6zM774 -5h32v5h-32zM820 -17h6v12h-6zM866 -14h5v13h-5zM858 -18h17v3h-17zM886 -16h4v14h-4zM950 -3h10v3h-10zM980 -13h27v4h-27zM1028 -16h4v8h-4zM1064 -11h6v9h-6zM1046 -12h34v3h-34zM1070 -7h16v4h-16zM1116 -5h13v5h-13zM1124 -16h4v16h-4zM1120 -16h5v11h-5zM1142 -13h12v3h-12zM1142 -10h10v3h-10zM1150 -12h6v12h-6zM1170 -9h19v5h-19zM1186 -13h3v11h-3zM1194 -16h15v4h-15zM1232 -13h14v3h-14zM1246 -15h4v13h-4zM1230 -12h17v4h-17zM1264 -6h10v3h-10zM1312 -14h4v13h-4zM1310 -18h6v14h-6zM1314 -17h10v5h-10zM1332 -6h16v5h-16zM1340 -9h16v4h-16zM1336 -13h4v13h-4zM1360 -13h34v4h-34zM780 5h18v4h-18zM786 15h5v8h-5zM770 11h29v4h-29zM828 9h4v12h-4zM814 13h6v9h-6zM852 6h5v10h-5zM896 6h12v3h-12zM888 6h25v3h-25zM942 7h5v15h-5zM922 15h29v3h-29zM922 9h28v5h-28zM966 12h6v10h-6zM972 18h11v3h-11zM974 8h3v12h-3zM990 14h4v10h-4zM990 19h16v4h-16zM996 9h13v4h-13zM1064 16h22v5h-22zM1066 12h6v12h-6zM1096 15h14v5h-14zM1120 8h6v10h-6zM1116 5h6v10h-6zM1164 8h6v16h-6zM1134 17h38v5h-38zM1178 12h17v4h-17zM1248 17h18v3h-18zM1258 8h5v9h-5zM1262 6h5v12h-5zM1292 10h11v3h-11zM1312 9h15v5h-15zM1310 18h20v3h-20zM1312 21h14v3h-14zM778 28h4v16h-4zM802 39h16v5h-16zM796 41h19v5h-19zM826 30h6v10h-6zM826 32h11v3h-11zM824 36h29v3h-29zM862 31h18v3h-18zM890 44h4v8h-4zM888 28h4v21h-4zM900 40h6v12h-6zM936 33h6v9h-6zM936 46h30v4h-30zM954 48h16v4h-16zM992 29h4v21h-4zM978 48h25v3h-25zM974 34h28v5h-28zM1022 28h6v16h-6zM1056 48h16v3h-16zM1084 35h16v4h-16zM1096 44h11v4h-11zM1174 32h6v10h-6zM1200 32h13v3h-13zM1226 41h21v5h-21zM1252 38h13v5h-13zM1258 34h3v14h-3zM1278 43h18v3h-18zM1292 33h4v16h-4zM1304 34h35v5h-35zM1308 33h10v5h-10zM1346 31h3v10h-3zM1362 35h10v4h-10zM1380 39h14v5h-14zM776 57h20v5h-20zM824 58h5v19h-5zM836 68h18v5h-18zM864 57h11v3h-11zM868 58h6v11h-6zM864 57h5v19h-5zM892 62h17v3h-17zM886 70h16v5h-16zM888 69h17v5h-17zM930 58h3v21h-3zM914 64h18v4h-18zM918 76h21v3h-21zM958 58h3v17h-3zM988 61h20v4h-20zM986 65h28v4h-28zM996 71h3v9h-3zM1022 56h6v20h-6zM1070 65h6v15h-6zM1116 57h15v5h-15zM1126 66h4v11h-4zM1114 57h6v11h-6zM1140 65h4v15h-4zM1138 64h20v5h-20zM1204 68h4v9h-4zM1178 62h30v4h-30zM1170 62h35v4h-35zM1220 58h3v20h-3zM1214 64h19v3h-19zM1222 63h19v4h-19zM1244 75h16v4h-16zM1250 77h10v3h-10zM1270 56h4v18h-4zM1326 69h17v5h-17zM818 84h6v13h-6zM850 88h3v9h-3zM846 91h15v5h-15zM872 89h22v4h-22zM910 86h6v10h-6zM930 87h4v11h-4zM912 97h15v3h-15zM942 95h15v3h-15zM964 88h6v8h-6zM976 88h6v12h-6zM966 93h22v3h-22zM1030 88h13v3h-13zM1082 88h5v8h-5zM1112 84h5v13h-5zM1104 88h12v4h-12zM1102 91h12v4h-12zM1126 84h5v13h-5zM1134 87h11v5h-11zM1230 87h3v13h-3zM1218 84h6v12h-6zM1250 86h23v3h-23zM1246 89h10v4h-10zM1278 88h21v5h-21zM1280 91h13v4h-13zM1278 97h19v3h-19zM1352 85h12v5h-12zM1350 90h20v3h-20zM1352 86h13v4h-13zM1378 87h6v11h-6zM1380 94h13v5h-13zM810 105h5v20h-5zM844 104h6v11h-6zM840 113h25v4h-25zM880 106h6v17h-6zM918 112h5v8h-5zM916 105h5v14h-5zM936 114h6v9h-6zM948 112h17v3h-17zM956 116h14v5h-14zM952 107h17v4h-17zM974 106h4v8h-4zM976 121h16v3h-16zM988 119h19v5h-19zM1080 113h4v12h-4zM1100 106h3v14h-3zM1106 106h4v19h-4zM1108 119h10v5h-10zM1122 110h27v5h-27zM1138 114h6v11h-6zM1138 110h4v14h-4zM1158 109h3v9h-3zM1162 104h16v3h-16zM1182 124h28v3h-28zM1256 110h3v11h-3zM1258 107h15v5h-15zM1290 106h5v17h-5zM1280 105h12v5h-12zM1284 122h14v4h-14zM1316 105h6v12h-6zM1312 106h18v5h-18zM1338 109h17v3h-17zM1336 107h5v12h-5zM1342 104h6v11h-6zM1394 104h6v20h-6zM1378 108h5v19h-5zM1364 107h5v19h-5zM768 135h21v4h-21zM812 141h27v5h-27zM836 134h5v12h-5zM858 131h17v5h-17zM912 131h6v12h-6zM960 133h4v12h-4zM924 134h32v3h-32zM948 131h3v9h-3zM1016 142h20v3h-20zM1056 136h13v3h-13zM1058 137h13v3h-13zM1064 133h6v11h-6zM1088 132h5v11h-5zM1094 131h4v8h-4zM1080 133h5v8h-5zM1150 135h3v11h-3zM1136 133h6v12h-6zM1170 133h6v10h-6zM1198 134h20v3h-20zM1228 142h15v3h-15zM1224 134h14v4h-14zM1262 135h25v3h-25zM1270 136h3v9h-3zM1306 135h19v4h-19zM1308 133h5v9h-5zM1312 134h5v12h-5zM1330 139h15v3h-15zM1376 142h11v4h-11zM1364 132h6v8h-6zM780 152h3v11h-3zM778 157h4v8h-4zM770 150h4v12h-4zM820 151h4v9h-4zM838 155h6v9h-6zM842 157h5v8h-5zM860 155h6v8h-6zM858 157h4v8h-4zM894 153h35v4h-35zM946 153h6v9h-6zM938 153h12v5h-12zM952 150h5v9h-5zM968 156h6v9h-6zM966 154h6v9h-6zM984 159h27v4h-27zM1040 151h3v10h-3zM1030 159h26v3h-26zM1094 150h5v8h-5zM1086 153h3v12h-3zM1082 150h24v3h-24zM1116 160h19v3h-19zM1118 160h11v5h-11zM1134 153h5v11h-5zM1176 152h3v8h-3zM1210 150h6v12h-6zM1198 155h4v10h-4zM1238 151h16v3h-16zM1234 151h23v4h-23zM1272 152h19v4h-19zM1270 150h21v5h-21zM1264 160h17v3h-17zM1306 151h16v3h-16zM1300 158h16v4h-16zM1346 151h5v8h-5zM1366 151h5v8h-5zM1382 153h4v8h-4zM774 174h6v9h-6zM768 172h6v10h-6zM828 179h20v3h-20zM862 171h15v4h-15zM878 170h5v9h-5zM930 171h12v3h-12zM932 172h5v8h-5zM946 177h16v5h-16zM982 178h11v5h-11zM976 180h16v3h-16zM988 175h13v5h-13zM1026 171h4v11h-4zM1018 176h28v3h-28zM1050 173h14v5h-14zM1078 173h6v10h-6zM1092 170h3v11h-3zM1088 174h19v5h-19zM1116 172h5v9h-5zM1114 172h15v5h-15zM1112 171h37v4h-37zM1160 169h5v10h-5zM1158 177h11v5h-11zM1160 169h11v3h-11zM1200 171h12v5h-12zM1224 176h13v4h-13zM1264 171h4v11h-4zM1292 169h6v10h-6zM1312 170h6v9h-6zM1356 171h31v5h-31zM1376 173h12v3h-12zM1366 174h6v8h-6zM772 194h19v4h-19zM808 189h4v8h-4zM838 192h6v9h-6zM830 191h13v4h-13zM876 190h6v9h-6zM850 188h5v11h-5zM864 187h6v9h-6zM916 189h6v10h-6zM904 194h27v4h-27zM908 191h4v8h-4zM942 189h14v5h-14zM940 190h19v3h-19zM944 196h16v5h-16zM970 198h11v3h-11zM998 198h20v3h-20zM1000 198h16v3h-16zM992 190h5v8h-5zM1022 192h21v5h-21zM1034 187h3v10h-3zM1032 197h13v4h-13zM1056 195h24v4h-24zM1094 189h5v11h-5zM1058 189h35v4h-35zM1114 190h27v3h-27zM1148 194h21v3h-21zM1160 192h18v5h-18zM1190 190h10v4h-10zM1186 195h13v3h-13zM1206 190h24v5h-24zM1256 191h3v9h-3zM1266 191h3v10h-3zM1312 190h10v4h-10zM1316 192h5v8h-5zM1354 192h4v8h-4zM834 213h4v9h-4zM860 206h6v18h-6zM880 209h5v18h-5zM918 205h4v16h-4zM908 205h3v15h-3zM900 206h16v3h-16zM936 208h3v17h-3zM942 207h20v4h-20zM972 216h29v3h-29zM1030 209h4v13h-4zM1016 219h22v3h-22zM1042 220h11v4h-11zM1062 207h21v3h-21zM1112 205h6v9h-6zM1090 207h24v3h-24zM1126 205h6v18h-6zM1124 206h6v19h-6zM1178 207h11v4h-11zM1164 207h5v19h-5zM1154 216h4v8h-4zM1212 206h6v18h-6zM1238 223h13v4h-13zM1238 209h11v4h-11zM1260 206h18v5h-18zM1264 206h18v4h-18zM1298 208h18v5h-18zM1298 205h22v4h-22zM1340 208h6v13h-6zM1324 219h18v4h-18zM1350 212h12v5h-12zM1352 207h5v16h-5zM1354 220h11v4h-11zM1376 207h3v18h-3zM1370 220h38v3h-38zM1376 212h6v12h-6zM776 242h10v3h-10zM798 234h10v5h-10zM794 231h5v9h-5zM836 239h16v3h-16zM834 237h5v16h-5zM864 232h18v4h-18zM862 241h11v4h-11zM892 245h15v3h-15zM902 238h4v9h-4zM918 236h5v18h-5zM914 239h19v5h-19zM912 235h6v16h-6zM956 232h4v20h-4zM978 238h3v14h-3zM976 241h5v11h-5zM984 231h12v5h-12zM1010 231h5v13h-5zM1062 231h5v18h-5zM1038 247h18v3h-18zM1028 233h15v5h-15zM1082 234h3v10h-3zM1094 233h6v17h-6zM1078 232h5v20h-5zM1116 235h20v3h-20zM1128 234h6v19h-6zM1116 243h26v3h-26zM1162 235h3v8h-3zM1166 234h10v3h-10zM1222 233h5v9h-5zM1266 233h4v10h-4zM1284 234h6v11h-6zM1322 237h5v16h-5zM1310 237h4v9h-4zM1346 245h15v4h-15zM1348 241h13v5h-13zM1338 234h29v5h-29zM1378 247h12v5h-12zM772 264h6v10h-6zM784 267h24v3h-24zM772 258h6v12h-6zM828 259h3v11h-3zM818 264h16v4h-16zM860 260h19v5h-19zM862 268h22v3h-22zM898 259h6v12h-6zM902 266h6v8h-6zM928 264h4v10h-4zM970 261h11v4h-11zM968 261h6v10h-6zM1012 261h3v10h-3zM990 259h3v12h-3zM1070 260h5v8h-5zM1060 258h5v11h-5zM1086 262h11v5h-11zM1104 260h12v3h-12zM1138 258h4v9h-4zM1150 259h6v12h-6zM1138 258h13v5h-13zM1162 269h33v3h-33zM1180 267h19v5h-19zM1164 263h19v4h-19zM1206 268h20v5h-20zM1300 262h23v3h-23zM1294 258h3v9h-3zM1298 262h20v5h-20zM1352 258h4v11h-4zM1356 262h6v8h-6zM1376 264h5v8h-5zM1382 260h3v13h-3zM1382 265h4v9h-4zM794 280h3v9h-3zM774 283h19v3h-19zM832 279h6v9h-6zM816 286h17v3h-17zM858 283h14v5h-14zM876 281h18v3h-18zM880 280h6v9h-6zM910 279h5v9h-5zM932 279h3v8h-3zM924 278h14v3h-14zM954 280h25v4h-25zM962 281h6v8h-6zM986 280h29v4h-29zM986 280h3v9h-3zM994 280h5v9h-5zM1064 279h5v8h-5zM1048 279h3v9h-3zM1082 281h24v5h-24zM1118 281h15v4h-15zM1130 279h3v9h-3zM1180 280h4v8h-4zM1150 279h34v5h-34zM1168 281h3v8h-3zM1302 278h25v5h-25zM1310 278h6v8h-6zM1338 283h14v4h-14zM1336 280h29v4h-29zM1386 282h23v4h-23zM1382 282h28v5h-28zM1384 284h19v5h-19zM770 301h17v3h-17zM772 314h10v3h-10zM776 293h3v10h-3zM804 301h6v11h-6zM802 314h12v4h-12zM828 313h18v5h-18zM844 299h4v8h-4zM822 309h25v4h-25zM862 295h31v3h-31zM910 294h6v17h-6zM910 296h14v5h-14zM904 299h6v14h-6zM932 307h24v4h-24zM972 311h10v4h-10zM968 311h21v3h-21zM996 295h3v16h-3zM998 311h10v5h-10zM1020 296h5v21h-5zM1080 294h3v11h-3zM1074 312h15v3h-15zM1072 309h18v4h-18zM1112 301h13v4h-13zM1104 294h6v20h-6zM1102 296h27v4h-27zM1146 297h6v19h-6zM1178 304h20v5h-20zM1192 302h3v16h-3zM1212 294h5v22h-5zM1216 296h5v20h-5zM1246 313h31v5h-31zM1294 294h5v20h-5zM1296 300h23v3h-23zM1326 312h13v4h-13zM768 338h15v3h-15zM776 335h13v5h-13zM776 325h5v19h-5zM820 323h6v15h-6zM792 340h15v3h-15zM794 325h3v15h-3zM844 341h28v4h-28zM850 326h3v15h-3zM868 323h4v13h-4zM880 329h31v5h-31zM894 328h6v18h-6zM906 326h6v19h-6zM918 339h14v4h-14zM948 334h11v4h-11zM968 334h32v5h-32zM998 323h4v9h-4zM966 322h5v21h-5zM1014 333h5v13h-5zM1018 329h26v4h-26zM1026 332h6v9h-6zM1068 323h10v4h-10zM1100 325h4v16h-4zM1092 330h5v8h-5zM1124 328h11v3h-11zM1140 328h3v13h-3zM1156 336h21v4h-21zM1182 328h6v9h-6zM1208 330h10v3h-10zM1198 331h3v8h-3zM1228 342h29v3h-29zM1242 333h3v13h-3zM1238 322h5v8h-5zM1288 322h5v20h-5zM1284 327h17v5h-17zM1316 334h22v4h-22zM1308 325h6v18h-6zM1350 325h4v20h-4zM1370 325h5v15h-5zM1342 325h22v4h-22zM768 362h25v5h-25zM816 355h4v9h-4zM836 351h5v11h-5zM828 357h15v5h-15zM830 351h5v10h-5zM858 351h6v9h-6zM890 350h5v10h-5zM894 353h6v10h-6zM906 355h17v5h-17zM908 358h16v4h-16zM908 350h14v4h-14zM934 352h21v4h-21zM948 351h3v14h-3zM932 352h4v11h-4zM978 354h5v9h-5zM1014 353h6v14h-6zM1046 352h12v3h-12zM1082 355h3v11h-3zM1106 355h3v11h-3zM1100 364h17v4h-17zM1096 355h3v8h-3zM1138 351h4v15h-4zM1122 354h23v4h-23zM1166 364h11v3h-11zM1154 358h19v3h-19zM1160 353h19v5h-19zM1190 360h25v3h-25zM1226 360h15v3h-15zM1242 357h5v8h-5zM1234 365h17v3h-17zM1258 359h28v5h-28zM1260 354h10v3h-10zM1268 362h15v5h-15zM1312 351h5v15h-5zM1342 360h21v3h-21zM1340 355h17v3h-17zM1346 354h14v4h-14zM1378 353h12v5h-12zM1376 352h22v3h-22zM768 384h17v5h-17zM778 378h6v11h-6zM802 372h27v4h-27zM800 381h10v3h-10zM844 376h6v14h-6zM846 374h5v20h-5zM840 389h31v4h-31zM896 372h6v11h-6zM886 380h18v5h-18zM880 376h26v4h-26zM928 378h6v9h-6zM952 377h4v18h-4zM984 384h18v3h-18zM1026 376h5v15h-5zM1036 373h13v3h-13zM1038 383h4v9h-4zM1054 382h11v5h-11zM1100 378h3v13h-3zM1174 374h11v4h-11zM1158 392h29v3h-29zM1176 375h4v14h-4zM1194 387h34v3h-34zM1210 391h13v3h-13zM1208 375h3v18h-3zM1242 378h13v3h-13zM1272 378h10v4h-10zM1298 380h23v3h-23zM1296 388h13v5h-13zM1338 373h19v5h-19zM1334 372h5v15h-5zM1332 384h35v5h-35zM1372 377h5v14h-5zM1376 375h6v9h-6zM824 399h32v5h-32zM890 403h3v19h-3zM918 413h32v5h-32zM912 406h5v14h-5zM972 408h4v9h-4zM1022 411h4v11h-4zM1002 410h21v4h-21zM1002 404h6v11h-6zM1046 409h15v3h-15zM1038 417h15v4h-15zM1046 403h4v20h-4zM1072 401h22v3h-22zM1070 402h3v20h-3zM1076 406h20v5h-20zM1126 403h6v17h-6zM1110 418h15v4h-15zM1160 408h3v14h-3zM1148 419h27v4h-27zM1144 412h31v5h-31zM1188 401h13v4h-13zM1190 408h4v14h-4zM1238 409h5v8h-5zM1226 400h11v5h-11zM1264 399h6v18h-6zM1302 408h5v12h-5zM1332 402h23v3h-23zM1338 404h4v9h-4zM1370 400h6v21h-6zM768 434h19v5h-19zM814 430h4v8h-4zM808 431h12v3h-12zM836 431h16v3h-16zM838 429h3v8h-3zM870 429h6v8h-6zM900 431h6v8h-6zM910 435h24v3h-24zM900 432h11v3h-11zM982 428h5v8h-5zM1012 430h6v9h-6zM1000 430h21v4h-21zM996 433h22v3h-22zM1030 429h13v5h-13zM1038 429h4v8h-4zM1062 430h24v4h-24zM1098 429h5v8h-5zM1098 432h12v3h-12zM1122 428h3v8h-3zM1136 427h6v8h-6zM1122 431h36v3h-36zM1178 429h4v9h-4zM1178 428h4v8h-4zM1242 428h16v4h-16zM1294 433h10v4h-10zM1270 429h6v9h-6zM1310 429h3v8h-3zM1318 434h29v4h-29zM1318 431h27v3h-27zM782 451h3v8h-3zM778 446h3v15h-3zM778 464h24v4h-24zM812 445h26v4h-26zM814 464h12v4h-12zM852 443h13v3h-13zM892 452h12v4h-12zM908 455h6v9h-6zM894 466h10v3h-10zM946 446h4v8h-4zM936 447h4v17h-4zM922 460h30v5h-30zM1014 446h6v13h-6zM1034 449h20v4h-20zM1034 457h21v3h-21zM1098 459h13v4h-13zM1110 443h3v9h-3zM1092 463h19v4h-19zM1132 443h6v10h-6zM1164 451h4v15h-4zM1174 444h4v16h-4zM1190 446h3v10h-3zM1192 455h11v4h-11zM1194 449h6v15h-6zM1236 461h11v5h-11zM1266 466h29v3h-29zM1274 450h5v14h-5zM1332 444h4v23h-4zM1304 464h13v3h-13zM1306 444h13v3h-13zM1350 451h23v4h-23zM1346 447h32v5h-32zM1344 456h38v3h-38zM784 473h3v9h-3zM786 480h12v3h-12zM840 475h22v4h-22zM870 474h5v8h-5zM916 476h5v9h-5zM906 480h14v5h-14zM958 476h17v5h-17zM988 474h6v9h-6zM988 478h10v4h-10zM982 475h3v8h-3zM1020 475h18v3h-18zM1006 476h16v5h-16zM1014 473h13v4h-13zM1044 480h20v3h-20zM1052 473h4v9h-4zM1046 473h15v5h-15zM1082 473h3v9h-3zM1090 474h3v8h-3zM1104 473h14v4h-14zM1104 477h12v4h-12zM1128 480h22v4h-22zM1184 473h5v9h-5zM1174 476h3v9h-3zM1172 474h5v9h-5zM1202 479h11v4h-11zM1252 474h5v8h-5zM1228 478h21v3h-21zM1280 478h14v3h-14zM1292 477h3v8h-3zM1318 475h4v8h-4zM1306 476h4v9h-4zM1340 473h5v9h-5zM1338 481h12v4h-12zM1358 480h15v3h-15zM1364 474h5v8h-5zM1360 479h27v4h-27zM782 496h5v10h-5zM802 492h4v15h-4zM770 497h29v4h-29zM846 506h20v4h-20zM850 495h19v4h-19zM864 494h6v11h-6zM880 491h5v10h-5zM918 497h13v4h-13zM904 491h3v16h-3zM940 489h3v13h-3zM950 502h14v4h-14zM954 499h17v4h-17zM986 494h3v15h-3zM980 501h18v5h-18zM978 490h14v5h-14zM1030 491h3v15h-3zM1072 494h6v8h-6zM1066 494h5v15h-5zM1108 491h4v18h-4zM1106 498h11v5h-11zM1112 493h10v3h-10zM1138 489h5v16h-5zM1132 499h11v5h-11zM1138 491h4v15h-4zM1152 503h26v4h-26zM1150 493h12v3h-12zM1200 492h6v10h-6zM1188 491h17v5h-17zM1184 491h11v4h-11zM1214 496h27v3h-27zM1210 496h27v5h-27zM1266 500h6v10h-6zM1252 492h17v3h-17zM1258 496h6v11h-6zM1280 493h17v3h-17zM1320 492h10v5h-10zM1326 496h5v12h-5zM1318 490h4v12h-4zM1372 493h3v8h-3zM1334 498h6v12h-6zM1362 494h4v16h-4z" fill="#e0e0e2"/><path d="M812 -113v27M852 -113v27M886 -113v27M910 -113v27M958 -113v27M992 -113v27M1016 -113v27M1044 -113v27M1090 -113v27M1136 -113v27M1172 -113v27M1208 -113v27M1232 -113v27M1258 -113v27M1296 -113v27M1334 -113v27M1370 -113v27M1412 -113v27M766 -87h609M792 -86v27M834 -86v27M880 -86v27M918 -86v27M952 -86v27M994 -86v27M1036 -86v27M1058 -86v27M1084 -86v27M1108 -86v27M1132 -86v27M1178 -86v27M1200 -86v27M1224 -86v27M1268 -86v27M1310 -86v27M1346 -86v27M1390 -86v27M766 -60h609M798 -59v21M846 -59v21M874 -59v21M904 -59v21M940 -59v21M966 -59v21M1010 -59v21M1034 -59v21M1062 -59v21M1106 -59v21M1132 -59v21M1158 -59v21M1202 -59v21M1234 -59v21M1274 -59v21M1316 -59v21M1358 -59v21M1392 -59v21M766 -39h609M796 -38v19M842 -38v19M884 -38v19M910 -38v19M942 -38v19M988 -38v19M1016 -38v19M1058 -38v19M1104 -38v19M1142 -38v19M1184 -38v19M1216 -38v19M1260 -38v19M1296 -38v19M1316 -38v19M1348 -38v19M1386 -38v19M766 -20h609M810 -19v23M848 -19v23M880 -19v23M904 -19v23M942 -19v23M972 -19v23M1012 -19v23M1044 -19v23M1092 -19v23M1134 -19v23M1158 -19v23M1190 -19v23M1226 -19v23M1252 -19v23M1296 -19v23M1326 -19v23M1356 -19v23M1400 -19v23M766 3h609M812 4v23M840 4v23M878 4v23M918 4v23M954 4v23M986 4v23M1012 4v23M1054 4v23M1086 4v23M1128 4v23M1174 4v23M1208 4v23M1240 4v23M1276 4v23M1308 4v23M1338 4v23M1382 4v23M766 26h609M792 27v28M820 27v28M858 27v28M886 27v28M924 27v28M972 27v28M1010 27v28M1052 27v28M1076 27v28M1108 27v28M1152 27v28M1182 27v28M1216 27v28M1248 27v28M1270 27v28M1298 27v28M1344 27v28M1374 27v28M1402 27v28M766 54h609M798 55v28M832 55v28M860 55v28M884 55v28M912 55v28M944 55v28M972 55v28M1018 55v28M1066 55v28M1110 55v28M1136 55v28M1164 55v28M1210 55v28M1242 55v28M1266 55v28M1308 55v28M1350 55v28M1374 55v28M766 82h609M796 83v20M830 83v20M868 83v20M904 83v20M936 83v20M960 83v20M1000 83v20M1028 83v20M1048 83v20M1090 83v20M1122 83v20M1154 83v20M1200 83v20M1242 83v20M1276 83v20M1304 83v20M1344 83v20M1374 83v20M1396 83v20M766 102h609M800 103v27M826 103v27M868 103v27M908 103v27M946 103v27M972 103v27M1008 103v27M1052 103v27M1094 103v27M1118 103v27M1154 103v27M1180 103v27M1218 103v27M1246 103v27M1276 103v27M1302 103v27M1332 103v27M1356 103v27M1404 103v27M766 129h609M802 130v19M844 130v19M888 130v19M920 130v19M966 130v19M1012 130v19M1054 130v19M1076 130v19M1102 130v19M1132 130v19M1156 130v19M1190 130v19M1220 130v19M1250 130v19M1296 130v19M1328 130v19M1350 130v19M1390 130v19M766 148h609M792 149v19M830 149v19M850 149v19M888 149v19M932 149v19M958 149v19M982 149v19M1028 149v19M1074 149v19M1114 149v19M1142 149v19M1188 149v19M1230 149v19M1262 149v19M1292 149v19M1324 149v19M1360 149v19M1394 149v19M766 167h609M790 168v18M816 168v18M860 168v18M894 168v18M942 168v18M970 168v18M1004 168v18M1046 168v18M1070 168v18M1108 168v18M1156 168v18M1178 168v18M1216 168v18M1240 168v18M1280 168v18M1308 168v18M1352 168v18M1392 168v18M766 185h609M792 186v18M822 186v18M846 186v18M890 186v18M938 186v18M964 186v18M986 186v18M1020 186v18M1052 186v18M1100 186v18M1142 186v18M1180 186v18M1202 186v18M1236 186v18M1260 186v18M1308 186v18M1350 186v18M1384 186v18M766 203h609M812 204v26M846 204v26M868 204v26M898 204v26M928 204v26M968 204v26M1010 204v26M1056 204v26M1086 204v26M1120 204v26M1152 204v26M1196 204v26M1232 204v26M1254 204v26M1288 204v26M1322 204v26M1348 204v26M1368 204v26M1416 204v26M766 229h609M792 230v27M816 230v27M856 230v27M884 230v27M908 230v27M936 230v27M962 230v27M996 230v27M1022 230v27M1068 230v27M1112 230v27M1148 230v27M1182 230v27M1230 230v27M1272 230v27M1304 230v27M1334 230v27M1374 230v27M1398 230v27M766 256h609M810 257v20M846 257v20M890 257v20M918 257v20M938 257v20M964 257v20M986 257v20M1024 257v20M1058 257v20M1098 257v20M1134 257v20M1158 257v20M1200 257v20M1230 257v20M1258 257v20M1292 257v20M1332 257v20M1364 257v20M1396 257v20M766 276h609M802 277v15M850 277v15M872 277v15M906 277v15M946 277v15M980 277v15M1024 277v15M1072 277v15M1112 277v15M1144 277v15M1186 277v15M1230 277v15M1266 277v15M1292 277v15M1330 277v15M1374 277v15M1414 277v15M766 291h609M792 292v29M816 292v29M852 292v29M900 292v29M924 292v29M960 292v29M990 292v29M1018 292v29M1060 292v29M1096 292v29M1138 292v29M1168 292v29M1200 292v29M1244 292v29M1288 292v29M1324 292v29M1350 292v29M1396 292v29M766 320h609M790 321v28M834 321v28M874 321v28M914 321v28M940 321v28M962 321v28M1010 321v28M1054 321v28M1080 321v28M1112 321v28M1144 321v28M1192 321v28M1220 321v28M1262 321v28M1306 321v28M1338 321v28M1376 321v28M766 348h609M798 349v22M820 349v22M854 349v22M876 349v22M902 349v22M930 349v22M964 349v22M996 349v22M1032 349v22M1062 349v22M1092 349v22M1118 349v22M1152 349v22M1180 349v22M1222 349v22M1252 349v22M1292 349v22M1334 349v22M1366 349v22M1404 349v22M766 370h609M796 371v27M832 371v27M872 371v27M912 371v27M946 371v27M974 371v27M1002 371v27M1034 371v27M1074 371v27M1114 371v27M1154 371v27M1192 371v27M1236 371v27M1270 371v27M1292 371v27M1322 371v27M1368 371v27M1388 371v27M766 397h609M790 398v28M818 398v28M862 398v28M910 398v28M954 398v28M998 398v28M1030 398v28M1064 398v28M1100 398v28M1140 398v28M1186 398v28M1216 398v28M1260 398v28M1284 398v28M1318 398v28M1358 398v28M1382 398v28M766 425h609M794 426v16M830 426v16M854 426v16M896 426v16M936 426v16M962 426v16M994 426v16M1024 426v16M1048 426v16M1092 426v16M1114 426v16M1162 426v16M1184 426v16M1232 426v16M1264 426v16M1308 426v16M1352 426v16M1400 426v16M766 441h609M810 442v30M848 442v30M880 442v30M920 442v30M964 442v30M1000 442v30M1032 442v30M1060 442v30M1088 442v30M1116 442v30M1158 442v30M1184 442v30M1212 442v30M1254 442v30M1302 442v30M1340 442v30M1388 442v30M766 471h609M800 472v16M832 472v16M864 472v16M896 472v16M942 472v16M978 472v16M1000 472v16M1038 472v16M1070 472v16M1098 472v16M1120 472v16M1154 472v16M1198 472v16M1224 472v16M1268 472v16M1296 472v16M1334 472v16M1356 472v16M1398 472v16M766 487h609M808 488v25M844 488v25M872 488v25M902 488v25M948 488v25M974 488v25M1016 488v25M1054 488v25M1080 488v25M1104 488v25M1126 488v25M1146 488v25M1182 488v25M1208 488v25M1248 488v25M1274 488v25M1308 488v25M1332 488v25M1376 488v25M766 512h609" stroke="#f9f9f9" stroke-width="1.8" fill="none"/></g></g><g clip-path="url(#u3)"><g transform="rotate(2 1224 16)"><path d="M1182 -52h26v3h-26zM1194 -52h6v9h-6zM1196 -52h5v9h-5zM1278 -36h5v9h-5zM1278 -36h11v5h-11zM1268 -36h15v4h-15zM1196 -20h27v3h-27zM1200 -22h4v8h-4zM1200 -22h13v3h-13zM1292 -22h23v4h-23zM1316 -22h3v9h-3zM1188 -14h22v5h-22zM1298 -14h5v8h-5zM1284 -14h5v8h-5zM1284 -14h5v8h-5zM1210 -4h15v5h-15zM1202 -4h17v3h-17zM1208 -4h19v3h-19zM1316 -6h6v8h-6zM1300 -4h46v3h-46zM1216 6h12v4h-12zM1208 6h6v8h-6zM1230 18h5v9h-5zM1218 18h5v8h-5zM1176 26h18v5h-18zM1156 26h31v5h-31zM1174 40h11v5h-11zM1164 42h42v3h-42zM1170 40h6v9h-6zM1156 50h20v4h-20zM1156 50h15v3h-15zM1184 50h5v8h-5zM1260 56h19v5h-19zM1258 56h23v5h-23zM1252 58h17v5h-17zM1184 68h19v3h-19zM1156 76h18v3h-18zM1276 82h3v8h-3zM1256 82h3v9h-3z" fill="#e0e0e2"/><path d="M1180 -54v7M1214 -54v7M1262 -54v7M1310 -54v7M1154 -48h138M1208 -46v9M1242 -46v9M1276 -46v9M1318 -46v9M1154 -38h138M1206 -38v9M1264 -38v9M1290 -38v9M1332 -38v9M1154 -30h138M1208 -28v5M1260 -28v5M1304 -28v5M1154 -24h138M1188 -24v9M1228 -24v9M1278 -24v9M1328 -24v9M1154 -16h138M1186 -14v8M1216 -14v8M1252 -14v8M1306 -14v8M1154 -8h138M1192 -6v5M1230 -6v5M1290 -6v5M1348 -6v5M1154 -2h138M1194 -2v5M1246 -2v5M1292 -2v5M1154 2h138M1204 4v7M1262 4v7M1288 4v7M1344 4v7M1154 10h138M1210 10v7M1262 10v7M1302 10v7M1154 16h138M1198 18v7M1242 18v7M1300 18v7M1154 24h138M1196 24v9M1252 24v9M1298 24v9M1154 32h138M1190 34v6M1230 34v6M1286 34v6M1338 34v6M1154 38h138M1208 40v9M1246 40v9M1280 40v9M1306 40v9M1154 48h138M1196 48v7M1252 48v7M1286 48v7M1324 48v7M1154 54h138M1204 56v6M1248 56v6M1284 56v6M1316 56v6M1154 60h138M1200 62v5M1246 62v5M1274 62v5M1302 62v5M1154 66h138M1208 66v8M1260 66v8M1300 66v8M1154 74h138M1190 74v6M1236 74v6M1264 74v6M1302 74v6M1154 80h138M1186 80v6M1244 80v6M1292 80v6M1154 86h138" stroke="#f9f9f9" stroke-width="1.6" fill="none"/></g></g><g clip-path="url(#u4)"><g transform="rotate(25 180 145)"><path d="M441 -151h3v17h-3zM29 -97h34v5h-34zM31 -116h5v24h-5zM311 -124h4v26h-4zM-56 -78h18v5h-18zM-48 -76h10v3h-10zM-56 -63h18v5h-18zM219 -71h39v4h-39zM218 -78h4v26h-4zM239 -86h6v25h-6zM183 -26h4v14h-4zM250 -6h5v13h-5zM262 3h12v3h-12zM233 11h12v3h-12zM-101 23h19v4h-19zM-103 28h6v12h-6zM373 25h5v20h-5zM354 41h29v4h-29zM-56 89h6v18h-6zM187 91h5v20h-5zM169 87h20v5h-20zM404 91h33v5h-33zM-78 156h30v5h-30zM-81 158h30v4h-30zM85 186h6v25h-6zM83 195h11v3h-11zM339 183h6v26h-6zM391 189h6v21h-6zM367 207h23v5h-23zM472 194h5v8h-5zM461 210h55v4h-55zM499 187h5v17h-5zM85 251h37v4h-37zM86 244h14v4h-14zM115 241h3v11h-3zM-81 291h31v5h-31zM-73 293h20v5h-20zM-78 270h21v4h-21zM-84 392h50v4h-50zM-60 381h4v11h-4zM-68 396h37v5h-37zM413 374h3v28h-3zM412 375h5v19h-5zM427 388h6v15h-6zM267 413h6v15h-6zM263 419h4v9h-4zM392 410h4v14h-4zM-98 433h3v12h-3zM-102 437h5v8h-5zM-107 435h19v5h-19z" fill="#e0e0e2"/><path d="M-91 -155v29M-36 -155v29M-6 -155v29M41 -155v29M87 -155v29M118 -155v29M157 -155v29M200 -155v29M238 -155v29M304 -155v29M349 -155v29M396 -155v29M439 -155v29M486 -155v29M-120 -127h600M-81 -126v39M-28 -126v39M4 -126v39M66 -126v39M123 -126v39M177 -126v39M207 -126v39M272 -126v39M316 -126v39M363 -126v39M424 -126v39M480 -126v39M-120 -88h600M-60 -87v38M-30 -87v38M31 -87v38M75 -87v38M127 -87v38M175 -87v38M207 -87v38M262 -87v38M322 -87v38M354 -87v38M403 -87v38M461 -87v38M526 -87v38M-120 -50h600M-74 -49v41M-13 -49v41M28 -49v41M71 -49v41M111 -49v41M148 -49v41M190 -49v41M250 -49v41M281 -49v41M321 -49v41M360 -49v41M395 -49v41M426 -49v41M463 -49v41M505 -49v41M-120 -9h600M-63 -8v30M-34 -8v30M5 -8v30M70 -8v30M114 -8v30M162 -8v30M226 -8v30M278 -8v30M340 -8v30M373 -8v30M431 -8v30M460 -8v30M497 -8v30M-120 21h600M-75 22v27M-38 22v27M-1 22v27M62 22v27M101 22v27M163 22v27M220 22v27M251 22v27M300 22v27M347 22v27M397 22v27M460 22v27M504 22v27M-120 48h600M-70 49v34M-13 49v34M24 49v34M83 49v34M132 49v34M195 49v34M242 49v34M276 49v34M305 49v34M370 49v34M423 49v34M468 49v34M501 49v34M-120 82h600M-69 83v31M-6 83v31M32 83v31M86 83v31M134 83v31M163 83v31M193 83v31M251 83v31M297 83v31M348 83v31M381 83v31M442 83v31M484 83v31M-120 113h600M-61 114v36M2 114v36M32 114v36M75 114v36M138 114v36M181 114v36M224 114v36M289 114v36M319 114v36M382 114v36M440 114v36M473 114v36M508 114v36M-120 149h600M-85 150v32M-44 150v32M-3 150v32M49 150v32M84 150v32M132 150v32M191 150v32M221 150v32M250 150v32M313 150v32M378 150v32M419 150v32M480 150v32M-120 181h600M-64 182v35M-18 182v35M44 182v35M79 182v35M110 182v35M157 182v35M208 182v35M266 182v35M304 182v35M362 182v35M409 182v35M453 182v35M517 182v35M-120 216h600M-61 217v23M-11 217v23M18 217v23M48 217v23M90 217v23M156 217v23M218 217v23M266 217v23M325 217v23M374 217v23M403 217v23M460 217v23M517 217v23M-120 239h600M-56 240v21M-8 240v21M41 240v21M82 240v21M128 240v21M180 240v21M239 240v21M295 240v21M359 240v21M406 240v21M442 240v21M489 240v21M-120 260h600M-88 261v41M-49 261v41M-16 261v41M33 261v41M90 261v41M149 261v41M183 261v41M212 261v41M249 261v41M313 261v41M360 261v41M392 261v41M425 261v41M476 261v41M530 261v41M-120 301h600M-69 302v39M-4 302v39M39 302v39M75 302v39M131 302v39M181 302v39M220 302v39M250 302v39M283 302v39M325 302v39M374 302v39M406 302v39M445 302v39M507 302v39M-120 340h600M-62 341v29M-2 341v29M43 341v29M108 341v29M172 341v29M210 341v29M257 341v29M308 341v29M349 341v29M396 341v29M448 341v29M507 341v29M-120 369h600M-86 370v38M-25 370v38M21 370v38M56 370v38M93 370v38M132 370v38M172 370v38M209 370v38M269 370v38M334 370v38M376 370v38M406 370v38M438 370v38M488 370v38M-120 407h600M-58 408v24M-8 408v24M38 408v24M84 408v24M147 408v24M197 408v24M229 408v24M276 408v24M327 408v24M365 408v24M418 408v24M462 408v24M500 408v24M-120 431h600M-57 432v21M-13 432v21M17 432v21M73 432v21M121 432v21M162 432v21M192 432v21M249 432v21M284 432v21M333 432v21M365 432v21M413 432v21M456 432v21M505 432v21M-120 452h600" stroke="#f9f9f9" stroke-width="1.3" fill="none"/></g></g><polygon points="270.0,0.0 315.0,0.0 405.0,290.0 355.0,290.0" fill="#ececed"/><path d="M281.0,0.0 L371.0,290.0" stroke="#e2e2e4" stroke-width="1" fill="none"/><path d="M286.0,0.0 L376.0,290.0" stroke="#e2e2e4" stroke-width="1" fill="none"/><path d="M291.0,0.0 L381.0,290.0" stroke="#e2e2e4" stroke-width="1" fill="none"/><path d="M296.0,0.0 L386.0,290.0" stroke="#e2e2e4" stroke-width="1" fill="none"/><rect x="305" y="38" width="5" height="40" fill="#dcdcde" transform="rotate(-17.2 305 38)"/><rect x="320" y="93" width="5" height="30" fill="#dcdcde" transform="rotate(-17.2 320 93)"/><rect x="345" y="158" width="5" height="45" fill="#dcdcde" transform="rotate(-17.2 345 158)"/><rect x="365" y="223" width="5" height="30" fill="#dcdcde" transform="rotate(-17.2 365 223)"/><polygon points="915.0,68.0 960.0,83.0 920.0,168.0 875.0,153.0" fill="#e6e6e8"/><rect x="913.0" y="71.0" width="6" height="88" fill="#dddddf" transform="rotate(25 913.0 71.0)"/><rect x="921.0" y="73.5" width="6" height="88" fill="#dddddf" transform="rotate(25 921.0 73.5)"/><rect x="929.0" y="76.0" width="6" height="88" fill="#dddddf" transform="rotate(25 929.0 76.0)"/><rect x="937.0" y="78.5" width="6" height="88" fill="#dddddf" transform="rotate(25 937.0 78.5)"/><rect x="945.0" y="81.0" width="6" height="88" fill="#dddddf" transform="rotate(25 945.0 81.0)"/><rect x="953.0" y="83.5" width="6" height="88" fill="#dddddf" transform="rotate(25 953.0 83.5)"/><path d="M985.0,158.0 L1025.0,143.0 L1065.0,133.0 L1105.0,113.0 L1145.0,93.0 L1185.0,83.0" stroke="#f9f9f9" stroke-width="1.6" fill="none" stroke-linejoin="round"/><path d="M1025.0,143.0 L1011.4,129.8" stroke="#f9f9f9" stroke-width="1.2" fill="none"/><path d="M1065.0,133.0 L1070.9,112.5" stroke="#f9f9f9" stroke-width="1.2" fill="none"/><path d="M1105.0,113.0 L1103.6,92.0" stroke="#f9f9f9" stroke-width="1.2" fill="none"/><path d="M1145.0,93.0 L1160.3,95.8" stroke="#f9f9f9" stroke-width="1.2" fill="none"/><path d="M1045.0,63.0 L1075.0,93.0 L1095.0,123.0 L1115.0,158.0" stroke="#f9f9f9" stroke-width="1.6" fill="none" stroke-linejoin="round"/><path d="M1075.0,93.0 L1091.7,86.8" stroke="#f9f9f9" stroke-width="1.2" fill="none"/><path d="M1095.0,123.0 L1104.2,116.3" stroke="#f9f9f9" stroke-width="1.2" fill="none"/><path d="M1135.0,33.0 L1135.0,73.0 L1155.0,103.0 L1175.0,143.0" stroke="#f9f9f9" stroke-width="1.6" fill="none" stroke-linejoin="round"/><path d="M1135.0,73.0 L1122.3,75.5" stroke="#f9f9f9" stroke-width="1.2" fill="none"/><path d="M1155.0,103.0 L1138.7,98.4" stroke="#f9f9f9" stroke-width="1.2" fill="none"/><path d="M1085.0,38.0 L1110.0,68.0 L1125.0,103.0" stroke="#f9f9f9" stroke-width="1.6" fill="none" stroke-linejoin="round"/><path d="M1110.0,68.0 L1122.6,69.0" stroke="#f9f9f9" stroke-width="1.2" fill="none"/><path d="M1025.0,93.0 L1055.0,108.0 L1075.0,128.0" stroke="#f9f9f9" stroke-width="1.6" fill="none" stroke-linejoin="round"/><path d="M1055.0,108.0 L1051.2,128.6" stroke="#f9f9f9" stroke-width="1.2" fill="none"/><path d="M1195.0,71.0 L1243.0,65.0" stroke="#f9f9f9" stroke-width="1.4" fill="none"/><path d="M1198.0,75.5 L1243.0,69.5" stroke="#f9f9f9" stroke-width="1.4" fill="none"/><path d="M1201.0,80.0 L1243.0,74.0" stroke="#f9f9f9" stroke-width="1.4" fill="none"/><path d="M1204.0,84.5 L1243.0,78.5" stroke="#f9f9f9" stroke-width="1.4" fill="none"/><path d="M1207.0,89.0 L1243.0,83.0" stroke="#f9f9f9" stroke-width="1.4" fill="none"/><path d="M1210.0,93.5 L1243.0,87.5" stroke="#f9f9f9" stroke-width="1.4" fill="none"/><path d="M1213.0,98.0 L1243.0,92.0" stroke="#f9f9f9" stroke-width="1.4" fill="none"/><path d="M1193.0,79.0 L1225.0,111.0 L1247.0,65.0" stroke="#f9f9f9" stroke-width="1.6" fill="none"/><path d="M1243.0,63.0 L1249.0,93.0" stroke="#e6e6e8" stroke-width="1.5" fill="none"/><path d="M1246.0,63.0 L1252.0,93.0" stroke="#e6e6e8" stroke-width="1.5" fill="none"/><path d="M1249.0,63.0 L1255.0,93.0" stroke="#e6e6e8" stroke-width="1.5" fill="none"/><path d="M1252.0,63.0 L1258.0,93.0" stroke="#e6e6e8" stroke-width="1.5" fill="none"/><polygon points="690.0,5.0 735.0,3.0 749.0,93.0 701.0,97.0" fill="#e4eae3"/><polygon points="653.0,147.0 737.0,143.0 743.0,191.0 657.0,193.0" fill="#e4eae3"/><polygon points="607.0,193.0 655.0,191.0 659.0,248.0 609.0,250.0" fill="#e4eae3"/><polygon points="-1.0,21.0 14.0,27.5 41.5,46.0 74.0,75.0 91.5,90.0 116.5,115.0 139.0,140.0 161.5,165.5 184.0,193.0 191.5,205.5 191.5,223.0 204.0,243.0 224.0,255.5 246.5,265.5 256.5,290.0 49.0,290.0 -1.0,255.0" fill="#d0d0d4"/><rect x="1009" y="-9" width="34" height="50" rx="16" transform="rotate(-28 1026 16)" fill="#d0d0d4"/><ellipse cx="877" cy="204" rx="16" ry="26" fill="#dadade"/><ellipse cx="1206" cy="235" rx="15" ry="17" fill="#dedee2"/><path d="M234.0,0.0 L279.0,165.0 L324.0,215.0 L369.0,290.0" stroke="#ffffff" stroke-width="4" fill="none" stroke-linejoin="round"/><path d="M564.0,0.0 L525.0,93.0 L469.0,200.0 L424.0,250.0 L399.0,290.0" stroke="#ffffff" stroke-width="4" fill="none" stroke-linejoin="round"/><path d="M344.0,0.0 L376.0,55.0 L419.0,150.0 L455.0,243.0" stroke="#ffffff" stroke-width="3" fill="none" stroke-linejoin="round"/><path d="M285.0,3.0 L369.0,55.0 L579.0,140.0 L633.0,150.0" stroke="#ffffff" stroke-width="3" fill="none" stroke-linejoin="round"/><path d="M629.0,0.0 L645.0,143.0 L665.0,290.0" stroke="#ffffff" stroke-width="3.5" fill="none" stroke-linejoin="round"/><path d="M740.0,0.0 L775.0,290.0" stroke="#ffffff" stroke-width="3" fill="none" stroke-linejoin="round"/><path d="M803.0,0.0 L835.0,290.0" stroke="#ffffff" stroke-width="3.5" fill="none" stroke-linejoin="round"/><path d="M689.0,0.0 L715.0,290.0" stroke="#ffffff" stroke-width="3" fill="none" stroke-linejoin="round"/><path d="M815.0,125.0 L945.0,250.0" stroke="#ffffff" stroke-width="2.5" fill="none" stroke-linejoin="round"/><path d="M633.0,147.0 L815.0,143.0" stroke="#ffffff" stroke-width="3" fill="none" stroke-linejoin="round"/><path d="M545.0,189.0 L815.0,185.0" stroke="#ffffff" stroke-width="2.5" fill="none" stroke-linejoin="round"/><path d="M545.0,232.0 L815.0,228.0" stroke="#ffffff" stroke-width="2.5" fill="none" stroke-linejoin="round"/><path d="M945.0,143.0 L1257.0,193.0" stroke="#ffffff" stroke-width="2.5" fill="none" stroke-linejoin="round"/><path d="M983.0,0.0 L981.0,53.0 L973.0,83.0 L927.0,200.0 L887.0,260.0 L861.0,290.0" stroke="#ffffff" stroke-width="6" fill="none" stroke-linejoin="round"/><path d="M983.0,0.0 L981.0,53.0 L973.0,83.0 L927.0,200.0 L887.0,260.0 L861.0,290.0" stroke="#efeff0" stroke-width="1.2" fill="none" stroke-linejoin="round"/><circle cx="577.8" cy="28.2" r="15.5" fill="#2c2cb0" fill-opacity="0.72"/><circle cx="632.8" cy="13.8" r="15.5" fill="#1e38f0" fill-opacity="0.7"/><circle cx="511.0" cy="112.0" r="15.5" fill="#2c2cb0" fill-opacity="0.72"/><circle cx="587.0" cy="140.0" r="15.5" fill="#50e6d0" fill-opacity="0.7"/><circle cx="598.5" cy="168.2" r="15.5" fill="#2c2cb0" fill-opacity="0.72"/><circle cx="557.2" cy="187.5" r="15.5" fill="#2c2cb0" fill-opacity="0.72"/><circle cx="466.0" cy="209.2" r="15.5" fill="#2c2cb0" fill-opacity="0.72"/><circle cx="472.8" cy="200.0" r="15.5" fill="#4a9cf6" fill-opacity="0.7"/><circle cx="606.5" cy="246.0" r="15.5" fill="#2c2cb0" fill-opacity="0.72"/><circle cx="633.0" cy="150.0" r="15.5" fill="#2c2cb0" fill-opacity="0.72"/><circle cx="645.0" cy="150.0" r="15.5" fill="#2c2cb0" fill-opacity="0.72"/><circle cx="707.2" cy="143.0" r="15.5" fill="#2c2cb0" fill-opacity="0.72"/></svg></div><div id="cbar"></div>
<div class="cbt" style="left:37px"></div><div class="cbt" style="left:274px"></div><div class="cbt" style="left:515px"></div><div class="cbt" style="left:758px"></div><div class="cbt" style="left:1001px"></div><div class="cbt" style="left:1244px"></div>
<div class="cbl" style="left:37px">2.4</div><div class="cbl" style="left:274px">16.0</div><div class="cbl" style="left:515px">29.6</div><div class="cbl" style="left:758px">43.3</div><div class="cbl" style="left:1001px">56.9</div><div class="cbl" style="left:1244px">70.6</div>
<div id="attr"><span class="lk">Leaflet</span> | Map tiles by <span class="lk">Stamen Design</span>, <span class="lk">CC BY 3.0</span> — Map data © <span class="lk">OpenStreetMap</span></div>

<div id="lm"></div><div id="chartcard"></div>
<div class="title">Рейтинг внешних пересечений, %</div>
<div id="scroll"></div><div id="thumb"></div>
<div class="dot" style="top:379px"></div><div class="dot" style="top:386px"></div><div class="dot" style="top:393px"></div>
<div id="botline"></div><div id="botbar"></div>
<div id="clip"><div class="tk" style="left:439.0px">0</div><div class="tkl" style="left:438.5px"></div><div class="tk" style="left:489.1px">5</div><div class="tkl" style="left:488.6px"></div><div class="tk" style="left:539.3px">10</div><div class="tkl" style="left:538.8px"></div><div class="tk" style="left:589.5px">15</div><div class="tkl" style="left:589.0px"></div><div class="tk" style="left:639.6px">20</div><div class="tkl" style="left:639.1px"></div><div class="tk" style="left:689.8px">25</div><div class="tkl" style="left:689.2px"></div><div class="tk" style="left:739.9px">30</div><div class="tkl" style="left:739.4px"></div><div class="tk" style="left:790.0px">35</div><div class="tkl" style="left:789.5px"></div><div class="tk" style="left:840.2px">40</div><div class="tkl" style="left:839.7px"></div><div class="tk" style="left:890.3px">45</div><div class="tkl" style="left:889.8px"></div><div class="tk" style="left:940.5px">50</div><div class="tkl" style="left:940.0px"></div><div class="tk" style="left:990.6px">55</div><div class="tkl" style="left:990.1px"></div><div class="tk" style="left:1040.8px">60</div><div class="tkl" style="left:1040.3px"></div><div class="tk" style="left:1090.9px">65</div><div class="tkl" style="left:1090.4px"></div><div class="tk" style="left:1141.1px">70</div><div class="tkl" style="left:1140.6px"></div><div class="bar" style="top:470.0px;width:708px;background:#e00000"></div><div class="val" style="left:1165px;top:478.5px">70.59</div><div class="lbl" style="top:473.0px">Дизайн Мастер, 0037, Новосибирск,<br>Мичурина,23-1</div><div class="bar" style="top:513.9px;width:224px;background:#2cffd6"></div><div class="val" style="left:681px;top:522.4px">22.35</div><div class="lbl" style="top:516.9px">Дизайн Мастер, 0338, Новосибирск, Советская<br>,37</div><div class="bar" style="top:557.8px;width:153px;background:#0a9cf6"></div><div class="val" style="left:610px;top:566.3px">15.29</div><div class="lbl" style="top:560.8px">Дизайн Мастер, 0490, Новосибирск, Ленина<br>24</div><div class="bar" style="top:601.7px;width:94px;background:#0a28f8"></div><div class="val" style="left:551px;top:610.2px">9.41</div><div class="lbl" style="top:604.7px">Дизайн Мастер, 1262 , Новосибирск, Пл.<br>Лыщинского, 1</div><div class="bar" style="top:645.6px;width:94px;background:#0a28f8"></div><div class="val" style="left:551px;top:654.1px">9.41</div><div class="lbl" style="top:648.6px">Дизайн Мастер, 18075, Новосибирск, Красный<br>Пр.54,- Фрунзе</div><div class="bar" style="top:689.5px;width:47px;background:#0000b8"></div><div class="val" style="left:504px;top:698.0px">4.71</div><div class="lbl" style="top:692.5px">Дизайн Мастер, 0134, Новосибирск,&nbsp;<br>Ипподромская ул., Кропоткина ул., №1</div><div class="bar" style="top:733.4px;width:47px;background:#0000b8"></div><div class="val" style="left:504px;top:741.9px">4.71</div><div class="lbl" style="top:736.4px">Дизайн Мастер, 0302, Новосибирск,<br>Большевистская ул., въезд на Октябрьский...</div><div class="bar" style="top:777.3px;width:47px;background:#0000b8"></div><div class="val" style="left:504px;top:785.8px">4.71</div><div class="lbl" style="top:788.3px">ТЦ Мега Новосибирск, ул. Ватутина, 107</div><div class="bar" style="top:821.2px;width:47px;background:#0000b8"></div><div class="val" style="left:504px;top:829.7px">4.71</div><div class="lbl" style="top:832.2px">РА Голливуд, Новосибирск, Орджоникидзе&nbsp;</div><div class="bar" style="top:865.1px;width:47px;background:#0000b8"></div><div class="val" style="left:504px;top:873.6px">4.71</div><div class="lbl" style="top:868.1px">Дизайн Мастер, 90239, Новосибирск, Красный<br>Пр.</div></div>
</body></html>
